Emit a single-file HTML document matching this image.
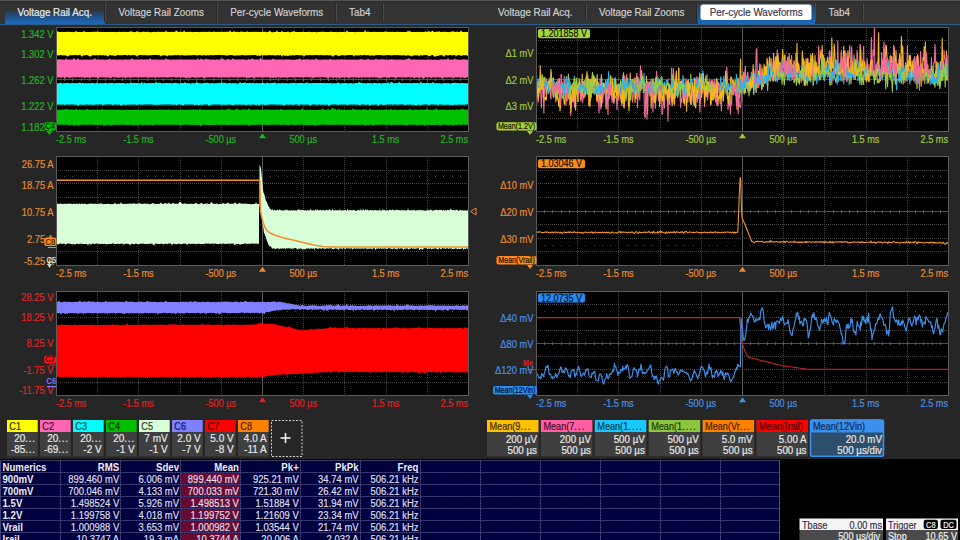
<!DOCTYPE html><html><head><meta charset="utf-8"><style>html,body{margin:0;padding:0;background:#262626;width:960px;height:540px;overflow:hidden} svg{display:block} text{font-family:'Liberation Sans',sans-serif}</style></head><body>
<svg width="960" height="540" viewBox="0 0 960 540">
<rect x="0" y="0" width="960" height="540" fill="#262626"/>
<defs><linearGradient id="tabg" x1="0" y1="0" x2="0" y2="1"><stop offset="0" stop-color="#2a3c50"/><stop offset="1" stop-color="#176ac4"/></linearGradient></defs>
<rect x="0" y="0" width="960" height="24" fill="#333333"/>
<rect x="0" y="0" width="960" height="1" fill="#555555"/>
<rect x="0" y="1" width="960" height="1" fill="#2c2c2c"/>
<path d="M5,24 V11.5 Q5,11 5.5,11 H104.5 Q105,11 105,11.5 V24 Z" fill="url(#tabg)"/>
<rect x="104" y="3" width="1" height="19" fill="#292929"/><rect x="105" y="3" width="1" height="19" fill="#4a4a4a"/>
<rect x="216" y="3" width="1" height="19" fill="#292929"/><rect x="217" y="3" width="1" height="19" fill="#4a4a4a"/>
<rect x="335" y="3" width="1" height="19" fill="#292929"/><rect x="336" y="3" width="1" height="19" fill="#4a4a4a"/>
<rect x="382" y="3" width="1" height="19" fill="#292929"/><rect x="383" y="3" width="1" height="19" fill="#4a4a4a"/>
<rect x="585" y="3" width="1" height="19" fill="#292929"/><rect x="586" y="3" width="1" height="19" fill="#4a4a4a"/>
<rect x="696" y="3" width="1" height="19" fill="#292929"/><rect x="697" y="3" width="1" height="19" fill="#4a4a4a"/>
<rect x="814" y="3" width="1" height="19" fill="#292929"/><rect x="815" y="3" width="1" height="19" fill="#4a4a4a"/>
<rect x="862" y="3" width="1" height="19" fill="#292929"/><rect x="863" y="3" width="1" height="19" fill="#4a4a4a"/>
<path d="M698,24 V7 Q698,3 702,3 H811 Q815,3 815,7 V24 Z" fill="url(#tabg)"/>
<rect x="700.5" y="4.5" width="111" height="15.5" rx="2.5" fill="#ffffff"/>
<rect x="0" y="24" width="960" height="1" fill="#2a5a88"/><rect x="0" y="25" width="960" height="1" fill="#17324c"/>
<text transform="translate(54.70,16.30) scale(0.895,1)" fill="#ececec" stroke="#ececec" stroke-width="0.2" font-size="11" text-anchor="middle" font-weight="normal" >Voltage Rail Acq.</text>
<text transform="translate(161.20,16.30) scale(0.895,1)" fill="#d0d0d0" stroke="#d0d0d0" stroke-width="0.2" font-size="11" text-anchor="middle" font-weight="normal" >Voltage Rail Zooms</text>
<text transform="translate(276.70,16.30) scale(0.895,1)" fill="#d0d0d0" stroke="#d0d0d0" stroke-width="0.2" font-size="11" text-anchor="middle" font-weight="normal" >Per-cycle Waveforms</text>
<text transform="translate(359.70,16.30) scale(0.895,1)" fill="#d0d0d0" stroke="#d0d0d0" stroke-width="0.2" font-size="11" text-anchor="middle" font-weight="normal" >Tab4</text>
<text transform="translate(535.20,16.30) scale(0.895,1)" fill="#d0d0d0" stroke="#d0d0d0" stroke-width="0.2" font-size="11" text-anchor="middle" font-weight="normal" >Voltage Rail Acq.</text>
<text transform="translate(641.70,16.30) scale(0.895,1)" fill="#d0d0d0" stroke="#d0d0d0" stroke-width="0.2" font-size="11" text-anchor="middle" font-weight="normal" >Voltage Rail Zooms</text>
<text transform="translate(756.20,16.30) scale(0.895,1)" fill="#3a3550" stroke="#3a3550" stroke-width="0.2" font-size="11" text-anchor="middle" font-weight="normal" >Per-cycle Waveforms</text>
<text transform="translate(839.20,16.30) scale(0.895,1)" fill="#d0d0d0" stroke="#d0d0d0" stroke-width="0.2" font-size="11" text-anchor="middle" font-weight="normal" >Tab4</text>
<rect x="56" y="27" width="412" height="104" fill="#000"/>
<line x1="97.5" y1="27" x2="97.5" y2="131" stroke="#464646" stroke-width="1" stroke-dasharray="1 1"/><line x1="138.5" y1="27" x2="138.5" y2="131" stroke="#464646" stroke-width="1" stroke-dasharray="1 1"/><line x1="180.5" y1="27" x2="180.5" y2="131" stroke="#464646" stroke-width="1" stroke-dasharray="1 1"/><line x1="221.5" y1="27" x2="221.5" y2="131" stroke="#464646" stroke-width="1" stroke-dasharray="1 1"/><line x1="262.5" y1="27" x2="262.5" y2="131" stroke="#5a5a5a" stroke-width="1"/><line x1="303.5" y1="27" x2="303.5" y2="131" stroke="#464646" stroke-width="1" stroke-dasharray="1 1"/><line x1="344.5" y1="27" x2="344.5" y2="131" stroke="#464646" stroke-width="1" stroke-dasharray="1 1"/><line x1="386.5" y1="27" x2="386.5" y2="131" stroke="#464646" stroke-width="1" stroke-dasharray="1 1"/><line x1="427.5" y1="27" x2="427.5" y2="131" stroke="#464646" stroke-width="1" stroke-dasharray="1 1"/><line x1="56" y1="40.5" x2="468" y2="40.5" stroke="#464646" stroke-width="1" stroke-dasharray="1 1"/><line x1="56" y1="53.5" x2="468" y2="53.5" stroke="#464646" stroke-width="1" stroke-dasharray="1 1"/><line x1="56" y1="66.5" x2="468" y2="66.5" stroke="#464646" stroke-width="1" stroke-dasharray="1 1"/><line x1="56" y1="79.5" x2="468" y2="79.5" stroke="#4e4e4e" stroke-width="1"/><line x1="64.5" y1="78.0" x2="64.5" y2="81.0" stroke="#5a5a5a" stroke-width="1"/><line x1="72.5" y1="78.0" x2="72.5" y2="81.0" stroke="#5a5a5a" stroke-width="1"/><line x1="81.5" y1="78.0" x2="81.5" y2="81.0" stroke="#5a5a5a" stroke-width="1"/><line x1="89.5" y1="78.0" x2="89.5" y2="81.0" stroke="#5a5a5a" stroke-width="1"/><line x1="97.5" y1="78.0" x2="97.5" y2="81.0" stroke="#5a5a5a" stroke-width="1"/><line x1="105.5" y1="78.0" x2="105.5" y2="81.0" stroke="#5a5a5a" stroke-width="1"/><line x1="114.5" y1="78.0" x2="114.5" y2="81.0" stroke="#5a5a5a" stroke-width="1"/><line x1="122.5" y1="78.0" x2="122.5" y2="81.0" stroke="#5a5a5a" stroke-width="1"/><line x1="130.5" y1="78.0" x2="130.5" y2="81.0" stroke="#5a5a5a" stroke-width="1"/><line x1="138.5" y1="78.0" x2="138.5" y2="81.0" stroke="#5a5a5a" stroke-width="1"/><line x1="147.5" y1="78.0" x2="147.5" y2="81.0" stroke="#5a5a5a" stroke-width="1"/><line x1="155.5" y1="78.0" x2="155.5" y2="81.0" stroke="#5a5a5a" stroke-width="1"/><line x1="163.5" y1="78.0" x2="163.5" y2="81.0" stroke="#5a5a5a" stroke-width="1"/><line x1="171.5" y1="78.0" x2="171.5" y2="81.0" stroke="#5a5a5a" stroke-width="1"/><line x1="180.5" y1="78.0" x2="180.5" y2="81.0" stroke="#5a5a5a" stroke-width="1"/><line x1="188.5" y1="78.0" x2="188.5" y2="81.0" stroke="#5a5a5a" stroke-width="1"/><line x1="196.5" y1="78.0" x2="196.5" y2="81.0" stroke="#5a5a5a" stroke-width="1"/><line x1="204.5" y1="78.0" x2="204.5" y2="81.0" stroke="#5a5a5a" stroke-width="1"/><line x1="213.5" y1="78.0" x2="213.5" y2="81.0" stroke="#5a5a5a" stroke-width="1"/><line x1="221.5" y1="78.0" x2="221.5" y2="81.0" stroke="#5a5a5a" stroke-width="1"/><line x1="229.5" y1="78.0" x2="229.5" y2="81.0" stroke="#5a5a5a" stroke-width="1"/><line x1="237.5" y1="78.0" x2="237.5" y2="81.0" stroke="#5a5a5a" stroke-width="1"/><line x1="246.5" y1="78.0" x2="246.5" y2="81.0" stroke="#5a5a5a" stroke-width="1"/><line x1="254.5" y1="78.0" x2="254.5" y2="81.0" stroke="#5a5a5a" stroke-width="1"/><line x1="262.5" y1="78.0" x2="262.5" y2="81.0" stroke="#5a5a5a" stroke-width="1"/><line x1="270.5" y1="78.0" x2="270.5" y2="81.0" stroke="#5a5a5a" stroke-width="1"/><line x1="278.5" y1="78.0" x2="278.5" y2="81.0" stroke="#5a5a5a" stroke-width="1"/><line x1="287.5" y1="78.0" x2="287.5" y2="81.0" stroke="#5a5a5a" stroke-width="1"/><line x1="295.5" y1="78.0" x2="295.5" y2="81.0" stroke="#5a5a5a" stroke-width="1"/><line x1="303.5" y1="78.0" x2="303.5" y2="81.0" stroke="#5a5a5a" stroke-width="1"/><line x1="311.5" y1="78.0" x2="311.5" y2="81.0" stroke="#5a5a5a" stroke-width="1"/><line x1="320.5" y1="78.0" x2="320.5" y2="81.0" stroke="#5a5a5a" stroke-width="1"/><line x1="328.5" y1="78.0" x2="328.5" y2="81.0" stroke="#5a5a5a" stroke-width="1"/><line x1="336.5" y1="78.0" x2="336.5" y2="81.0" stroke="#5a5a5a" stroke-width="1"/><line x1="344.5" y1="78.0" x2="344.5" y2="81.0" stroke="#5a5a5a" stroke-width="1"/><line x1="353.5" y1="78.0" x2="353.5" y2="81.0" stroke="#5a5a5a" stroke-width="1"/><line x1="361.5" y1="78.0" x2="361.5" y2="81.0" stroke="#5a5a5a" stroke-width="1"/><line x1="369.5" y1="78.0" x2="369.5" y2="81.0" stroke="#5a5a5a" stroke-width="1"/><line x1="377.5" y1="78.0" x2="377.5" y2="81.0" stroke="#5a5a5a" stroke-width="1"/><line x1="386.5" y1="78.0" x2="386.5" y2="81.0" stroke="#5a5a5a" stroke-width="1"/><line x1="394.5" y1="78.0" x2="394.5" y2="81.0" stroke="#5a5a5a" stroke-width="1"/><line x1="402.5" y1="78.0" x2="402.5" y2="81.0" stroke="#5a5a5a" stroke-width="1"/><line x1="410.5" y1="78.0" x2="410.5" y2="81.0" stroke="#5a5a5a" stroke-width="1"/><line x1="419.5" y1="78.0" x2="419.5" y2="81.0" stroke="#5a5a5a" stroke-width="1"/><line x1="427.5" y1="78.0" x2="427.5" y2="81.0" stroke="#5a5a5a" stroke-width="1"/><line x1="435.5" y1="78.0" x2="435.5" y2="81.0" stroke="#5a5a5a" stroke-width="1"/><line x1="443.5" y1="78.0" x2="443.5" y2="81.0" stroke="#5a5a5a" stroke-width="1"/><line x1="452.5" y1="78.0" x2="452.5" y2="81.0" stroke="#5a5a5a" stroke-width="1"/><line x1="460.5" y1="78.0" x2="460.5" y2="81.0" stroke="#5a5a5a" stroke-width="1"/><line x1="56" y1="92.5" x2="468" y2="92.5" stroke="#464646" stroke-width="1" stroke-dasharray="1 1"/><line x1="56" y1="105.5" x2="468" y2="105.5" stroke="#464646" stroke-width="1" stroke-dasharray="1 1"/><line x1="56" y1="118.5" x2="468" y2="118.5" stroke="#464646" stroke-width="1" stroke-dasharray="1 1"/><rect x="64" y="47.0" width="1" height="1" fill="#4a4a4a"/><rect x="72" y="47.0" width="1" height="1" fill="#4a4a4a"/><rect x="81" y="47.0" width="1" height="1" fill="#4a4a4a"/><rect x="89" y="47.0" width="1" height="1" fill="#4a4a4a"/><rect x="105" y="47.0" width="1" height="1" fill="#4a4a4a"/><rect x="114" y="47.0" width="1" height="1" fill="#4a4a4a"/><rect x="122" y="47.0" width="1" height="1" fill="#4a4a4a"/><rect x="130" y="47.0" width="1" height="1" fill="#4a4a4a"/><rect x="147" y="47.0" width="1" height="1" fill="#4a4a4a"/><rect x="155" y="47.0" width="1" height="1" fill="#4a4a4a"/><rect x="163" y="47.0" width="1" height="1" fill="#4a4a4a"/><rect x="171" y="47.0" width="1" height="1" fill="#4a4a4a"/><rect x="188" y="47.0" width="1" height="1" fill="#4a4a4a"/><rect x="196" y="47.0" width="1" height="1" fill="#4a4a4a"/><rect x="204" y="47.0" width="1" height="1" fill="#4a4a4a"/><rect x="213" y="47.0" width="1" height="1" fill="#4a4a4a"/><rect x="229" y="47.0" width="1" height="1" fill="#4a4a4a"/><rect x="237" y="47.0" width="1" height="1" fill="#4a4a4a"/><rect x="246" y="47.0" width="1" height="1" fill="#4a4a4a"/><rect x="254" y="47.0" width="1" height="1" fill="#4a4a4a"/><rect x="270" y="47.0" width="1" height="1" fill="#4a4a4a"/><rect x="278" y="47.0" width="1" height="1" fill="#4a4a4a"/><rect x="287" y="47.0" width="1" height="1" fill="#4a4a4a"/><rect x="295" y="47.0" width="1" height="1" fill="#4a4a4a"/><rect x="311" y="47.0" width="1" height="1" fill="#4a4a4a"/><rect x="320" y="47.0" width="1" height="1" fill="#4a4a4a"/><rect x="328" y="47.0" width="1" height="1" fill="#4a4a4a"/><rect x="336" y="47.0" width="1" height="1" fill="#4a4a4a"/><rect x="353" y="47.0" width="1" height="1" fill="#4a4a4a"/><rect x="361" y="47.0" width="1" height="1" fill="#4a4a4a"/><rect x="369" y="47.0" width="1" height="1" fill="#4a4a4a"/><rect x="377" y="47.0" width="1" height="1" fill="#4a4a4a"/><rect x="394" y="47.0" width="1" height="1" fill="#4a4a4a"/><rect x="402" y="47.0" width="1" height="1" fill="#4a4a4a"/><rect x="410" y="47.0" width="1" height="1" fill="#4a4a4a"/><rect x="419" y="47.0" width="1" height="1" fill="#4a4a4a"/><rect x="435" y="47.0" width="1" height="1" fill="#4a4a4a"/><rect x="443" y="47.0" width="1" height="1" fill="#4a4a4a"/><rect x="452" y="47.0" width="1" height="1" fill="#4a4a4a"/><rect x="460" y="47.0" width="1" height="1" fill="#4a4a4a"/><rect x="64" y="112.0" width="1" height="1" fill="#4a4a4a"/><rect x="72" y="112.0" width="1" height="1" fill="#4a4a4a"/><rect x="81" y="112.0" width="1" height="1" fill="#4a4a4a"/><rect x="89" y="112.0" width="1" height="1" fill="#4a4a4a"/><rect x="105" y="112.0" width="1" height="1" fill="#4a4a4a"/><rect x="114" y="112.0" width="1" height="1" fill="#4a4a4a"/><rect x="122" y="112.0" width="1" height="1" fill="#4a4a4a"/><rect x="130" y="112.0" width="1" height="1" fill="#4a4a4a"/><rect x="147" y="112.0" width="1" height="1" fill="#4a4a4a"/><rect x="155" y="112.0" width="1" height="1" fill="#4a4a4a"/><rect x="163" y="112.0" width="1" height="1" fill="#4a4a4a"/><rect x="171" y="112.0" width="1" height="1" fill="#4a4a4a"/><rect x="188" y="112.0" width="1" height="1" fill="#4a4a4a"/><rect x="196" y="112.0" width="1" height="1" fill="#4a4a4a"/><rect x="204" y="112.0" width="1" height="1" fill="#4a4a4a"/><rect x="213" y="112.0" width="1" height="1" fill="#4a4a4a"/><rect x="229" y="112.0" width="1" height="1" fill="#4a4a4a"/><rect x="237" y="112.0" width="1" height="1" fill="#4a4a4a"/><rect x="246" y="112.0" width="1" height="1" fill="#4a4a4a"/><rect x="254" y="112.0" width="1" height="1" fill="#4a4a4a"/><rect x="270" y="112.0" width="1" height="1" fill="#4a4a4a"/><rect x="278" y="112.0" width="1" height="1" fill="#4a4a4a"/><rect x="287" y="112.0" width="1" height="1" fill="#4a4a4a"/><rect x="295" y="112.0" width="1" height="1" fill="#4a4a4a"/><rect x="311" y="112.0" width="1" height="1" fill="#4a4a4a"/><rect x="320" y="112.0" width="1" height="1" fill="#4a4a4a"/><rect x="328" y="112.0" width="1" height="1" fill="#4a4a4a"/><rect x="336" y="112.0" width="1" height="1" fill="#4a4a4a"/><rect x="353" y="112.0" width="1" height="1" fill="#4a4a4a"/><rect x="361" y="112.0" width="1" height="1" fill="#4a4a4a"/><rect x="369" y="112.0" width="1" height="1" fill="#4a4a4a"/><rect x="377" y="112.0" width="1" height="1" fill="#4a4a4a"/><rect x="394" y="112.0" width="1" height="1" fill="#4a4a4a"/><rect x="402" y="112.0" width="1" height="1" fill="#4a4a4a"/><rect x="410" y="112.0" width="1" height="1" fill="#4a4a4a"/><rect x="419" y="112.0" width="1" height="1" fill="#4a4a4a"/><rect x="435" y="112.0" width="1" height="1" fill="#4a4a4a"/><rect x="443" y="112.0" width="1" height="1" fill="#4a4a4a"/><rect x="452" y="112.0" width="1" height="1" fill="#4a4a4a"/><rect x="460" y="112.0" width="1" height="1" fill="#4a4a4a"/>
<svg x="56" y="27" width="412" height="104" viewBox="56 27 412 104" overflow="hidden">
<path d="M56.0,32.0 L57.0,31.1 L58.0,31.4 L59.0,32.1 L60.0,32.0 L61.0,32.1 L62.0,31.8 L63.0,32.0 L64.0,31.9 L65.0,32.0 L66.0,32.1 L67.0,31.8 L68.0,31.8 L69.0,31.8 L70.0,31.9 L71.0,31.8 L72.0,32.2 L73.0,31.8 L74.0,32.2 L75.0,31.8 L76.0,31.0 L77.0,31.8 L78.0,32.0 L79.0,32.1 L80.0,31.9 L81.0,32.0 L82.0,31.9 L83.0,31.8 L84.0,30.9 L85.0,32.1 L86.0,32.1 L87.0,31.9 L88.0,32.0 L89.0,32.0 L90.0,32.1 L91.0,31.9 L92.0,31.7 L93.0,32.0 L94.0,31.8 L95.0,31.7 L96.0,31.8 L97.0,31.7 L98.0,31.7 L99.0,31.7 L100.0,32.1 L101.0,31.8 L102.0,32.2 L103.0,31.8 L104.0,32.0 L105.0,32.0 L106.0,32.1 L107.0,32.1 L108.0,32.0 L109.0,31.9 L110.0,31.8 L111.0,32.1 L112.0,32.0 L113.0,32.0 L114.0,31.7 L115.0,32.2 L116.0,32.1 L117.0,32.0 L118.0,32.1 L119.0,31.8 L120.0,31.7 L121.0,31.9 L122.0,32.0 L123.0,31.7 L124.0,31.8 L125.0,32.2 L126.0,31.8 L127.0,31.9 L128.0,32.1 L129.0,31.7 L130.0,31.9 L131.0,30.8 L132.0,31.9 L133.0,31.8 L134.0,32.2 L135.0,32.0 L136.0,32.1 L137.0,30.9 L138.0,31.9 L139.0,32.2 L140.0,31.9 L141.0,31.9 L142.0,32.2 L143.0,31.8 L144.0,31.6 L145.0,31.9 L146.0,32.1 L147.0,31.8 L148.0,31.7 L149.0,31.9 L150.0,32.2 L151.0,32.2 L152.0,32.1 L153.0,32.1 L154.0,31.7 L155.0,32.0 L156.0,32.0 L157.0,32.2 L158.0,31.6 L159.0,31.9 L160.0,31.8 L161.0,32.1 L162.0,31.8 L163.0,32.1 L164.0,31.8 L165.0,31.9 L166.0,30.5 L167.0,31.9 L168.0,31.8 L169.0,32.2 L170.0,31.8 L171.0,32.0 L172.0,31.8 L173.0,32.1 L174.0,31.7 L175.0,31.9 L176.0,30.4 L177.0,30.9 L178.0,32.0 L179.0,32.1 L180.0,31.7 L181.0,31.8 L182.0,32.0 L183.0,32.0 L184.0,30.4 L185.0,31.7 L186.0,32.0 L187.0,32.0 L188.0,31.8 L189.0,32.1 L190.0,31.7 L191.0,31.7 L192.0,32.2 L193.0,31.9 L194.0,32.1 L195.0,31.8 L196.0,32.0 L197.0,32.1 L198.0,32.1 L199.0,32.1 L200.0,32.2 L201.0,31.8 L202.0,31.9 L203.0,31.7 L204.0,31.8 L205.0,32.0 L206.0,31.7 L207.0,32.0 L208.0,31.7 L209.0,31.8 L210.0,31.7 L211.0,32.0 L212.0,32.1 L213.0,32.1 L214.0,31.2 L215.0,32.1 L216.0,32.0 L217.0,32.0 L218.0,31.8 L219.0,31.9 L220.0,31.7 L221.0,32.0 L222.0,31.8 L223.0,32.0 L224.0,31.8 L225.0,32.1 L226.0,31.7 L227.0,31.7 L228.0,31.8 L229.0,31.7 L230.0,30.6 L231.0,32.0 L232.0,32.0 L233.0,32.1 L234.0,31.1 L235.0,32.1 L236.0,31.8 L237.0,31.7 L238.0,32.0 L239.0,32.1 L240.0,32.2 L241.0,31.3 L242.0,31.7 L243.0,32.0 L244.0,31.8 L245.0,32.0 L246.0,32.2 L247.0,31.2 L248.0,31.8 L249.0,32.0 L250.0,32.0 L251.0,31.8 L252.0,32.1 L253.0,32.1 L254.0,31.8 L255.0,31.7 L256.0,31.9 L257.0,31.8 L258.0,32.1 L259.0,31.7 L260.0,32.1 L261.0,31.9 L262.0,32.1 L263.0,31.5 L264.0,32.0 L265.0,31.5 L266.0,32.2 L267.0,32.1 L268.0,31.9 L269.0,31.7 L270.0,30.5 L271.0,32.0 L272.0,32.2 L273.0,32.2 L274.0,32.1 L275.0,32.1 L276.0,32.1 L277.0,30.3 L278.0,31.9 L279.0,32.1 L280.0,32.1 L281.0,32.0 L282.0,30.7 L283.0,32.1 L284.0,32.0 L285.0,31.9 L286.0,32.0 L287.0,32.0 L288.0,31.2 L289.0,32.2 L290.0,32.2 L291.0,32.1 L292.0,31.8 L293.0,31.7 L294.0,31.1 L295.0,31.8 L296.0,31.9 L297.0,31.9 L298.0,32.1 L299.0,32.1 L300.0,31.9 L301.0,31.9 L302.0,31.9 L303.0,31.7 L304.0,32.0 L305.0,32.1 L306.0,31.9 L307.0,31.9 L308.0,32.1 L309.0,31.4 L310.0,31.9 L311.0,32.1 L312.0,32.2 L313.0,32.0 L314.0,31.9 L315.0,31.7 L316.0,32.2 L317.0,32.2 L318.0,31.7 L319.0,31.9 L320.0,32.0 L321.0,31.8 L322.0,31.8 L323.0,31.7 L324.0,31.8 L325.0,32.1 L326.0,31.9 L327.0,32.1 L328.0,32.1 L329.0,32.0 L330.0,31.7 L331.0,31.7 L332.0,31.8 L333.0,32.0 L334.0,31.9 L335.0,32.1 L336.0,31.9 L337.0,32.0 L338.0,32.2 L339.0,32.1 L340.0,31.8 L341.0,31.9 L342.0,32.0 L343.0,32.1 L344.0,31.7 L345.0,32.2 L346.0,32.0 L347.0,30.3 L348.0,31.8 L349.0,32.0 L350.0,32.0 L351.0,32.1 L352.0,32.1 L353.0,31.9 L354.0,32.0 L355.0,32.2 L356.0,31.9 L357.0,32.0 L358.0,31.9 L359.0,31.8 L360.0,32.0 L361.0,32.0 L362.0,32.0 L363.0,32.1 L364.0,32.1 L365.0,30.1 L366.0,31.7 L367.0,32.1 L368.0,31.3 L369.0,31.9 L370.0,31.9 L371.0,32.0 L372.0,32.1 L373.0,31.8 L374.0,32.0 L375.0,31.8 L376.0,32.0 L377.0,31.9 L378.0,31.8 L379.0,32.2 L380.0,31.7 L381.0,31.9 L382.0,31.8 L383.0,32.1 L384.0,32.1 L385.0,31.2 L386.0,32.0 L387.0,31.7 L388.0,32.0 L389.0,31.8 L390.0,32.1 L391.0,31.8 L392.0,31.9 L393.0,31.8 L394.0,32.0 L395.0,32.1 L396.0,32.0 L397.0,31.7 L398.0,31.7 L399.0,31.9 L400.0,31.8 L401.0,32.0 L402.0,32.1 L403.0,31.9 L404.0,32.1 L405.0,32.0 L406.0,32.1 L407.0,32.1 L408.0,30.3 L409.0,31.9 L410.0,30.6 L411.0,31.9 L412.0,31.9 L413.0,31.9 L414.0,32.0 L415.0,32.0 L416.0,32.1 L417.0,32.1 L418.0,31.8 L419.0,31.9 L420.0,31.8 L421.0,32.2 L422.0,31.9 L423.0,31.9 L424.0,31.9 L425.0,31.5 L426.0,31.7 L427.0,31.8 L428.0,32.0 L429.0,30.7 L430.0,31.9 L431.0,31.9 L432.0,30.8 L433.0,31.0 L434.0,32.2 L435.0,32.1 L436.0,31.8 L437.0,31.8 L438.0,31.7 L439.0,31.2 L440.0,31.8 L441.0,31.9 L442.0,31.8 L443.0,32.0 L444.0,31.8 L445.0,31.8 L446.0,31.7 L447.0,32.0 L448.0,31.9 L449.0,32.2 L450.0,31.8 L451.0,31.8 L452.0,31.8 L453.0,31.0 L454.0,31.8 L455.0,31.9 L456.0,31.8 L457.0,31.8 L458.0,31.8 L459.0,32.1 L460.0,32.0 L461.0,30.3 L462.0,31.8 L463.0,31.9 L464.0,32.0 L465.0,32.0 L466.0,31.7 L467.0,32.0 L468.0,32.0 L468.0,56.5 L467.0,55.3 L466.0,55.0 L465.0,55.4 L464.0,55.1 L463.0,55.5 L462.0,55.3 L461.0,56.3 L460.0,55.2 L459.0,55.1 L458.0,55.2 L457.0,55.3 L456.0,56.7 L455.0,55.1 L454.0,55.1 L453.0,55.4 L452.0,55.3 L451.0,55.3 L450.0,55.0 L449.0,55.2 L448.0,55.4 L447.0,55.2 L446.0,55.3 L445.0,55.2 L444.0,56.9 L443.0,55.4 L442.0,55.3 L441.0,55.3 L440.0,55.0 L439.0,55.4 L438.0,56.2 L437.0,55.5 L436.0,56.5 L435.0,56.5 L434.0,56.4 L433.0,55.1 L432.0,55.1 L431.0,55.5 L430.0,55.9 L429.0,56.5 L428.0,55.2 L427.0,55.1 L426.0,55.2 L425.0,55.0 L424.0,55.3 L423.0,55.3 L422.0,55.5 L421.0,55.5 L420.0,55.0 L419.0,56.7 L418.0,55.2 L417.0,55.5 L416.0,55.2 L415.0,55.3 L414.0,55.4 L413.0,55.4 L412.0,56.7 L411.0,55.2 L410.0,56.4 L409.0,55.2 L408.0,55.2 L407.0,55.2 L406.0,56.1 L405.0,55.3 L404.0,55.3 L403.0,55.4 L402.0,55.3 L401.0,55.5 L400.0,55.1 L399.0,55.5 L398.0,55.1 L397.0,55.0 L396.0,55.3 L395.0,55.2 L394.0,55.0 L393.0,55.2 L392.0,55.4 L391.0,55.2 L390.0,55.2 L389.0,55.2 L388.0,55.1 L387.0,55.1 L386.0,55.1 L385.0,55.2 L384.0,55.7 L383.0,55.2 L382.0,55.2 L381.0,55.3 L380.0,55.1 L379.0,55.1 L378.0,55.2 L377.0,55.1 L376.0,55.3 L375.0,55.3 L374.0,56.1 L373.0,55.3 L372.0,55.4 L371.0,55.4 L370.0,55.4 L369.0,55.2 L368.0,55.4 L367.0,55.1 L366.0,55.4 L365.0,55.1 L364.0,55.1 L363.0,55.2 L362.0,55.4 L361.0,55.1 L360.0,55.3 L359.0,55.4 L358.0,55.2 L357.0,55.4 L356.0,55.4 L355.0,55.1 L354.0,57.0 L353.0,55.3 L352.0,55.0 L351.0,55.3 L350.0,55.1 L349.0,55.1 L348.0,55.0 L347.0,55.4 L346.0,55.3 L345.0,55.2 L344.0,55.4 L343.0,55.2 L342.0,55.0 L341.0,55.4 L340.0,55.4 L339.0,56.6 L338.0,55.5 L337.0,55.4 L336.0,55.0 L335.0,55.3 L334.0,55.5 L333.0,57.0 L332.0,55.4 L331.0,55.4 L330.0,55.3 L329.0,55.2 L328.0,55.5 L327.0,55.0 L326.0,55.3 L325.0,55.2 L324.0,55.4 L323.0,55.0 L322.0,55.4 L321.0,55.0 L320.0,55.0 L319.0,55.4 L318.0,55.1 L317.0,55.0 L316.0,55.2 L315.0,55.1 L314.0,55.3 L313.0,55.0 L312.0,55.4 L311.0,55.1 L310.0,55.3 L309.0,55.1 L308.0,55.3 L307.0,55.3 L306.0,55.3 L305.0,55.5 L304.0,56.8 L303.0,55.2 L302.0,55.4 L301.0,55.1 L300.0,55.4 L299.0,55.1 L298.0,55.3 L297.0,55.0 L296.0,55.1 L295.0,55.4 L294.0,55.4 L293.0,55.1 L292.0,55.5 L291.0,55.5 L290.0,55.2 L289.0,55.4 L288.0,56.4 L287.0,55.5 L286.0,55.4 L285.0,56.3 L284.0,55.3 L283.0,55.3 L282.0,56.9 L281.0,55.1 L280.0,55.2 L279.0,55.4 L278.0,55.1 L277.0,55.2 L276.0,55.5 L275.0,55.4 L274.0,55.3 L273.0,55.2 L272.0,55.3 L271.0,55.2 L270.0,55.2 L269.0,55.1 L268.0,55.2 L267.0,55.5 L266.0,55.3 L265.0,55.3 L264.0,55.4 L263.0,55.3 L262.0,55.3 L261.0,55.2 L260.0,56.5 L259.0,55.4 L258.0,55.5 L257.0,56.0 L256.0,55.1 L255.0,55.1 L254.0,55.2 L253.0,55.1 L252.0,55.2 L251.0,55.1 L250.0,55.3 L249.0,55.2 L248.0,55.3 L247.0,55.2 L246.0,55.4 L245.0,55.2 L244.0,55.4 L243.0,55.1 L242.0,55.1 L241.0,55.2 L240.0,55.5 L239.0,55.2 L238.0,55.5 L237.0,55.4 L236.0,55.1 L235.0,56.2 L234.0,55.2 L233.0,55.4 L232.0,55.1 L231.0,55.0 L230.0,55.2 L229.0,55.1 L228.0,55.4 L227.0,55.7 L226.0,55.2 L225.0,55.2 L224.0,55.5 L223.0,55.1 L222.0,55.1 L221.0,55.1 L220.0,55.0 L219.0,55.1 L218.0,55.0 L217.0,55.1 L216.0,55.3 L215.0,55.0 L214.0,55.3 L213.0,55.3 L212.0,55.3 L211.0,55.0 L210.0,55.3 L209.0,55.3 L208.0,55.4 L207.0,55.0 L206.0,55.4 L205.0,55.5 L204.0,55.1 L203.0,55.3 L202.0,55.7 L201.0,55.2 L200.0,55.1 L199.0,55.0 L198.0,55.5 L197.0,55.5 L196.0,55.2 L195.0,55.1 L194.0,55.2 L193.0,55.0 L192.0,55.2 L191.0,55.3 L190.0,55.4 L189.0,55.1 L188.0,55.5 L187.0,55.3 L186.0,55.5 L185.0,55.5 L184.0,55.4 L183.0,55.2 L182.0,55.2 L181.0,55.1 L180.0,55.4 L179.0,55.1 L178.0,55.1 L177.0,55.4 L176.0,55.1 L175.0,55.3 L174.0,55.3 L173.0,55.2 L172.0,55.6 L171.0,55.2 L170.0,55.4 L169.0,55.6 L168.0,55.3 L167.0,56.7 L166.0,55.3 L165.0,55.4 L164.0,55.3 L163.0,55.3 L162.0,55.4 L161.0,56.8 L160.0,55.2 L159.0,55.3 L158.0,55.1 L157.0,55.0 L156.0,55.1 L155.0,55.0 L154.0,55.1 L153.0,55.1 L152.0,55.1 L151.0,55.4 L150.0,55.1 L149.0,55.4 L148.0,55.4 L147.0,55.3 L146.0,55.2 L145.0,55.2 L144.0,55.0 L143.0,55.3 L142.0,55.2 L141.0,55.1 L140.0,55.1 L139.0,55.2 L138.0,55.0 L137.0,56.9 L136.0,55.3 L135.0,55.4 L134.0,55.1 L133.0,55.1 L132.0,55.0 L131.0,55.8 L130.0,55.1 L129.0,55.1 L128.0,55.2 L127.0,55.4 L126.0,55.1 L125.0,55.0 L124.0,55.1 L123.0,55.3 L122.0,55.3 L121.0,55.2 L120.0,55.3 L119.0,55.3 L118.0,55.1 L117.0,55.3 L116.0,55.4 L115.0,56.5 L114.0,55.3 L113.0,55.5 L112.0,55.5 L111.0,55.3 L110.0,55.1 L109.0,55.5 L108.0,56.8 L107.0,55.5 L106.0,55.5 L105.0,55.4 L104.0,55.5 L103.0,55.1 L102.0,55.5 L101.0,55.3 L100.0,55.3 L99.0,55.1 L98.0,55.5 L97.0,55.1 L96.0,55.3 L95.0,55.4 L94.0,55.1 L93.0,55.4 L92.0,55.3 L91.0,56.2 L90.0,56.8 L89.0,55.7 L88.0,55.4 L87.0,55.1 L86.0,55.0 L85.0,55.3 L84.0,55.4 L83.0,55.4 L82.0,57.0 L81.0,55.5 L80.0,55.0 L79.0,55.1 L78.0,55.5 L77.0,55.1 L76.0,55.3 L75.0,55.1 L74.0,55.2 L73.0,55.2 L72.0,55.3 L71.0,55.2 L70.0,55.3 L69.0,55.4 L68.0,56.4 L67.0,56.2 L66.0,55.3 L65.0,55.4 L64.0,55.2 L63.0,55.4 L62.0,55.3 L61.0,55.1 L60.0,55.0 L59.0,55.5 L58.0,55.4 L57.0,55.0 L56.0,56.3Z" fill="#ffff00"/>
<path d="M56.0,57.9 L57.0,59.5 L58.0,59.6 L59.0,59.2 L60.0,59.3 L61.0,59.4 L62.0,59.4 L63.0,59.5 L64.0,59.7 L65.0,59.7 L66.0,58.0 L67.0,59.4 L68.0,59.8 L69.0,59.6 L70.0,59.5 L71.0,59.5 L72.0,59.6 L73.0,59.6 L74.0,57.6 L75.0,59.5 L76.0,59.7 L77.0,59.3 L78.0,58.0 L79.0,59.8 L80.0,59.8 L81.0,59.6 L82.0,59.7 L83.0,59.5 L84.0,59.7 L85.0,59.4 L86.0,59.6 L87.0,59.6 L88.0,59.8 L89.0,59.7 L90.0,59.7 L91.0,59.6 L92.0,59.4 L93.0,59.6 L94.0,59.3 L95.0,57.8 L96.0,59.7 L97.0,59.5 L98.0,59.5 L99.0,59.2 L100.0,59.7 L101.0,59.5 L102.0,59.4 L103.0,59.6 L104.0,59.6 L105.0,59.7 L106.0,59.4 L107.0,59.8 L108.0,59.7 L109.0,58.8 L110.0,59.3 L111.0,59.4 L112.0,59.7 L113.0,59.3 L114.0,59.6 L115.0,59.5 L116.0,59.5 L117.0,59.7 L118.0,59.6 L119.0,59.4 L120.0,59.7 L121.0,59.5 L122.0,59.7 L123.0,59.8 L124.0,59.5 L125.0,59.7 L126.0,58.9 L127.0,59.7 L128.0,59.7 L129.0,59.5 L130.0,59.4 L131.0,59.4 L132.0,58.0 L133.0,59.3 L134.0,59.4 L135.0,59.6 L136.0,59.5 L137.0,59.4 L138.0,59.6 L139.0,59.8 L140.0,59.4 L141.0,59.3 L142.0,59.3 L143.0,59.5 L144.0,59.6 L145.0,59.5 L146.0,59.6 L147.0,59.3 L148.0,59.3 L149.0,59.7 L150.0,57.9 L151.0,59.3 L152.0,59.7 L153.0,59.7 L154.0,59.3 L155.0,59.4 L156.0,59.4 L157.0,59.6 L158.0,59.5 L159.0,59.7 L160.0,59.7 L161.0,59.4 L162.0,59.4 L163.0,59.8 L164.0,59.6 L165.0,59.5 L166.0,58.0 L167.0,59.4 L168.0,59.3 L169.0,59.6 L170.0,59.4 L171.0,59.7 L172.0,59.7 L173.0,59.6 L174.0,59.4 L175.0,59.7 L176.0,59.6 L177.0,59.4 L178.0,59.4 L179.0,59.6 L180.0,59.5 L181.0,59.4 L182.0,59.6 L183.0,59.4 L184.0,59.7 L185.0,59.5 L186.0,59.4 L187.0,59.6 L188.0,59.7 L189.0,59.6 L190.0,59.4 L191.0,59.5 L192.0,59.5 L193.0,59.5 L194.0,59.4 L195.0,59.7 L196.0,59.5 L197.0,59.4 L198.0,58.1 L199.0,59.8 L200.0,59.7 L201.0,58.2 L202.0,59.4 L203.0,59.6 L204.0,59.4 L205.0,59.6 L206.0,58.2 L207.0,59.5 L208.0,59.0 L209.0,59.6 L210.0,59.7 L211.0,59.3 L212.0,59.7 L213.0,59.5 L214.0,59.5 L215.0,59.7 L216.0,59.8 L217.0,59.0 L218.0,59.7 L219.0,59.8 L220.0,59.7 L221.0,57.9 L222.0,59.3 L223.0,58.3 L224.0,59.7 L225.0,59.7 L226.0,59.6 L227.0,59.6 L228.0,58.7 L229.0,59.4 L230.0,59.6 L231.0,59.8 L232.0,59.2 L233.0,57.9 L234.0,59.6 L235.0,59.6 L236.0,59.4 L237.0,59.6 L238.0,59.8 L239.0,59.3 L240.0,59.5 L241.0,59.5 L242.0,59.6 L243.0,59.0 L244.0,59.8 L245.0,59.6 L246.0,59.7 L247.0,59.7 L248.0,59.7 L249.0,58.6 L250.0,59.8 L251.0,59.4 L252.0,57.9 L253.0,59.3 L254.0,59.0 L255.0,59.7 L256.0,59.4 L257.0,59.3 L258.0,59.6 L259.0,59.7 L260.0,58.4 L261.0,57.7 L262.0,59.7 L263.0,59.5 L264.0,59.5 L265.0,59.7 L266.0,59.4 L267.0,59.7 L268.0,59.8 L269.0,59.6 L270.0,59.6 L271.0,59.7 L272.0,59.6 L273.0,58.6 L274.0,59.0 L275.0,59.7 L276.0,59.5 L277.0,59.4 L278.0,59.5 L279.0,59.4 L280.0,59.4 L281.0,59.6 L282.0,59.6 L283.0,59.7 L284.0,59.8 L285.0,59.5 L286.0,59.6 L287.0,59.6 L288.0,59.5 L289.0,59.6 L290.0,59.4 L291.0,59.7 L292.0,59.7 L293.0,59.7 L294.0,59.8 L295.0,59.7 L296.0,59.5 L297.0,59.4 L298.0,58.9 L299.0,59.6 L300.0,57.9 L301.0,59.8 L302.0,59.8 L303.0,59.8 L304.0,59.5 L305.0,59.6 L306.0,59.4 L307.0,59.3 L308.0,59.3 L309.0,59.5 L310.0,59.7 L311.0,59.8 L312.0,59.3 L313.0,59.4 L314.0,59.7 L315.0,59.6 L316.0,58.0 L317.0,59.6 L318.0,59.6 L319.0,59.7 L320.0,59.7 L321.0,59.7 L322.0,59.7 L323.0,59.4 L324.0,59.6 L325.0,59.5 L326.0,59.7 L327.0,59.4 L328.0,59.5 L329.0,59.7 L330.0,58.8 L331.0,59.4 L332.0,59.4 L333.0,59.7 L334.0,59.6 L335.0,59.7 L336.0,59.7 L337.0,59.6 L338.0,59.3 L339.0,59.7 L340.0,59.6 L341.0,59.5 L342.0,59.3 L343.0,59.6 L344.0,59.6 L345.0,59.8 L346.0,59.5 L347.0,59.7 L348.0,59.8 L349.0,59.5 L350.0,59.4 L351.0,59.7 L352.0,59.4 L353.0,59.5 L354.0,59.7 L355.0,59.6 L356.0,59.7 L357.0,59.5 L358.0,59.7 L359.0,59.4 L360.0,59.4 L361.0,59.0 L362.0,58.9 L363.0,59.6 L364.0,59.7 L365.0,59.7 L366.0,59.8 L367.0,59.4 L368.0,58.2 L369.0,59.6 L370.0,59.8 L371.0,59.7 L372.0,59.6 L373.0,59.7 L374.0,59.5 L375.0,59.6 L376.0,58.4 L377.0,59.4 L378.0,59.6 L379.0,59.5 L380.0,59.5 L381.0,59.8 L382.0,58.3 L383.0,59.8 L384.0,59.3 L385.0,59.6 L386.0,59.7 L387.0,59.4 L388.0,59.8 L389.0,59.4 L390.0,59.6 L391.0,59.6 L392.0,59.0 L393.0,59.5 L394.0,59.7 L395.0,59.6 L396.0,59.8 L397.0,59.8 L398.0,59.5 L399.0,59.5 L400.0,59.7 L401.0,59.4 L402.0,59.7 L403.0,59.8 L404.0,59.7 L405.0,59.5 L406.0,59.4 L407.0,58.9 L408.0,58.7 L409.0,58.0 L410.0,59.3 L411.0,59.6 L412.0,59.8 L413.0,59.3 L414.0,59.4 L415.0,59.3 L416.0,59.8 L417.0,59.4 L418.0,59.8 L419.0,59.4 L420.0,59.8 L421.0,59.6 L422.0,59.7 L423.0,59.4 L424.0,59.7 L425.0,59.7 L426.0,59.7 L427.0,59.7 L428.0,59.8 L429.0,59.5 L430.0,59.7 L431.0,59.5 L432.0,59.7 L433.0,59.8 L434.0,59.8 L435.0,59.6 L436.0,59.8 L437.0,59.8 L438.0,59.7 L439.0,59.7 L440.0,59.4 L441.0,59.3 L442.0,59.5 L443.0,59.6 L444.0,59.4 L445.0,59.3 L446.0,59.5 L447.0,59.4 L448.0,57.6 L449.0,59.4 L450.0,59.7 L451.0,59.4 L452.0,59.5 L453.0,59.8 L454.0,59.5 L455.0,58.3 L456.0,59.6 L457.0,59.4 L458.0,59.4 L459.0,59.7 L460.0,59.7 L461.0,59.7 L462.0,59.6 L463.0,59.3 L464.0,59.2 L465.0,59.4 L466.0,59.4 L467.0,59.4 L468.0,59.6 L468.0,77.4 L467.0,77.2 L466.0,77.4 L465.0,78.4 L464.0,77.7 L463.0,77.6 L462.0,77.7 L461.0,77.5 L460.0,77.7 L459.0,77.2 L458.0,77.5 L457.0,77.8 L456.0,77.3 L455.0,77.4 L454.0,78.5 L453.0,77.6 L452.0,77.6 L451.0,77.6 L450.0,77.7 L449.0,77.3 L448.0,77.6 L447.0,77.7 L446.0,77.6 L445.0,77.6 L444.0,77.6 L443.0,77.7 L442.0,78.9 L441.0,77.5 L440.0,77.4 L439.0,77.7 L438.0,77.3 L437.0,77.6 L436.0,77.4 L435.0,77.4 L434.0,77.5 L433.0,77.5 L432.0,77.6 L431.0,78.7 L430.0,77.2 L429.0,77.3 L428.0,77.4 L427.0,77.5 L426.0,77.3 L425.0,77.5 L424.0,78.3 L423.0,78.9 L422.0,77.4 L421.0,77.5 L420.0,77.3 L419.0,78.4 L418.0,77.2 L417.0,77.6 L416.0,77.4 L415.0,77.7 L414.0,78.7 L413.0,77.3 L412.0,77.6 L411.0,77.4 L410.0,77.5 L409.0,77.3 L408.0,77.6 L407.0,77.5 L406.0,77.6 L405.0,77.7 L404.0,77.5 L403.0,77.2 L402.0,77.5 L401.0,77.4 L400.0,77.5 L399.0,77.3 L398.0,77.4 L397.0,77.3 L396.0,79.1 L395.0,77.4 L394.0,77.6 L393.0,77.3 L392.0,77.5 L391.0,77.3 L390.0,77.4 L389.0,78.3 L388.0,77.6 L387.0,77.5 L386.0,77.4 L385.0,77.2 L384.0,77.6 L383.0,77.4 L382.0,77.6 L381.0,78.6 L380.0,78.0 L379.0,78.6 L378.0,77.5 L377.0,77.4 L376.0,77.4 L375.0,77.4 L374.0,77.2 L373.0,77.6 L372.0,77.5 L371.0,77.5 L370.0,77.4 L369.0,77.5 L368.0,77.6 L367.0,77.4 L366.0,77.8 L365.0,77.4 L364.0,77.4 L363.0,77.6 L362.0,77.7 L361.0,77.6 L360.0,77.3 L359.0,78.3 L358.0,77.4 L357.0,77.6 L356.0,77.7 L355.0,77.5 L354.0,77.3 L353.0,77.5 L352.0,77.5 L351.0,77.6 L350.0,77.5 L349.0,79.0 L348.0,77.4 L347.0,77.6 L346.0,77.3 L345.0,77.7 L344.0,77.3 L343.0,77.7 L342.0,77.6 L341.0,77.5 L340.0,78.6 L339.0,78.2 L338.0,77.6 L337.0,77.4 L336.0,78.1 L335.0,77.3 L334.0,77.3 L333.0,79.0 L332.0,77.2 L331.0,77.2 L330.0,77.7 L329.0,77.2 L328.0,79.3 L327.0,77.6 L326.0,77.4 L325.0,77.5 L324.0,77.3 L323.0,77.3 L322.0,77.6 L321.0,77.3 L320.0,77.6 L319.0,77.3 L318.0,77.7 L317.0,77.2 L316.0,77.2 L315.0,77.4 L314.0,77.4 L313.0,78.7 L312.0,77.3 L311.0,77.5 L310.0,77.5 L309.0,77.4 L308.0,77.2 L307.0,77.3 L306.0,77.4 L305.0,77.3 L304.0,77.5 L303.0,77.4 L302.0,77.3 L301.0,77.6 L300.0,77.5 L299.0,77.5 L298.0,77.2 L297.0,77.4 L296.0,77.3 L295.0,77.5 L294.0,77.6 L293.0,77.7 L292.0,77.6 L291.0,77.3 L290.0,77.6 L289.0,77.2 L288.0,77.4 L287.0,77.8 L286.0,77.5 L285.0,77.8 L284.0,77.4 L283.0,77.4 L282.0,77.4 L281.0,78.0 L280.0,77.5 L279.0,77.5 L278.0,77.3 L277.0,77.6 L276.0,78.7 L275.0,77.3 L274.0,77.5 L273.0,78.2 L272.0,77.5 L271.0,77.8 L270.0,78.1 L269.0,77.3 L268.0,77.6 L267.0,77.6 L266.0,77.2 L265.0,77.5 L264.0,77.5 L263.0,77.6 L262.0,77.6 L261.0,77.5 L260.0,77.2 L259.0,77.6 L258.0,77.5 L257.0,77.3 L256.0,77.6 L255.0,77.6 L254.0,78.5 L253.0,77.6 L252.0,77.4 L251.0,77.3 L250.0,77.6 L249.0,78.2 L248.0,77.5 L247.0,78.3 L246.0,77.6 L245.0,77.5 L244.0,77.4 L243.0,77.5 L242.0,77.3 L241.0,77.5 L240.0,77.2 L239.0,77.7 L238.0,77.4 L237.0,77.4 L236.0,77.3 L235.0,77.4 L234.0,77.5 L233.0,77.6 L232.0,77.4 L231.0,77.3 L230.0,77.3 L229.0,77.7 L228.0,77.5 L227.0,77.4 L226.0,77.6 L225.0,77.6 L224.0,77.6 L223.0,77.6 L222.0,77.3 L221.0,77.5 L220.0,77.4 L219.0,77.7 L218.0,77.7 L217.0,77.4 L216.0,77.3 L215.0,77.4 L214.0,77.6 L213.0,77.3 L212.0,77.4 L211.0,77.3 L210.0,77.5 L209.0,77.6 L208.0,77.4 L207.0,77.5 L206.0,77.6 L205.0,77.7 L204.0,78.7 L203.0,77.5 L202.0,77.2 L201.0,77.4 L200.0,77.3 L199.0,77.9 L198.0,77.6 L197.0,77.4 L196.0,77.6 L195.0,78.0 L194.0,77.5 L193.0,77.3 L192.0,77.6 L191.0,77.4 L190.0,78.6 L189.0,77.6 L188.0,77.6 L187.0,77.9 L186.0,78.5 L185.0,77.7 L184.0,77.4 L183.0,77.5 L182.0,77.5 L181.0,77.6 L180.0,77.4 L179.0,77.3 L178.0,77.4 L177.0,77.4 L176.0,78.0 L175.0,77.2 L174.0,77.3 L173.0,77.2 L172.0,77.3 L171.0,77.3 L170.0,77.6 L169.0,77.3 L168.0,77.7 L167.0,77.4 L166.0,77.6 L165.0,77.4 L164.0,77.2 L163.0,77.5 L162.0,77.3 L161.0,77.6 L160.0,77.6 L159.0,77.8 L158.0,77.5 L157.0,77.3 L156.0,77.5 L155.0,78.1 L154.0,77.2 L153.0,77.5 L152.0,77.5 L151.0,77.4 L150.0,77.5 L149.0,77.7 L148.0,77.5 L147.0,77.4 L146.0,77.5 L145.0,77.2 L144.0,77.4 L143.0,77.5 L142.0,77.5 L141.0,77.5 L140.0,77.3 L139.0,77.4 L138.0,77.5 L137.0,77.4 L136.0,77.4 L135.0,77.3 L134.0,77.4 L133.0,77.4 L132.0,77.5 L131.0,77.7 L130.0,77.6 L129.0,77.6 L128.0,77.4 L127.0,77.7 L126.0,77.4 L125.0,78.8 L124.0,77.3 L123.0,77.6 L122.0,77.4 L121.0,77.4 L120.0,77.4 L119.0,77.5 L118.0,78.3 L117.0,77.3 L116.0,77.4 L115.0,77.5 L114.0,77.3 L113.0,77.3 L112.0,77.3 L111.0,78.8 L110.0,77.7 L109.0,77.7 L108.0,77.5 L107.0,77.7 L106.0,77.6 L105.0,77.4 L104.0,77.6 L103.0,77.6 L102.0,77.6 L101.0,77.3 L100.0,77.4 L99.0,77.4 L98.0,79.1 L97.0,77.2 L96.0,77.8 L95.0,77.3 L94.0,77.5 L93.0,77.2 L92.0,77.4 L91.0,77.3 L90.0,78.4 L89.0,77.6 L88.0,77.4 L87.0,77.6 L86.0,77.2 L85.0,78.6 L84.0,77.5 L83.0,77.5 L82.0,77.6 L81.0,77.3 L80.0,77.5 L79.0,77.4 L78.0,77.3 L77.0,77.2 L76.0,77.4 L75.0,77.4 L74.0,77.2 L73.0,77.4 L72.0,77.3 L71.0,77.6 L70.0,78.6 L69.0,77.6 L68.0,77.6 L67.0,77.3 L66.0,77.3 L65.0,78.8 L64.0,77.4 L63.0,77.3 L62.0,77.5 L61.0,78.0 L60.0,77.2 L59.0,77.4 L58.0,77.7 L57.0,77.5 L56.0,77.3Z" fill="#ff66b4"/>
<path d="M56.0,83.1 L57.0,82.9 L58.0,83.4 L59.0,83.2 L60.0,82.4 L61.0,83.0 L62.0,83.4 L63.0,83.3 L64.0,83.2 L65.0,83.1 L66.0,83.1 L67.0,83.0 L68.0,83.1 L69.0,83.3 L70.0,83.2 L71.0,83.2 L72.0,82.7 L73.0,82.9 L74.0,83.2 L75.0,83.2 L76.0,83.1 L77.0,83.2 L78.0,83.1 L79.0,83.1 L80.0,82.3 L81.0,83.2 L82.0,83.1 L83.0,83.0 L84.0,83.2 L85.0,83.3 L86.0,83.1 L87.0,83.4 L88.0,83.1 L89.0,83.3 L90.0,83.3 L91.0,83.0 L92.0,83.1 L93.0,83.0 L94.0,83.0 L95.0,83.4 L96.0,83.2 L97.0,82.1 L98.0,83.4 L99.0,83.4 L100.0,83.1 L101.0,83.3 L102.0,83.0 L103.0,83.4 L104.0,83.0 L105.0,83.1 L106.0,83.0 L107.0,83.4 L108.0,83.1 L109.0,83.3 L110.0,83.0 L111.0,83.0 L112.0,83.0 L113.0,82.9 L114.0,83.4 L115.0,83.3 L116.0,82.9 L117.0,83.2 L118.0,83.1 L119.0,82.9 L120.0,83.0 L121.0,83.1 L122.0,83.0 L123.0,83.0 L124.0,82.9 L125.0,83.4 L126.0,83.4 L127.0,83.1 L128.0,83.3 L129.0,83.3 L130.0,83.2 L131.0,81.9 L132.0,83.2 L133.0,83.1 L134.0,82.9 L135.0,82.9 L136.0,83.0 L137.0,82.9 L138.0,82.9 L139.0,83.1 L140.0,83.4 L141.0,83.0 L142.0,81.7 L143.0,83.4 L144.0,83.1 L145.0,82.4 L146.0,83.4 L147.0,83.0 L148.0,83.3 L149.0,83.1 L150.0,83.0 L151.0,83.2 L152.0,82.9 L153.0,83.1 L154.0,83.2 L155.0,83.0 L156.0,81.8 L157.0,83.0 L158.0,83.0 L159.0,82.4 L160.0,82.9 L161.0,83.0 L162.0,83.4 L163.0,83.2 L164.0,83.0 L165.0,83.2 L166.0,82.9 L167.0,83.1 L168.0,83.1 L169.0,83.3 L170.0,83.0 L171.0,83.1 L172.0,83.3 L173.0,83.3 L174.0,83.1 L175.0,83.1 L176.0,82.4 L177.0,83.3 L178.0,83.2 L179.0,83.4 L180.0,83.4 L181.0,83.0 L182.0,82.9 L183.0,83.1 L184.0,83.2 L185.0,81.8 L186.0,83.2 L187.0,83.3 L188.0,83.0 L189.0,83.3 L190.0,83.2 L191.0,83.4 L192.0,83.4 L193.0,82.8 L194.0,83.3 L195.0,83.2 L196.0,83.0 L197.0,81.3 L198.0,83.3 L199.0,82.9 L200.0,83.2 L201.0,83.3 L202.0,83.4 L203.0,83.0 L204.0,83.1 L205.0,82.9 L206.0,82.9 L207.0,82.6 L208.0,83.3 L209.0,82.9 L210.0,83.3 L211.0,83.2 L212.0,83.0 L213.0,83.3 L214.0,83.2 L215.0,83.3 L216.0,83.3 L217.0,83.3 L218.0,83.3 L219.0,82.5 L220.0,83.2 L221.0,83.0 L222.0,81.5 L223.0,83.3 L224.0,83.1 L225.0,82.7 L226.0,83.0 L227.0,83.4 L228.0,83.1 L229.0,83.1 L230.0,83.1 L231.0,83.4 L232.0,83.1 L233.0,83.3 L234.0,83.2 L235.0,83.0 L236.0,83.3 L237.0,83.4 L238.0,83.4 L239.0,83.2 L240.0,81.9 L241.0,82.9 L242.0,83.1 L243.0,83.0 L244.0,83.1 L245.0,82.3 L246.0,83.1 L247.0,83.3 L248.0,82.9 L249.0,83.1 L250.0,83.1 L251.0,83.1 L252.0,83.2 L253.0,82.8 L254.0,83.0 L255.0,83.4 L256.0,83.0 L257.0,83.1 L258.0,83.3 L259.0,83.2 L260.0,83.3 L261.0,83.1 L262.0,83.1 L263.0,83.0 L264.0,83.0 L265.0,83.4 L266.0,83.3 L267.0,82.4 L268.0,83.0 L269.0,83.2 L270.0,83.3 L271.0,83.0 L272.0,82.9 L273.0,83.1 L274.0,82.9 L275.0,81.9 L276.0,83.4 L277.0,83.4 L278.0,83.1 L279.0,83.3 L280.0,83.2 L281.0,83.3 L282.0,82.9 L283.0,83.3 L284.0,83.3 L285.0,83.2 L286.0,82.9 L287.0,83.3 L288.0,83.2 L289.0,83.4 L290.0,82.9 L291.0,83.3 L292.0,82.8 L293.0,83.1 L294.0,82.9 L295.0,83.0 L296.0,83.2 L297.0,83.2 L298.0,83.0 L299.0,83.0 L300.0,83.1 L301.0,83.0 L302.0,82.7 L303.0,83.2 L304.0,83.2 L305.0,83.2 L306.0,83.0 L307.0,82.1 L308.0,83.2 L309.0,83.3 L310.0,83.1 L311.0,83.2 L312.0,83.0 L313.0,83.0 L314.0,82.9 L315.0,82.9 L316.0,83.0 L317.0,83.1 L318.0,83.1 L319.0,83.1 L320.0,82.9 L321.0,83.0 L322.0,82.9 L323.0,83.0 L324.0,83.3 L325.0,82.7 L326.0,83.3 L327.0,83.1 L328.0,83.0 L329.0,83.3 L330.0,83.1 L331.0,83.3 L332.0,83.2 L333.0,83.3 L334.0,83.3 L335.0,83.2 L336.0,83.2 L337.0,83.2 L338.0,82.1 L339.0,83.2 L340.0,83.2 L341.0,83.4 L342.0,83.1 L343.0,83.3 L344.0,82.9 L345.0,83.0 L346.0,82.9 L347.0,83.3 L348.0,83.2 L349.0,83.2 L350.0,83.2 L351.0,83.0 L352.0,83.2 L353.0,83.2 L354.0,83.4 L355.0,83.3 L356.0,83.0 L357.0,83.1 L358.0,83.2 L359.0,81.6 L360.0,82.8 L361.0,82.8 L362.0,83.1 L363.0,83.2 L364.0,82.9 L365.0,83.3 L366.0,83.4 L367.0,83.0 L368.0,83.1 L369.0,83.0 L370.0,83.3 L371.0,83.0 L372.0,83.2 L373.0,83.2 L374.0,83.1 L375.0,82.9 L376.0,82.9 L377.0,83.3 L378.0,83.2 L379.0,83.0 L380.0,82.9 L381.0,83.4 L382.0,83.3 L383.0,83.3 L384.0,83.0 L385.0,83.2 L386.0,83.2 L387.0,83.2 L388.0,81.8 L389.0,83.4 L390.0,83.3 L391.0,82.1 L392.0,82.1 L393.0,83.0 L394.0,83.3 L395.0,83.1 L396.0,83.2 L397.0,83.3 L398.0,83.0 L399.0,81.5 L400.0,83.0 L401.0,82.9 L402.0,83.1 L403.0,83.2 L404.0,83.1 L405.0,83.0 L406.0,83.3 L407.0,83.1 L408.0,83.3 L409.0,82.9 L410.0,83.1 L411.0,83.2 L412.0,83.3 L413.0,83.3 L414.0,83.1 L415.0,83.1 L416.0,82.9 L417.0,82.9 L418.0,83.3 L419.0,83.3 L420.0,82.9 L421.0,81.6 L422.0,83.2 L423.0,82.9 L424.0,83.0 L425.0,83.3 L426.0,83.1 L427.0,83.1 L428.0,82.6 L429.0,83.3 L430.0,83.2 L431.0,83.1 L432.0,82.9 L433.0,82.1 L434.0,83.1 L435.0,83.2 L436.0,83.2 L437.0,83.0 L438.0,83.4 L439.0,83.0 L440.0,83.2 L441.0,83.4 L442.0,83.4 L443.0,83.3 L444.0,83.1 L445.0,82.9 L446.0,83.2 L447.0,83.0 L448.0,83.2 L449.0,83.1 L450.0,83.4 L451.0,83.4 L452.0,83.1 L453.0,82.9 L454.0,83.0 L455.0,82.4 L456.0,83.2 L457.0,82.9 L458.0,82.9 L459.0,83.3 L460.0,83.2 L461.0,83.3 L462.0,83.1 L463.0,83.0 L464.0,83.3 L465.0,83.3 L466.0,83.2 L467.0,83.2 L468.0,83.0 L468.0,104.5 L467.0,104.6 L466.0,104.5 L465.0,104.8 L464.0,104.7 L463.0,104.8 L462.0,104.7 L461.0,104.7 L460.0,104.7 L459.0,104.6 L458.0,104.9 L457.0,104.8 L456.0,104.9 L455.0,104.8 L454.0,104.5 L453.0,105.7 L452.0,104.8 L451.0,104.8 L450.0,105.4 L449.0,104.7 L448.0,104.6 L447.0,104.9 L446.0,104.7 L445.0,104.4 L444.0,105.5 L443.0,104.5 L442.0,104.9 L441.0,104.6 L440.0,104.4 L439.0,104.5 L438.0,105.9 L437.0,104.5 L436.0,104.4 L435.0,104.9 L434.0,104.5 L433.0,104.6 L432.0,104.6 L431.0,104.6 L430.0,104.8 L429.0,105.4 L428.0,104.5 L427.0,104.6 L426.0,104.5 L425.0,104.5 L424.0,104.6 L423.0,104.7 L422.0,104.9 L421.0,104.5 L420.0,106.2 L419.0,104.7 L418.0,104.5 L417.0,105.2 L416.0,105.4 L415.0,105.2 L414.0,104.9 L413.0,104.5 L412.0,105.4 L411.0,104.6 L410.0,104.8 L409.0,104.6 L408.0,104.7 L407.0,104.4 L406.0,104.9 L405.0,104.9 L404.0,104.7 L403.0,104.5 L402.0,104.5 L401.0,104.5 L400.0,104.6 L399.0,104.8 L398.0,104.7 L397.0,104.7 L396.0,104.5 L395.0,104.5 L394.0,104.5 L393.0,104.9 L392.0,104.6 L391.0,104.4 L390.0,104.6 L389.0,104.7 L388.0,104.5 L387.0,104.6 L386.0,104.8 L385.0,104.9 L384.0,104.7 L383.0,105.6 L382.0,104.6 L381.0,104.5 L380.0,104.6 L379.0,104.8 L378.0,106.5 L377.0,104.5 L376.0,104.6 L375.0,104.8 L374.0,104.6 L373.0,104.9 L372.0,104.7 L371.0,104.4 L370.0,106.2 L369.0,104.7 L368.0,104.6 L367.0,104.6 L366.0,105.5 L365.0,104.6 L364.0,104.8 L363.0,104.5 L362.0,104.6 L361.0,104.5 L360.0,105.7 L359.0,104.8 L358.0,104.8 L357.0,104.4 L356.0,104.9 L355.0,104.4 L354.0,104.4 L353.0,104.5 L352.0,104.7 L351.0,104.6 L350.0,104.6 L349.0,104.9 L348.0,104.6 L347.0,105.4 L346.0,104.6 L345.0,104.7 L344.0,104.6 L343.0,104.7 L342.0,104.6 L341.0,104.8 L340.0,104.8 L339.0,104.6 L338.0,104.9 L337.0,104.7 L336.0,104.6 L335.0,104.5 L334.0,104.4 L333.0,104.7 L332.0,104.5 L331.0,104.7 L330.0,104.8 L329.0,106.6 L328.0,104.8 L327.0,104.5 L326.0,104.7 L325.0,104.8 L324.0,104.7 L323.0,104.7 L322.0,104.5 L321.0,104.9 L320.0,104.4 L319.0,104.8 L318.0,104.5 L317.0,104.9 L316.0,104.7 L315.0,104.6 L314.0,104.6 L313.0,104.5 L312.0,104.6 L311.0,105.6 L310.0,105.9 L309.0,104.6 L308.0,104.8 L307.0,104.8 L306.0,104.6 L305.0,104.8 L304.0,104.8 L303.0,104.8 L302.0,104.4 L301.0,104.5 L300.0,104.6 L299.0,106.3 L298.0,104.5 L297.0,104.6 L296.0,104.5 L295.0,104.5 L294.0,104.9 L293.0,104.8 L292.0,104.9 L291.0,104.6 L290.0,104.8 L289.0,104.7 L288.0,104.8 L287.0,104.6 L286.0,104.8 L285.0,104.5 L284.0,106.3 L283.0,104.8 L282.0,104.9 L281.0,104.8 L280.0,104.5 L279.0,104.8 L278.0,104.7 L277.0,104.8 L276.0,104.4 L275.0,104.8 L274.0,104.6 L273.0,104.4 L272.0,104.5 L271.0,104.6 L270.0,104.6 L269.0,104.5 L268.0,104.9 L267.0,104.7 L266.0,104.8 L265.0,105.4 L264.0,104.6 L263.0,104.8 L262.0,104.5 L261.0,104.5 L260.0,104.7 L259.0,106.1 L258.0,104.5 L257.0,104.5 L256.0,105.7 L255.0,104.5 L254.0,104.8 L253.0,104.7 L252.0,104.5 L251.0,104.8 L250.0,105.6 L249.0,104.6 L248.0,104.5 L247.0,105.1 L246.0,105.2 L245.0,104.8 L244.0,104.8 L243.0,104.5 L242.0,104.9 L241.0,104.8 L240.0,104.5 L239.0,104.6 L238.0,104.9 L237.0,104.6 L236.0,104.5 L235.0,104.7 L234.0,104.9 L233.0,104.9 L232.0,104.9 L231.0,104.7 L230.0,104.7 L229.0,104.4 L228.0,104.5 L227.0,104.7 L226.0,104.9 L225.0,104.7 L224.0,104.8 L223.0,104.8 L222.0,105.0 L221.0,104.5 L220.0,104.8 L219.0,104.5 L218.0,104.7 L217.0,104.5 L216.0,104.7 L215.0,104.4 L214.0,104.4 L213.0,104.6 L212.0,104.9 L211.0,104.7 L210.0,104.7 L209.0,106.4 L208.0,104.8 L207.0,104.4 L206.0,104.5 L205.0,104.8 L204.0,104.5 L203.0,104.5 L202.0,105.5 L201.0,104.6 L200.0,104.7 L199.0,105.6 L198.0,105.0 L197.0,104.7 L196.0,104.8 L195.0,105.1 L194.0,105.1 L193.0,104.6 L192.0,104.5 L191.0,104.8 L190.0,104.6 L189.0,104.5 L188.0,104.6 L187.0,105.1 L186.0,104.5 L185.0,104.5 L184.0,104.7 L183.0,106.2 L182.0,104.7 L181.0,104.9 L180.0,104.5 L179.0,104.6 L178.0,104.6 L177.0,105.0 L176.0,104.9 L175.0,104.4 L174.0,104.7 L173.0,104.9 L172.0,104.4 L171.0,104.8 L170.0,104.5 L169.0,104.4 L168.0,104.4 L167.0,104.6 L166.0,104.7 L165.0,104.6 L164.0,104.5 L163.0,104.8 L162.0,104.8 L161.0,104.5 L160.0,104.8 L159.0,104.9 L158.0,104.6 L157.0,104.9 L156.0,104.8 L155.0,104.9 L154.0,104.7 L153.0,104.7 L152.0,104.6 L151.0,104.5 L150.0,104.5 L149.0,104.4 L148.0,104.5 L147.0,104.5 L146.0,104.4 L145.0,104.5 L144.0,104.7 L143.0,104.7 L142.0,104.8 L141.0,104.8 L140.0,104.5 L139.0,104.5 L138.0,104.7 L137.0,104.9 L136.0,104.9 L135.0,104.6 L134.0,104.4 L133.0,104.6 L132.0,104.8 L131.0,104.4 L130.0,104.7 L129.0,104.5 L128.0,104.9 L127.0,104.6 L126.0,105.2 L125.0,104.8 L124.0,104.7 L123.0,104.8 L122.0,104.9 L121.0,106.2 L120.0,104.5 L119.0,104.8 L118.0,104.8 L117.0,104.8 L116.0,104.4 L115.0,104.5 L114.0,104.8 L113.0,105.1 L112.0,104.8 L111.0,104.5 L110.0,104.6 L109.0,104.5 L108.0,104.6 L107.0,104.5 L106.0,104.6 L105.0,104.8 L104.0,104.6 L103.0,105.7 L102.0,104.4 L101.0,104.5 L100.0,104.6 L99.0,104.5 L98.0,104.7 L97.0,104.5 L96.0,104.4 L95.0,104.9 L94.0,104.5 L93.0,105.6 L92.0,104.5 L91.0,104.8 L90.0,104.8 L89.0,104.8 L88.0,104.6 L87.0,104.7 L86.0,104.5 L85.0,104.7 L84.0,104.8 L83.0,104.9 L82.0,104.7 L81.0,104.5 L80.0,104.8 L79.0,104.9 L78.0,106.3 L77.0,104.7 L76.0,104.8 L75.0,104.8 L74.0,104.7 L73.0,104.5 L72.0,104.6 L71.0,104.5 L70.0,104.9 L69.0,104.4 L68.0,104.5 L67.0,104.6 L66.0,104.5 L65.0,104.9 L64.0,104.7 L63.0,104.5 L62.0,104.8 L61.0,104.7 L60.0,104.5 L59.0,104.8 L58.0,104.7 L57.0,104.6 L56.0,104.7Z" fill="#00ffff"/>
<path d="M56.0,109.7 L57.0,109.2 L58.0,109.7 L59.0,109.9 L60.0,109.6 L61.0,109.8 L62.0,109.6 L63.0,109.5 L64.0,109.5 L65.0,109.6 L66.0,108.2 L67.0,109.7 L68.0,109.1 L69.0,109.7 L70.0,109.7 L71.0,109.5 L72.0,109.3 L73.0,109.7 L74.0,109.8 L75.0,109.9 L76.0,108.4 L77.0,109.6 L78.0,109.9 L79.0,109.7 L80.0,109.6 L81.0,109.7 L82.0,109.8 L83.0,109.7 L84.0,109.8 L85.0,109.6 L86.0,109.7 L87.0,108.6 L88.0,109.8 L89.0,109.5 L90.0,109.7 L91.0,109.9 L92.0,109.8 L93.0,109.5 L94.0,109.8 L95.0,109.7 L96.0,109.7 L97.0,109.7 L98.0,109.9 L99.0,109.7 L100.0,109.8 L101.0,109.8 L102.0,108.6 L103.0,109.5 L104.0,109.9 L105.0,109.8 L106.0,109.6 L107.0,110.0 L108.0,109.9 L109.0,109.5 L110.0,109.8 L111.0,109.6 L112.0,109.7 L113.0,109.7 L114.0,109.9 L115.0,109.6 L116.0,109.9 L117.0,109.7 L118.0,109.6 L119.0,109.8 L120.0,109.7 L121.0,109.7 L122.0,109.8 L123.0,109.7 L124.0,109.9 L125.0,109.9 L126.0,109.7 L127.0,109.6 L128.0,109.8 L129.0,109.9 L130.0,109.9 L131.0,109.9 L132.0,109.7 L133.0,110.0 L134.0,109.7 L135.0,109.8 L136.0,109.7 L137.0,109.7 L138.0,109.9 L139.0,110.0 L140.0,109.9 L141.0,109.6 L142.0,110.0 L143.0,109.6 L144.0,109.8 L145.0,110.0 L146.0,109.8 L147.0,109.9 L148.0,109.7 L149.0,109.9 L150.0,109.6 L151.0,109.7 L152.0,109.8 L153.0,109.7 L154.0,109.8 L155.0,109.7 L156.0,109.7 L157.0,110.0 L158.0,109.8 L159.0,109.8 L160.0,109.5 L161.0,109.5 L162.0,109.8 L163.0,109.8 L164.0,109.6 L165.0,109.8 L166.0,109.7 L167.0,109.5 L168.0,110.0 L169.0,109.0 L170.0,110.0 L171.0,109.9 L172.0,109.8 L173.0,110.0 L174.0,109.8 L175.0,109.7 L176.0,109.8 L177.0,109.7 L178.0,110.0 L179.0,109.9 L180.0,109.8 L181.0,109.5 L182.0,109.9 L183.0,109.5 L184.0,110.0 L185.0,109.7 L186.0,110.0 L187.0,109.7 L188.0,109.5 L189.0,109.7 L190.0,109.7 L191.0,109.5 L192.0,109.6 L193.0,109.5 L194.0,109.6 L195.0,109.6 L196.0,109.9 L197.0,109.6 L198.0,109.6 L199.0,109.9 L200.0,108.3 L201.0,109.9 L202.0,109.7 L203.0,109.5 L204.0,109.9 L205.0,109.6 L206.0,109.9 L207.0,109.9 L208.0,109.7 L209.0,109.7 L210.0,109.9 L211.0,109.7 L212.0,109.8 L213.0,109.9 L214.0,109.7 L215.0,109.8 L216.0,109.8 L217.0,109.5 L218.0,110.0 L219.0,109.8 L220.0,109.9 L221.0,109.7 L222.0,109.5 L223.0,110.0 L224.0,109.5 L225.0,110.0 L226.0,110.0 L227.0,108.5 L228.0,109.9 L229.0,108.0 L230.0,109.5 L231.0,109.7 L232.0,109.7 L233.0,109.7 L234.0,110.0 L235.0,109.5 L236.0,109.7 L237.0,108.1 L238.0,109.6 L239.0,109.6 L240.0,109.7 L241.0,109.9 L242.0,109.6 L243.0,109.0 L244.0,109.9 L245.0,108.9 L246.0,109.8 L247.0,109.6 L248.0,109.6 L249.0,108.3 L250.0,109.6 L251.0,109.8 L252.0,109.7 L253.0,109.9 L254.0,109.6 L255.0,109.7 L256.0,109.3 L257.0,109.6 L258.0,109.6 L259.0,110.0 L260.0,109.7 L261.0,110.0 L262.0,109.6 L263.0,109.9 L264.0,109.6 L265.0,109.6 L266.0,109.5 L267.0,109.6 L268.0,109.6 L269.0,109.8 L270.0,109.8 L271.0,109.5 L272.0,109.9 L273.0,109.5 L274.0,109.9 L275.0,109.8 L276.0,109.6 L277.0,109.6 L278.0,109.6 L279.0,109.9 L280.0,109.6 L281.0,109.0 L282.0,109.5 L283.0,109.9 L284.0,109.8 L285.0,109.8 L286.0,110.0 L287.0,109.6 L288.0,109.7 L289.0,109.7 L290.0,108.9 L291.0,110.0 L292.0,109.7 L293.0,109.9 L294.0,109.6 L295.0,109.7 L296.0,109.5 L297.0,109.9 L298.0,110.0 L299.0,109.6 L300.0,109.9 L301.0,109.7 L302.0,107.9 L303.0,109.8 L304.0,109.6 L305.0,110.0 L306.0,110.0 L307.0,109.7 L308.0,109.9 L309.0,109.9 L310.0,109.6 L311.0,109.9 L312.0,109.7 L313.0,109.9 L314.0,109.9 L315.0,109.8 L316.0,110.0 L317.0,109.9 L318.0,109.9 L319.0,109.8 L320.0,109.6 L321.0,109.7 L322.0,109.6 L323.0,108.3 L324.0,109.6 L325.0,109.9 L326.0,109.9 L327.0,109.9 L328.0,108.5 L329.0,109.9 L330.0,109.8 L331.0,109.5 L332.0,108.0 L333.0,108.0 L334.0,109.6 L335.0,107.9 L336.0,109.8 L337.0,110.0 L338.0,109.7 L339.0,108.3 L340.0,110.0 L341.0,109.6 L342.0,109.6 L343.0,109.9 L344.0,109.7 L345.0,110.0 L346.0,109.9 L347.0,110.0 L348.0,109.9 L349.0,109.6 L350.0,109.8 L351.0,109.7 L352.0,110.0 L353.0,108.1 L354.0,109.7 L355.0,109.6 L356.0,109.6 L357.0,109.6 L358.0,109.9 L359.0,109.6 L360.0,109.7 L361.0,109.6 L362.0,109.8 L363.0,109.8 L364.0,108.7 L365.0,109.7 L366.0,109.5 L367.0,110.0 L368.0,109.9 L369.0,109.8 L370.0,108.5 L371.0,109.8 L372.0,110.0 L373.0,109.6 L374.0,109.8 L375.0,109.9 L376.0,109.8 L377.0,109.6 L378.0,109.8 L379.0,109.7 L380.0,109.7 L381.0,109.5 L382.0,109.9 L383.0,109.8 L384.0,109.9 L385.0,109.6 L386.0,109.6 L387.0,109.9 L388.0,109.8 L389.0,109.8 L390.0,109.9 L391.0,108.4 L392.0,109.9 L393.0,109.9 L394.0,109.6 L395.0,109.6 L396.0,109.7 L397.0,109.9 L398.0,110.0 L399.0,109.9 L400.0,109.5 L401.0,109.7 L402.0,110.0 L403.0,109.8 L404.0,109.9 L405.0,109.7 L406.0,109.9 L407.0,109.6 L408.0,110.0 L409.0,109.6 L410.0,108.4 L411.0,109.9 L412.0,109.9 L413.0,109.7 L414.0,110.0 L415.0,109.5 L416.0,109.3 L417.0,109.8 L418.0,109.6 L419.0,109.9 L420.0,109.8 L421.0,109.6 L422.0,109.6 L423.0,109.8 L424.0,109.8 L425.0,109.5 L426.0,109.7 L427.0,108.1 L428.0,109.7 L429.0,109.5 L430.0,109.9 L431.0,109.7 L432.0,109.8 L433.0,109.7 L434.0,109.6 L435.0,109.8 L436.0,107.9 L437.0,109.6 L438.0,109.6 L439.0,110.0 L440.0,109.8 L441.0,109.6 L442.0,109.7 L443.0,109.6 L444.0,109.8 L445.0,109.6 L446.0,110.0 L447.0,109.8 L448.0,109.9 L449.0,109.8 L450.0,109.7 L451.0,109.6 L452.0,109.9 L453.0,109.8 L454.0,109.8 L455.0,109.9 L456.0,110.0 L457.0,108.9 L458.0,109.5 L459.0,109.9 L460.0,109.5 L461.0,108.8 L462.0,109.8 L463.0,108.0 L464.0,109.8 L465.0,109.6 L466.0,109.5 L467.0,109.5 L468.0,109.8 L468.0,125.0 L467.0,124.9 L466.0,124.7 L465.0,125.0 L464.0,124.6 L463.0,124.6 L462.0,124.7 L461.0,125.1 L460.0,125.0 L459.0,124.8 L458.0,124.6 L457.0,125.1 L456.0,125.0 L455.0,124.9 L454.0,124.8 L453.0,126.4 L452.0,125.1 L451.0,124.8 L450.0,125.0 L449.0,125.6 L448.0,124.9 L447.0,124.9 L446.0,124.6 L445.0,124.7 L444.0,124.8 L443.0,124.6 L442.0,125.1 L441.0,124.8 L440.0,126.5 L439.0,124.6 L438.0,125.1 L437.0,124.8 L436.0,125.0 L435.0,125.0 L434.0,125.0 L433.0,125.0 L432.0,125.1 L431.0,125.0 L430.0,125.0 L429.0,124.7 L428.0,125.0 L427.0,124.7 L426.0,124.9 L425.0,126.5 L424.0,125.0 L423.0,125.0 L422.0,124.8 L421.0,124.8 L420.0,125.0 L419.0,124.9 L418.0,125.0 L417.0,126.1 L416.0,124.6 L415.0,124.9 L414.0,125.1 L413.0,124.8 L412.0,124.7 L411.0,124.8 L410.0,125.0 L409.0,124.7 L408.0,124.7 L407.0,126.3 L406.0,124.8 L405.0,125.4 L404.0,124.9 L403.0,124.8 L402.0,124.6 L401.0,124.7 L400.0,125.0 L399.0,124.8 L398.0,124.7 L397.0,125.0 L396.0,124.9 L395.0,124.7 L394.0,124.9 L393.0,124.7 L392.0,124.9 L391.0,125.3 L390.0,124.8 L389.0,124.8 L388.0,124.7 L387.0,124.9 L386.0,124.8 L385.0,124.8 L384.0,124.8 L383.0,124.7 L382.0,124.7 L381.0,124.7 L380.0,124.8 L379.0,125.0 L378.0,124.7 L377.0,125.1 L376.0,125.0 L375.0,124.8 L374.0,125.1 L373.0,126.0 L372.0,124.9 L371.0,124.6 L370.0,125.1 L369.0,125.0 L368.0,125.0 L367.0,125.0 L366.0,124.8 L365.0,126.3 L364.0,124.8 L363.0,124.8 L362.0,124.9 L361.0,124.7 L360.0,124.9 L359.0,124.9 L358.0,125.0 L357.0,124.7 L356.0,124.8 L355.0,124.9 L354.0,125.0 L353.0,124.8 L352.0,124.8 L351.0,125.1 L350.0,124.9 L349.0,124.7 L348.0,125.0 L347.0,124.8 L346.0,125.0 L345.0,124.6 L344.0,124.8 L343.0,125.0 L342.0,125.1 L341.0,124.6 L340.0,124.8 L339.0,125.0 L338.0,125.1 L337.0,124.6 L336.0,124.8 L335.0,124.8 L334.0,124.9 L333.0,124.7 L332.0,125.0 L331.0,124.7 L330.0,125.1 L329.0,124.8 L328.0,125.0 L327.0,124.9 L326.0,124.6 L325.0,124.8 L324.0,124.8 L323.0,124.7 L322.0,124.6 L321.0,124.8 L320.0,125.1 L319.0,124.9 L318.0,124.7 L317.0,124.7 L316.0,126.4 L315.0,124.8 L314.0,125.7 L313.0,124.9 L312.0,125.0 L311.0,125.1 L310.0,124.7 L309.0,125.4 L308.0,124.9 L307.0,125.0 L306.0,124.9 L305.0,124.7 L304.0,125.0 L303.0,124.8 L302.0,124.6 L301.0,125.1 L300.0,124.8 L299.0,124.7 L298.0,125.0 L297.0,124.7 L296.0,124.9 L295.0,124.9 L294.0,125.0 L293.0,125.0 L292.0,124.8 L291.0,124.6 L290.0,124.9 L289.0,125.1 L288.0,125.8 L287.0,125.0 L286.0,124.8 L285.0,124.9 L284.0,124.8 L283.0,124.9 L282.0,124.8 L281.0,124.9 L280.0,124.9 L279.0,124.8 L278.0,124.6 L277.0,124.8 L276.0,125.0 L275.0,124.6 L274.0,124.9 L273.0,124.8 L272.0,124.8 L271.0,124.8 L270.0,124.9 L269.0,125.0 L268.0,124.8 L267.0,125.6 L266.0,124.8 L265.0,124.8 L264.0,124.8 L263.0,124.7 L262.0,124.9 L261.0,124.7 L260.0,124.8 L259.0,124.6 L258.0,124.6 L257.0,124.7 L256.0,125.0 L255.0,125.0 L254.0,124.7 L253.0,124.9 L252.0,125.0 L251.0,125.1 L250.0,125.0 L249.0,126.4 L248.0,125.1 L247.0,124.7 L246.0,124.9 L245.0,124.7 L244.0,124.8 L243.0,124.8 L242.0,124.9 L241.0,124.8 L240.0,125.0 L239.0,124.9 L238.0,124.8 L237.0,124.6 L236.0,125.7 L235.0,124.8 L234.0,124.9 L233.0,124.9 L232.0,124.9 L231.0,124.7 L230.0,125.0 L229.0,124.9 L228.0,125.0 L227.0,125.0 L226.0,124.8 L225.0,124.7 L224.0,124.9 L223.0,125.0 L222.0,124.9 L221.0,124.8 L220.0,124.8 L219.0,125.0 L218.0,124.8 L217.0,124.6 L216.0,124.9 L215.0,125.1 L214.0,124.7 L213.0,125.0 L212.0,125.0 L211.0,125.1 L210.0,125.0 L209.0,125.1 L208.0,125.1 L207.0,124.9 L206.0,124.7 L205.0,124.9 L204.0,124.6 L203.0,125.1 L202.0,124.7 L201.0,125.9 L200.0,126.5 L199.0,124.6 L198.0,125.0 L197.0,125.0 L196.0,124.9 L195.0,125.0 L194.0,124.8 L193.0,125.0 L192.0,125.0 L191.0,125.1 L190.0,124.7 L189.0,124.9 L188.0,124.8 L187.0,124.6 L186.0,124.7 L185.0,124.8 L184.0,124.7 L183.0,125.0 L182.0,124.9 L181.0,125.1 L180.0,125.0 L179.0,124.9 L178.0,124.8 L177.0,124.7 L176.0,124.8 L175.0,125.0 L174.0,125.1 L173.0,124.6 L172.0,124.7 L171.0,124.7 L170.0,124.9 L169.0,124.7 L168.0,124.7 L167.0,124.9 L166.0,124.6 L165.0,125.0 L164.0,124.7 L163.0,124.7 L162.0,124.8 L161.0,124.9 L160.0,124.8 L159.0,124.9 L158.0,124.8 L157.0,124.6 L156.0,124.7 L155.0,125.0 L154.0,124.8 L153.0,125.7 L152.0,125.0 L151.0,124.8 L150.0,124.6 L149.0,125.7 L148.0,124.8 L147.0,125.0 L146.0,125.0 L145.0,124.9 L144.0,124.8 L143.0,126.1 L142.0,124.7 L141.0,124.7 L140.0,124.8 L139.0,124.6 L138.0,125.5 L137.0,124.9 L136.0,126.0 L135.0,124.7 L134.0,124.7 L133.0,126.1 L132.0,124.9 L131.0,124.7 L130.0,124.8 L129.0,124.9 L128.0,125.1 L127.0,124.9 L126.0,125.0 L125.0,124.9 L124.0,124.6 L123.0,124.8 L122.0,124.6 L121.0,124.7 L120.0,125.1 L119.0,124.9 L118.0,124.8 L117.0,124.6 L116.0,125.1 L115.0,124.9 L114.0,124.7 L113.0,125.0 L112.0,125.0 L111.0,126.4 L110.0,124.7 L109.0,125.0 L108.0,124.7 L107.0,125.8 L106.0,125.0 L105.0,124.9 L104.0,126.5 L103.0,124.7 L102.0,124.6 L101.0,125.1 L100.0,124.9 L99.0,124.9 L98.0,124.9 L97.0,124.8 L96.0,124.9 L95.0,124.9 L94.0,124.7 L93.0,124.9 L92.0,124.6 L91.0,124.8 L90.0,124.8 L89.0,124.8 L88.0,124.8 L87.0,124.9 L86.0,124.6 L85.0,124.8 L84.0,125.0 L83.0,124.7 L82.0,124.7 L81.0,124.6 L80.0,125.9 L79.0,125.5 L78.0,125.0 L77.0,125.8 L76.0,125.0 L75.0,124.7 L74.0,126.8 L73.0,124.7 L72.0,124.9 L71.0,124.9 L70.0,124.7 L69.0,125.9 L68.0,125.0 L67.0,124.6 L66.0,124.8 L65.0,124.7 L64.0,124.8 L63.0,124.7 L62.0,124.8 L61.0,125.0 L60.0,124.8 L59.0,124.7 L58.0,125.1 L57.0,124.6 L56.0,124.9Z" fill="#00c000"/>
</svg>
<rect x="56.5" y="27.5" width="412" height="104" fill="none" stroke="#5a5a5a" stroke-width="1"/>
<rect x="56" y="156" width="412" height="109" fill="#000"/>
<line x1="97.5" y1="156" x2="97.5" y2="265" stroke="#464646" stroke-width="1" stroke-dasharray="1 1"/><line x1="138.5" y1="156" x2="138.5" y2="265" stroke="#464646" stroke-width="1" stroke-dasharray="1 1"/><line x1="180.5" y1="156" x2="180.5" y2="265" stroke="#464646" stroke-width="1" stroke-dasharray="1 1"/><line x1="221.5" y1="156" x2="221.5" y2="265" stroke="#464646" stroke-width="1" stroke-dasharray="1 1"/><line x1="262.5" y1="156" x2="262.5" y2="265" stroke="#5a5a5a" stroke-width="1"/><line x1="303.5" y1="156" x2="303.5" y2="265" stroke="#464646" stroke-width="1" stroke-dasharray="1 1"/><line x1="344.5" y1="156" x2="344.5" y2="265" stroke="#464646" stroke-width="1" stroke-dasharray="1 1"/><line x1="386.5" y1="156" x2="386.5" y2="265" stroke="#464646" stroke-width="1" stroke-dasharray="1 1"/><line x1="427.5" y1="156" x2="427.5" y2="265" stroke="#464646" stroke-width="1" stroke-dasharray="1 1"/><line x1="56" y1="170.5" x2="468" y2="170.5" stroke="#464646" stroke-width="1" stroke-dasharray="1 1"/><line x1="56" y1="183.5" x2="468" y2="183.5" stroke="#464646" stroke-width="1" stroke-dasharray="1 1"/><line x1="56" y1="197.5" x2="468" y2="197.5" stroke="#464646" stroke-width="1" stroke-dasharray="1 1"/><line x1="56" y1="211.5" x2="468" y2="211.5" stroke="#4e4e4e" stroke-width="1"/><line x1="64.5" y1="210.0" x2="64.5" y2="213.0" stroke="#5a5a5a" stroke-width="1"/><line x1="72.5" y1="210.0" x2="72.5" y2="213.0" stroke="#5a5a5a" stroke-width="1"/><line x1="81.5" y1="210.0" x2="81.5" y2="213.0" stroke="#5a5a5a" stroke-width="1"/><line x1="89.5" y1="210.0" x2="89.5" y2="213.0" stroke="#5a5a5a" stroke-width="1"/><line x1="97.5" y1="210.0" x2="97.5" y2="213.0" stroke="#5a5a5a" stroke-width="1"/><line x1="105.5" y1="210.0" x2="105.5" y2="213.0" stroke="#5a5a5a" stroke-width="1"/><line x1="114.5" y1="210.0" x2="114.5" y2="213.0" stroke="#5a5a5a" stroke-width="1"/><line x1="122.5" y1="210.0" x2="122.5" y2="213.0" stroke="#5a5a5a" stroke-width="1"/><line x1="130.5" y1="210.0" x2="130.5" y2="213.0" stroke="#5a5a5a" stroke-width="1"/><line x1="138.5" y1="210.0" x2="138.5" y2="213.0" stroke="#5a5a5a" stroke-width="1"/><line x1="147.5" y1="210.0" x2="147.5" y2="213.0" stroke="#5a5a5a" stroke-width="1"/><line x1="155.5" y1="210.0" x2="155.5" y2="213.0" stroke="#5a5a5a" stroke-width="1"/><line x1="163.5" y1="210.0" x2="163.5" y2="213.0" stroke="#5a5a5a" stroke-width="1"/><line x1="171.5" y1="210.0" x2="171.5" y2="213.0" stroke="#5a5a5a" stroke-width="1"/><line x1="180.5" y1="210.0" x2="180.5" y2="213.0" stroke="#5a5a5a" stroke-width="1"/><line x1="188.5" y1="210.0" x2="188.5" y2="213.0" stroke="#5a5a5a" stroke-width="1"/><line x1="196.5" y1="210.0" x2="196.5" y2="213.0" stroke="#5a5a5a" stroke-width="1"/><line x1="204.5" y1="210.0" x2="204.5" y2="213.0" stroke="#5a5a5a" stroke-width="1"/><line x1="213.5" y1="210.0" x2="213.5" y2="213.0" stroke="#5a5a5a" stroke-width="1"/><line x1="221.5" y1="210.0" x2="221.5" y2="213.0" stroke="#5a5a5a" stroke-width="1"/><line x1="229.5" y1="210.0" x2="229.5" y2="213.0" stroke="#5a5a5a" stroke-width="1"/><line x1="237.5" y1="210.0" x2="237.5" y2="213.0" stroke="#5a5a5a" stroke-width="1"/><line x1="246.5" y1="210.0" x2="246.5" y2="213.0" stroke="#5a5a5a" stroke-width="1"/><line x1="254.5" y1="210.0" x2="254.5" y2="213.0" stroke="#5a5a5a" stroke-width="1"/><line x1="262.5" y1="210.0" x2="262.5" y2="213.0" stroke="#5a5a5a" stroke-width="1"/><line x1="270.5" y1="210.0" x2="270.5" y2="213.0" stroke="#5a5a5a" stroke-width="1"/><line x1="278.5" y1="210.0" x2="278.5" y2="213.0" stroke="#5a5a5a" stroke-width="1"/><line x1="287.5" y1="210.0" x2="287.5" y2="213.0" stroke="#5a5a5a" stroke-width="1"/><line x1="295.5" y1="210.0" x2="295.5" y2="213.0" stroke="#5a5a5a" stroke-width="1"/><line x1="303.5" y1="210.0" x2="303.5" y2="213.0" stroke="#5a5a5a" stroke-width="1"/><line x1="311.5" y1="210.0" x2="311.5" y2="213.0" stroke="#5a5a5a" stroke-width="1"/><line x1="320.5" y1="210.0" x2="320.5" y2="213.0" stroke="#5a5a5a" stroke-width="1"/><line x1="328.5" y1="210.0" x2="328.5" y2="213.0" stroke="#5a5a5a" stroke-width="1"/><line x1="336.5" y1="210.0" x2="336.5" y2="213.0" stroke="#5a5a5a" stroke-width="1"/><line x1="344.5" y1="210.0" x2="344.5" y2="213.0" stroke="#5a5a5a" stroke-width="1"/><line x1="353.5" y1="210.0" x2="353.5" y2="213.0" stroke="#5a5a5a" stroke-width="1"/><line x1="361.5" y1="210.0" x2="361.5" y2="213.0" stroke="#5a5a5a" stroke-width="1"/><line x1="369.5" y1="210.0" x2="369.5" y2="213.0" stroke="#5a5a5a" stroke-width="1"/><line x1="377.5" y1="210.0" x2="377.5" y2="213.0" stroke="#5a5a5a" stroke-width="1"/><line x1="386.5" y1="210.0" x2="386.5" y2="213.0" stroke="#5a5a5a" stroke-width="1"/><line x1="394.5" y1="210.0" x2="394.5" y2="213.0" stroke="#5a5a5a" stroke-width="1"/><line x1="402.5" y1="210.0" x2="402.5" y2="213.0" stroke="#5a5a5a" stroke-width="1"/><line x1="410.5" y1="210.0" x2="410.5" y2="213.0" stroke="#5a5a5a" stroke-width="1"/><line x1="419.5" y1="210.0" x2="419.5" y2="213.0" stroke="#5a5a5a" stroke-width="1"/><line x1="427.5" y1="210.0" x2="427.5" y2="213.0" stroke="#5a5a5a" stroke-width="1"/><line x1="435.5" y1="210.0" x2="435.5" y2="213.0" stroke="#5a5a5a" stroke-width="1"/><line x1="443.5" y1="210.0" x2="443.5" y2="213.0" stroke="#5a5a5a" stroke-width="1"/><line x1="452.5" y1="210.0" x2="452.5" y2="213.0" stroke="#5a5a5a" stroke-width="1"/><line x1="460.5" y1="210.0" x2="460.5" y2="213.0" stroke="#5a5a5a" stroke-width="1"/><line x1="56" y1="224.5" x2="468" y2="224.5" stroke="#464646" stroke-width="1" stroke-dasharray="1 1"/><line x1="56" y1="238.5" x2="468" y2="238.5" stroke="#464646" stroke-width="1" stroke-dasharray="1 1"/><line x1="56" y1="251.5" x2="468" y2="251.5" stroke="#464646" stroke-width="1" stroke-dasharray="1 1"/><rect x="64" y="176.0" width="1" height="1" fill="#4a4a4a"/><rect x="72" y="176.0" width="1" height="1" fill="#4a4a4a"/><rect x="81" y="176.0" width="1" height="1" fill="#4a4a4a"/><rect x="89" y="176.0" width="1" height="1" fill="#4a4a4a"/><rect x="105" y="176.0" width="1" height="1" fill="#4a4a4a"/><rect x="114" y="176.0" width="1" height="1" fill="#4a4a4a"/><rect x="122" y="176.0" width="1" height="1" fill="#4a4a4a"/><rect x="130" y="176.0" width="1" height="1" fill="#4a4a4a"/><rect x="147" y="176.0" width="1" height="1" fill="#4a4a4a"/><rect x="155" y="176.0" width="1" height="1" fill="#4a4a4a"/><rect x="163" y="176.0" width="1" height="1" fill="#4a4a4a"/><rect x="171" y="176.0" width="1" height="1" fill="#4a4a4a"/><rect x="188" y="176.0" width="1" height="1" fill="#4a4a4a"/><rect x="196" y="176.0" width="1" height="1" fill="#4a4a4a"/><rect x="204" y="176.0" width="1" height="1" fill="#4a4a4a"/><rect x="213" y="176.0" width="1" height="1" fill="#4a4a4a"/><rect x="229" y="176.0" width="1" height="1" fill="#4a4a4a"/><rect x="237" y="176.0" width="1" height="1" fill="#4a4a4a"/><rect x="246" y="176.0" width="1" height="1" fill="#4a4a4a"/><rect x="254" y="176.0" width="1" height="1" fill="#4a4a4a"/><rect x="270" y="176.0" width="1" height="1" fill="#4a4a4a"/><rect x="278" y="176.0" width="1" height="1" fill="#4a4a4a"/><rect x="287" y="176.0" width="1" height="1" fill="#4a4a4a"/><rect x="295" y="176.0" width="1" height="1" fill="#4a4a4a"/><rect x="311" y="176.0" width="1" height="1" fill="#4a4a4a"/><rect x="320" y="176.0" width="1" height="1" fill="#4a4a4a"/><rect x="328" y="176.0" width="1" height="1" fill="#4a4a4a"/><rect x="336" y="176.0" width="1" height="1" fill="#4a4a4a"/><rect x="353" y="176.0" width="1" height="1" fill="#4a4a4a"/><rect x="361" y="176.0" width="1" height="1" fill="#4a4a4a"/><rect x="369" y="176.0" width="1" height="1" fill="#4a4a4a"/><rect x="377" y="176.0" width="1" height="1" fill="#4a4a4a"/><rect x="394" y="176.0" width="1" height="1" fill="#4a4a4a"/><rect x="402" y="176.0" width="1" height="1" fill="#4a4a4a"/><rect x="410" y="176.0" width="1" height="1" fill="#4a4a4a"/><rect x="419" y="176.0" width="1" height="1" fill="#4a4a4a"/><rect x="435" y="176.0" width="1" height="1" fill="#4a4a4a"/><rect x="443" y="176.0" width="1" height="1" fill="#4a4a4a"/><rect x="452" y="176.0" width="1" height="1" fill="#4a4a4a"/><rect x="460" y="176.0" width="1" height="1" fill="#4a4a4a"/><rect x="64" y="245.0" width="1" height="1" fill="#4a4a4a"/><rect x="72" y="245.0" width="1" height="1" fill="#4a4a4a"/><rect x="81" y="245.0" width="1" height="1" fill="#4a4a4a"/><rect x="89" y="245.0" width="1" height="1" fill="#4a4a4a"/><rect x="105" y="245.0" width="1" height="1" fill="#4a4a4a"/><rect x="114" y="245.0" width="1" height="1" fill="#4a4a4a"/><rect x="122" y="245.0" width="1" height="1" fill="#4a4a4a"/><rect x="130" y="245.0" width="1" height="1" fill="#4a4a4a"/><rect x="147" y="245.0" width="1" height="1" fill="#4a4a4a"/><rect x="155" y="245.0" width="1" height="1" fill="#4a4a4a"/><rect x="163" y="245.0" width="1" height="1" fill="#4a4a4a"/><rect x="171" y="245.0" width="1" height="1" fill="#4a4a4a"/><rect x="188" y="245.0" width="1" height="1" fill="#4a4a4a"/><rect x="196" y="245.0" width="1" height="1" fill="#4a4a4a"/><rect x="204" y="245.0" width="1" height="1" fill="#4a4a4a"/><rect x="213" y="245.0" width="1" height="1" fill="#4a4a4a"/><rect x="229" y="245.0" width="1" height="1" fill="#4a4a4a"/><rect x="237" y="245.0" width="1" height="1" fill="#4a4a4a"/><rect x="246" y="245.0" width="1" height="1" fill="#4a4a4a"/><rect x="254" y="245.0" width="1" height="1" fill="#4a4a4a"/><rect x="270" y="245.0" width="1" height="1" fill="#4a4a4a"/><rect x="278" y="245.0" width="1" height="1" fill="#4a4a4a"/><rect x="287" y="245.0" width="1" height="1" fill="#4a4a4a"/><rect x="295" y="245.0" width="1" height="1" fill="#4a4a4a"/><rect x="311" y="245.0" width="1" height="1" fill="#4a4a4a"/><rect x="320" y="245.0" width="1" height="1" fill="#4a4a4a"/><rect x="328" y="245.0" width="1" height="1" fill="#4a4a4a"/><rect x="336" y="245.0" width="1" height="1" fill="#4a4a4a"/><rect x="353" y="245.0" width="1" height="1" fill="#4a4a4a"/><rect x="361" y="245.0" width="1" height="1" fill="#4a4a4a"/><rect x="369" y="245.0" width="1" height="1" fill="#4a4a4a"/><rect x="377" y="245.0" width="1" height="1" fill="#4a4a4a"/><rect x="394" y="245.0" width="1" height="1" fill="#4a4a4a"/><rect x="402" y="245.0" width="1" height="1" fill="#4a4a4a"/><rect x="410" y="245.0" width="1" height="1" fill="#4a4a4a"/><rect x="419" y="245.0" width="1" height="1" fill="#4a4a4a"/><rect x="435" y="245.0" width="1" height="1" fill="#4a4a4a"/><rect x="443" y="245.0" width="1" height="1" fill="#4a4a4a"/><rect x="452" y="245.0" width="1" height="1" fill="#4a4a4a"/><rect x="460" y="245.0" width="1" height="1" fill="#4a4a4a"/>
<svg x="56" y="156" width="412" height="109" viewBox="56 156 412 109" overflow="hidden">
<path d="M56.0,202.5 L57.0,203.5 L58.0,203.7 L59.0,204.1 L60.0,203.5 L61.0,203.7 L62.0,204.0 L63.0,204.1 L64.0,203.8 L65.0,203.8 L66.0,203.9 L67.0,203.8 L68.0,203.7 L69.0,203.6 L70.0,203.7 L71.0,203.8 L72.0,203.9 L73.0,204.0 L74.0,203.4 L75.0,204.0 L76.0,203.8 L77.0,203.5 L78.0,204.2 L79.0,203.5 L80.0,203.7 L81.0,204.2 L82.0,203.3 L83.0,204.1 L84.0,203.9 L85.0,203.5 L86.0,204.2 L87.0,203.9 L88.0,204.2 L89.0,203.5 L90.0,204.1 L91.0,203.6 L92.0,203.5 L93.0,204.1 L94.0,203.9 L95.0,203.4 L96.0,204.1 L97.0,203.9 L98.0,204.1 L99.0,203.8 L100.0,203.6 L101.0,203.5 L102.0,203.6 L103.0,204.2 L104.0,204.0 L105.0,204.0 L106.0,204.1 L107.0,204.1 L108.0,203.8 L109.0,203.7 L110.0,204.2 L111.0,204.1 L112.0,204.2 L113.0,203.9 L114.0,204.0 L115.0,202.4 L116.0,204.2 L117.0,204.0 L118.0,203.8 L119.0,203.7 L120.0,203.9 L121.0,202.1 L122.0,204.0 L123.0,203.9 L124.0,203.7 L125.0,204.1 L126.0,203.7 L127.0,204.0 L128.0,203.5 L129.0,204.1 L130.0,203.2 L131.0,204.0 L132.0,203.4 L133.0,203.5 L134.0,203.6 L135.0,203.6 L136.0,204.0 L137.0,203.8 L138.0,203.4 L139.0,203.7 L140.0,203.1 L141.0,204.1 L142.0,203.8 L143.0,203.9 L144.0,203.4 L145.0,203.6 L146.0,204.0 L147.0,203.4 L148.0,203.7 L149.0,204.2 L150.0,204.1 L151.0,204.0 L152.0,203.5 L153.0,203.0 L154.0,203.6 L155.0,203.9 L156.0,203.8 L157.0,204.2 L158.0,203.5 L159.0,204.1 L160.0,203.8 L161.0,202.2 L162.0,204.1 L163.0,203.8 L164.0,204.0 L165.0,202.7 L166.0,203.6 L167.0,203.4 L168.0,203.8 L169.0,202.3 L170.0,203.9 L171.0,203.9 L172.0,203.4 L173.0,202.7 L174.0,203.5 L175.0,204.0 L176.0,203.5 L177.0,203.8 L178.0,204.1 L179.0,202.4 L180.0,202.1 L181.0,202.6 L182.0,203.4 L183.0,204.0 L184.0,203.4 L185.0,203.5 L186.0,203.4 L187.0,203.9 L188.0,203.9 L189.0,203.7 L190.0,203.8 L191.0,203.9 L192.0,203.4 L193.0,204.2 L194.0,203.8 L195.0,203.6 L196.0,202.8 L197.0,203.8 L198.0,204.0 L199.0,204.2 L200.0,203.8 L201.0,202.9 L202.0,203.0 L203.0,204.2 L204.0,204.1 L205.0,203.7 L206.0,203.6 L207.0,203.5 L208.0,203.7 L209.0,204.1 L210.0,204.2 L211.0,202.0 L212.0,202.5 L213.0,203.8 L214.0,203.7 L215.0,203.9 L216.0,203.8 L217.0,203.4 L218.0,204.1 L219.0,204.2 L220.0,203.7 L221.0,204.1 L222.0,203.8 L223.0,203.1 L224.0,203.5 L225.0,204.0 L226.0,203.6 L227.0,203.6 L228.0,202.3 L229.0,203.8 L230.0,203.7 L231.0,204.0 L232.0,203.5 L233.0,204.1 L234.0,203.4 L235.0,201.9 L236.0,203.7 L237.0,203.8 L238.0,204.2 L239.0,202.5 L240.0,203.4 L241.0,203.6 L242.0,203.5 L243.0,203.8 L244.0,203.7 L245.0,203.5 L246.0,203.6 L247.0,203.9 L248.0,203.7 L249.0,204.0 L250.0,204.1 L251.0,204.2 L252.0,204.2 L253.0,203.9 L254.0,203.9 L255.0,204.0 L256.0,202.4 L257.0,204.0 L258.0,204.0 L259.0,204.0 L259.0,243.8 L258.0,243.7 L257.0,243.7 L256.0,243.7 L255.0,243.8 L254.0,243.6 L253.0,243.7 L252.0,243.5 L251.0,243.5 L250.0,244.0 L249.0,243.8 L248.0,243.8 L247.0,244.1 L246.0,243.5 L245.0,243.6 L244.0,243.7 L243.0,244.0 L242.0,244.2 L241.0,244.0 L240.0,244.9 L239.0,243.7 L238.0,243.9 L237.0,244.1 L236.0,243.7 L235.0,245.8 L234.0,243.7 L233.0,243.5 L232.0,243.6 L231.0,243.7 L230.0,243.8 L229.0,243.5 L228.0,243.9 L227.0,243.6 L226.0,244.1 L225.0,243.9 L224.0,243.5 L223.0,243.4 L222.0,243.8 L221.0,244.1 L220.0,243.5 L219.0,243.9 L218.0,244.1 L217.0,244.0 L216.0,243.5 L215.0,243.6 L214.0,243.8 L213.0,243.8 L212.0,243.5 L211.0,243.8 L210.0,243.9 L209.0,243.5 L208.0,243.5 L207.0,243.8 L206.0,243.5 L205.0,243.5 L204.0,244.1 L203.0,244.1 L202.0,244.1 L201.0,243.9 L200.0,244.1 L199.0,243.6 L198.0,244.1 L197.0,243.8 L196.0,243.9 L195.0,244.3 L194.0,243.5 L193.0,243.9 L192.0,243.5 L191.0,244.1 L190.0,244.0 L189.0,243.6 L188.0,244.1 L187.0,244.9 L186.0,243.5 L185.0,243.7 L184.0,243.6 L183.0,243.8 L182.0,244.1 L181.0,243.9 L180.0,244.1 L179.0,243.6 L178.0,243.9 L177.0,244.3 L176.0,244.0 L175.0,244.2 L174.0,243.6 L173.0,243.8 L172.0,244.9 L171.0,243.5 L170.0,243.6 L169.0,243.5 L168.0,243.5 L167.0,244.6 L166.0,243.5 L165.0,243.8 L164.0,244.2 L163.0,244.0 L162.0,243.9 L161.0,243.5 L160.0,244.1 L159.0,244.1 L158.0,243.8 L157.0,244.1 L156.0,243.5 L155.0,243.8 L154.0,245.6 L153.0,244.8 L152.0,243.6 L151.0,243.7 L150.0,243.7 L149.0,243.8 L148.0,244.1 L147.0,243.9 L146.0,243.7 L145.0,244.3 L144.0,243.7 L143.0,243.4 L142.0,243.8 L141.0,243.5 L140.0,243.8 L139.0,244.2 L138.0,244.0 L137.0,244.0 L136.0,243.6 L135.0,243.9 L134.0,244.2 L133.0,244.0 L132.0,243.7 L131.0,243.8 L130.0,245.3 L129.0,243.9 L128.0,244.1 L127.0,243.5 L126.0,244.1 L125.0,243.6 L124.0,245.1 L123.0,243.6 L122.0,244.1 L121.0,243.5 L120.0,244.1 L119.0,243.9 L118.0,243.5 L117.0,244.1 L116.0,244.1 L115.0,244.0 L114.0,243.7 L113.0,243.4 L112.0,243.4 L111.0,243.9 L110.0,244.0 L109.0,244.0 L108.0,244.1 L107.0,244.4 L106.0,243.9 L105.0,243.7 L104.0,244.1 L103.0,244.0 L102.0,243.6 L101.0,243.9 L100.0,244.1 L99.0,243.7 L98.0,243.8 L97.0,243.4 L96.0,243.6 L95.0,244.1 L94.0,244.0 L93.0,243.4 L92.0,243.6 L91.0,244.9 L90.0,244.0 L89.0,243.4 L88.0,245.4 L87.0,244.1 L86.0,243.9 L85.0,244.0 L84.0,244.2 L83.0,243.7 L82.0,243.9 L81.0,243.7 L80.0,243.6 L79.0,244.2 L78.0,243.9 L77.0,243.4 L76.0,243.9 L75.0,244.7 L74.0,243.9 L73.0,244.2 L72.0,243.9 L71.0,244.2 L70.0,243.5 L69.0,243.8 L68.0,243.5 L67.0,243.5 L66.0,244.7 L65.0,243.7 L64.0,243.7 L63.0,243.5 L62.0,244.2 L61.0,243.4 L60.0,243.4 L59.0,244.0 L58.0,244.7 L57.0,243.5 L56.0,243.9Z" fill="#d8ffd8"/>
<path d="M259.5,164.2 L260.0,166.1 L260.5,166.5 L261.0,168.8 L261.5,173.4 L262.0,179.1 L262.5,184.3 L263.0,189.9 L263.5,192.4 L264.0,193.8 L264.5,195.0 L265.0,196.7 L265.5,199.2 L266.0,201.1 L266.5,201.4 L267.0,202.5 L267.5,203.3 L268.0,205.4 L268.5,206.4 L269.0,206.2 L269.5,208.0 L270.0,209.0 L270.5,208.8 L271.0,209.5 L271.5,210.2 L272.0,209.8 L272.5,208.4 L273.0,210.9 L273.5,209.4 L274.0,210.8 L274.5,209.8 L275.0,209.8 L275.5,210.7 L276.0,210.6 L276.5,210.0 L277.0,210.1 L277.5,208.9 L278.0,210.7 L278.5,210.5 L279.0,210.3 L279.5,208.9 L280.0,210.3 L280.5,209.9 L281.0,210.0 L281.5,210.6 L282.0,210.6 L282.5,210.7 L283.0,210.1 L283.5,210.6 L284.0,210.9 L284.5,209.8 L285.0,210.6 L285.5,209.3 L286.0,210.6 L286.5,210.2 L287.0,209.2 L287.5,209.9 L288.0,210.6 L288.5,210.3 L289.0,210.8 L289.5,210.5 L290.0,209.4 L290.5,211.0 L291.0,210.6 L291.5,209.9 L292.0,210.3 L292.5,210.7 L293.0,210.0 L293.5,210.3 L294.0,210.5 L294.5,210.6 L295.0,210.3 L295.5,210.4 L296.0,210.7 L296.5,210.7 L297.0,210.0 L297.5,209.2 L298.0,210.6 L298.5,209.9 L299.0,208.3 L299.5,210.1 L300.0,209.7 L300.5,210.1 L301.0,210.7 L301.5,210.1 L302.0,209.3 L302.5,209.9 L303.0,210.0 L303.5,210.5 L304.0,210.1 L304.5,210.7 L305.0,210.1 L305.5,210.0 L306.0,210.8 L306.5,210.8 L307.0,210.4 L307.5,210.0 L308.0,209.7 L308.5,210.7 L309.0,210.6 L309.5,210.8 L310.0,208.8 L310.5,209.3 L311.0,210.5 L311.5,209.8 L312.0,210.9 L312.5,210.5 L313.0,209.7 L313.5,209.9 L314.0,210.8 L314.5,210.9 L315.0,209.9 L315.5,209.2 L316.0,209.8 L316.5,210.1 L317.0,210.7 L317.5,208.6 L318.0,210.2 L318.5,210.6 L319.0,209.9 L319.5,210.2 L320.0,210.1 L320.5,209.6 L321.0,210.4 L321.5,210.5 L322.0,210.2 L322.5,210.0 L323.0,210.5 L323.5,209.8 L324.0,210.2 L324.5,210.4 L325.0,210.7 L325.5,210.0 L326.0,210.1 L326.5,209.8 L327.0,210.8 L327.5,210.0 L328.0,209.7 L328.5,210.8 L329.0,209.7 L329.5,208.5 L330.0,210.4 L330.5,210.0 L331.0,209.9 L331.5,210.9 L332.0,210.1 L332.5,208.6 L333.0,210.3 L333.5,210.3 L334.0,210.5 L334.5,210.6 L335.0,209.9 L335.5,210.0 L336.0,210.2 L336.5,210.5 L337.0,210.3 L337.5,210.2 L338.0,210.1 L338.5,210.0 L339.0,211.0 L339.5,210.1 L340.0,208.4 L340.5,210.7 L341.0,210.1 L341.5,210.4 L342.0,211.0 L342.5,210.3 L343.0,209.6 L343.5,210.9 L344.0,209.8 L344.5,210.5 L345.0,210.7 L345.5,209.5 L346.0,210.3 L346.5,210.5 L347.0,211.0 L347.5,208.5 L348.0,209.8 L348.5,210.4 L349.0,210.2 L349.5,210.2 L350.0,209.7 L350.5,210.1 L351.0,210.3 L351.5,210.5 L352.0,209.8 L352.5,210.3 L353.0,210.6 L353.5,209.7 L354.0,210.3 L354.5,210.4 L355.0,210.1 L355.5,210.9 L356.0,210.8 L356.5,210.7 L357.0,211.0 L357.5,209.8 L358.0,209.7 L358.5,210.0 L359.0,210.8 L359.5,210.4 L360.0,209.0 L360.5,209.5 L361.0,210.8 L361.5,209.4 L362.0,210.9 L362.5,209.1 L363.0,210.7 L363.5,209.0 L364.0,209.8 L364.5,210.8 L365.0,210.0 L365.5,208.9 L366.0,210.4 L366.5,210.2 L367.0,208.9 L367.5,209.8 L368.0,210.0 L368.5,210.4 L369.0,210.7 L369.5,209.9 L370.0,210.5 L370.5,210.1 L371.0,210.0 L371.5,210.6 L372.0,209.8 L372.5,210.3 L373.0,210.1 L373.5,211.0 L374.0,210.3 L374.5,209.7 L375.0,210.3 L375.5,209.8 L376.0,210.6 L376.5,210.0 L377.0,210.9 L377.5,210.6 L378.0,210.1 L378.5,210.4 L379.0,210.5 L379.5,210.3 L380.0,208.5 L380.5,211.0 L381.0,210.8 L381.5,210.1 L382.0,210.9 L382.5,209.8 L383.0,208.7 L383.5,210.4 L384.0,209.7 L384.5,210.6 L385.0,209.7 L385.5,210.4 L386.0,210.7 L386.5,210.4 L387.0,209.7 L387.5,210.2 L388.0,210.8 L388.5,210.9 L389.0,210.0 L389.5,209.7 L390.0,209.9 L390.5,209.7 L391.0,210.1 L391.5,210.5 L392.0,210.0 L392.5,209.8 L393.0,208.8 L393.5,211.0 L394.0,210.1 L394.5,210.0 L395.0,210.4 L395.5,210.0 L396.0,210.1 L396.5,210.0 L397.0,209.2 L397.5,210.3 L398.0,210.0 L398.5,209.9 L399.0,210.3 L399.5,209.7 L400.0,210.8 L400.5,210.3 L401.0,210.5 L401.5,209.7 L402.0,210.3 L402.5,210.5 L403.0,209.9 L403.5,210.6 L404.0,210.0 L404.5,210.0 L405.0,210.7 L405.5,210.4 L406.0,210.3 L406.5,210.7 L407.0,210.0 L407.5,210.3 L408.0,208.1 L408.5,209.8 L409.0,210.5 L409.5,209.9 L410.0,210.7 L410.5,210.6 L411.0,210.1 L411.5,210.1 L412.0,210.9 L412.5,210.3 L413.0,209.8 L413.5,210.3 L414.0,209.9 L414.5,209.7 L415.0,210.7 L415.5,210.4 L416.0,210.8 L416.5,210.1 L417.0,210.6 L417.5,210.5 L418.0,209.1 L418.5,210.6 L419.0,210.3 L419.5,210.7 L420.0,210.1 L420.5,209.8 L421.0,210.0 L421.5,210.6 L422.0,209.9 L422.5,210.3 L423.0,210.4 L423.5,210.0 L424.0,210.9 L424.5,210.5 L425.0,210.4 L425.5,210.6 L426.0,210.8 L426.5,209.9 L427.0,210.9 L427.5,209.8 L428.0,209.8 L428.5,209.9 L429.0,210.8 L429.5,209.7 L430.0,210.6 L430.5,209.0 L431.0,210.2 L431.5,209.7 L432.0,210.5 L432.5,211.0 L433.0,209.9 L433.5,210.5 L434.0,210.8 L434.5,209.8 L435.0,210.1 L435.5,210.2 L436.0,209.8 L436.5,209.8 L437.0,209.8 L437.5,210.3 L438.0,209.9 L438.5,210.5 L439.0,210.0 L439.5,209.8 L440.0,209.8 L440.5,210.1 L441.0,210.1 L441.5,209.9 L442.0,210.1 L442.5,210.8 L443.0,210.7 L443.5,210.2 L444.0,210.2 L444.5,210.2 L445.0,210.9 L445.5,209.5 L446.0,210.3 L446.5,210.7 L447.0,210.3 L447.5,209.7 L448.0,210.1 L448.5,209.7 L449.0,210.8 L449.5,210.0 L450.0,209.8 L450.5,208.5 L451.0,208.8 L451.5,210.1 L452.0,210.1 L452.5,210.7 L453.0,209.8 L453.5,209.7 L454.0,210.4 L454.5,209.8 L455.0,210.8 L455.5,210.2 L456.0,209.5 L456.5,209.9 L457.0,210.1 L457.5,209.7 L458.0,210.6 L458.5,210.9 L459.0,210.5 L459.5,210.4 L460.0,209.8 L460.5,209.9 L461.0,210.6 L461.5,210.5 L462.0,210.5 L462.5,210.0 L463.0,210.3 L463.5,210.5 L464.0,210.9 L464.5,210.2 L465.0,209.9 L465.5,210.6 L466.0,210.8 L466.5,210.4 L467.0,210.6 L467.5,210.7 L468.0,209.0 L468.0,248.3 L467.5,248.9 L467.0,248.4 L466.5,248.1 L466.0,248.9 L465.5,248.7 L465.0,249.0 L464.5,248.8 L464.0,248.7 L463.5,250.8 L463.0,248.5 L462.5,248.1 L462.0,248.3 L461.5,248.9 L461.0,249.0 L460.5,248.8 L460.0,249.0 L459.5,249.2 L459.0,248.5 L458.5,248.9 L458.0,248.7 L457.5,249.3 L457.0,249.1 L456.5,248.8 L456.0,248.0 L455.5,249.0 L455.0,248.0 L454.5,248.7 L454.0,249.0 L453.5,249.0 L453.0,249.2 L452.5,249.0 L452.0,249.0 L451.5,248.2 L451.0,248.4 L450.5,248.6 L450.0,248.4 L449.5,248.2 L449.0,248.5 L448.5,248.7 L448.0,249.2 L447.5,248.0 L447.0,248.6 L446.5,248.1 L446.0,249.1 L445.5,248.6 L445.0,248.6 L444.5,248.4 L444.0,248.6 L443.5,248.8 L443.0,248.1 L442.5,248.1 L442.0,248.2 L441.5,249.5 L441.0,249.0 L440.5,249.2 L440.0,248.2 L439.5,248.1 L439.0,248.7 L438.5,249.0 L438.0,250.0 L437.5,249.1 L437.0,249.1 L436.5,248.6 L436.0,248.8 L435.5,248.1 L435.0,249.0 L434.5,248.0 L434.0,248.8 L433.5,248.9 L433.0,248.1 L432.5,249.0 L432.0,248.9 L431.5,249.2 L431.0,249.0 L430.5,248.1 L430.0,248.5 L429.5,249.2 L429.0,248.4 L428.5,248.7 L428.0,248.5 L427.5,248.9 L427.0,248.9 L426.5,248.0 L426.0,248.2 L425.5,248.2 L425.0,248.0 L424.5,248.2 L424.0,248.2 L423.5,248.8 L423.0,249.1 L422.5,250.2 L422.0,249.0 L421.5,248.7 L421.0,249.2 L420.5,248.8 L420.0,249.4 L419.5,250.4 L419.0,248.9 L418.5,248.0 L418.0,248.2 L417.5,248.2 L417.0,249.1 L416.5,248.2 L416.0,248.2 L415.5,248.7 L415.0,249.0 L414.5,248.5 L414.0,248.5 L413.5,248.6 L413.0,248.8 L412.5,248.4 L412.0,248.8 L411.5,248.0 L411.0,248.0 L410.5,248.8 L410.0,249.2 L409.5,248.5 L409.0,249.0 L408.5,249.8 L408.0,248.7 L407.5,248.8 L407.0,248.0 L406.5,248.4 L406.0,248.6 L405.5,248.8 L405.0,249.0 L404.5,248.4 L404.0,248.8 L403.5,250.8 L403.0,248.5 L402.5,248.4 L402.0,249.0 L401.5,247.9 L401.0,248.6 L400.5,248.3 L400.0,248.4 L399.5,249.2 L399.0,248.6 L398.5,248.2 L398.0,248.1 L397.5,248.9 L397.0,250.7 L396.5,248.4 L396.0,249.1 L395.5,248.9 L395.0,248.6 L394.5,248.7 L394.0,248.0 L393.5,248.9 L393.0,248.3 L392.5,249.4 L392.0,249.0 L391.5,249.0 L391.0,248.5 L390.5,248.5 L390.0,248.4 L389.5,248.4 L389.0,247.9 L388.5,247.9 L388.0,248.8 L387.5,249.1 L387.0,248.8 L386.5,248.9 L386.0,248.3 L385.5,248.8 L385.0,248.2 L384.5,248.4 L384.0,249.1 L383.5,248.2 L383.0,248.5 L382.5,249.0 L382.0,248.5 L381.5,248.9 L381.0,248.3 L380.5,248.3 L380.0,248.7 L379.5,249.1 L379.0,248.1 L378.5,248.3 L378.0,248.4 L377.5,248.9 L377.0,248.6 L376.5,248.6 L376.0,248.9 L375.5,250.6 L375.0,249.0 L374.5,248.0 L374.0,248.7 L373.5,247.9 L373.0,248.4 L372.5,249.4 L372.0,248.3 L371.5,249.0 L371.0,249.2 L370.5,247.9 L370.0,249.0 L369.5,248.5 L369.0,248.7 L368.5,248.6 L368.0,249.5 L367.5,249.1 L367.0,248.0 L366.5,249.2 L366.0,248.8 L365.5,248.1 L365.0,248.3 L364.5,248.7 L364.0,248.2 L363.5,248.9 L363.0,248.6 L362.5,248.2 L362.0,249.0 L361.5,248.3 L361.0,248.9 L360.5,248.5 L360.0,248.6 L359.5,249.1 L359.0,247.9 L358.5,248.5 L358.0,249.0 L357.5,248.6 L357.0,248.6 L356.5,248.7 L356.0,248.0 L355.5,249.2 L355.0,248.1 L354.5,249.1 L354.0,248.1 L353.5,249.1 L353.0,248.6 L352.5,250.1 L352.0,248.5 L351.5,248.6 L351.0,248.1 L350.5,248.4 L350.0,248.9 L349.5,248.1 L349.0,249.0 L348.5,247.9 L348.0,249.0 L347.5,248.0 L347.0,248.1 L346.5,248.1 L346.0,248.9 L345.5,249.2 L345.0,248.6 L344.5,248.8 L344.0,248.0 L343.5,248.0 L343.0,248.4 L342.5,249.1 L342.0,249.5 L341.5,247.9 L341.0,248.6 L340.5,248.2 L340.0,249.1 L339.5,248.0 L339.0,249.3 L338.5,250.4 L338.0,248.2 L337.5,249.4 L337.0,248.0 L336.5,248.7 L336.0,249.3 L335.5,248.1 L335.0,248.5 L334.5,249.0 L334.0,248.4 L333.5,249.5 L333.0,249.1 L332.5,249.0 L332.0,249.3 L331.5,248.2 L331.0,248.1 L330.5,248.2 L330.0,248.8 L329.5,248.6 L329.0,248.0 L328.5,248.9 L328.0,248.0 L327.5,248.8 L327.0,248.0 L326.5,248.4 L326.0,249.1 L325.5,248.2 L325.0,249.8 L324.5,248.7 L324.0,248.3 L323.5,248.8 L323.0,248.5 L322.5,248.0 L322.0,248.3 L321.5,249.1 L321.0,249.1 L320.5,248.3 L320.0,248.5 L319.5,248.4 L319.0,248.1 L318.5,249.1 L318.0,248.8 L317.5,248.9 L317.0,248.7 L316.5,248.1 L316.0,248.7 L315.5,248.1 L315.0,248.2 L314.5,250.4 L314.0,248.5 L313.5,248.5 L313.0,247.9 L312.5,249.0 L312.0,249.0 L311.5,248.2 L311.0,248.5 L310.5,248.2 L310.0,248.9 L309.5,248.8 L309.0,249.0 L308.5,248.2 L308.0,248.3 L307.5,248.2 L307.0,249.0 L306.5,248.5 L306.0,248.8 L305.5,248.7 L305.0,250.0 L304.5,248.7 L304.0,249.7 L303.5,249.1 L303.0,248.2 L302.5,250.3 L302.0,249.1 L301.5,248.5 L301.0,248.9 L300.5,248.5 L300.0,248.6 L299.5,249.0 L299.0,248.2 L298.5,248.8 L298.0,250.1 L297.5,248.5 L297.0,250.2 L296.5,248.3 L296.0,248.2 L295.5,247.9 L295.0,248.3 L294.5,247.8 L294.0,248.6 L293.5,248.1 L293.0,250.4 L292.5,248.6 L292.0,248.0 L291.5,249.0 L291.0,248.5 L290.5,249.1 L290.0,248.0 L289.5,247.9 L289.0,248.9 L288.5,248.0 L288.0,248.3 L287.5,248.8 L287.0,248.2 L286.5,248.1 L286.0,248.6 L285.5,249.6 L285.0,248.4 L284.5,248.5 L284.0,248.0 L283.5,249.1 L283.0,247.8 L282.5,248.7 L282.0,248.3 L281.5,248.8 L281.0,248.9 L280.5,248.0 L280.0,248.9 L279.5,249.0 L279.0,248.4 L278.5,248.5 L278.0,248.8 L277.5,247.9 L277.0,249.0 L276.5,248.3 L276.0,248.7 L275.5,249.1 L275.0,248.8 L274.5,248.7 L274.0,248.6 L273.5,248.1 L273.0,248.4 L272.5,248.4 L272.0,249.1 L271.5,247.5 L271.0,246.6 L270.5,246.5 L270.0,245.8 L269.5,247.0 L269.0,245.4 L268.5,244.9 L268.0,243.4 L267.5,242.3 L267.0,241.1 L266.5,239.6 L266.0,238.6 L265.5,236.3 L265.0,235.6 L264.5,233.4 L264.0,233.3 L263.5,228.9 L263.0,226.0 L262.5,224.5 L262.0,219.1 L261.5,216.6 L261.0,213.8 L260.5,210.7 L260.0,208.5 L259.5,205.4Z" fill="#d8ffd8"/>
<path d="M56,180.3 H259.8 L260.6,211.7 L261.5,216 L263,222 L265,227.5 L267,230.5 L270,233 L275,235.2 L285,238.3 L295,240.6 L305,243 L315,245.2 L323,246.6 L330,247 H469" fill="none" stroke="#f0902a" stroke-width="1.5" stroke-linejoin="round"/>
</svg>
<rect x="56.5" y="156.5" width="412" height="109" fill="none" stroke="#5a5a5a" stroke-width="1"/>
<rect x="56" y="291" width="412" height="104" fill="#000"/>
<line x1="97.5" y1="291" x2="97.5" y2="395" stroke="#464646" stroke-width="1" stroke-dasharray="1 1"/><line x1="138.5" y1="291" x2="138.5" y2="395" stroke="#464646" stroke-width="1" stroke-dasharray="1 1"/><line x1="180.5" y1="291" x2="180.5" y2="395" stroke="#464646" stroke-width="1" stroke-dasharray="1 1"/><line x1="221.5" y1="291" x2="221.5" y2="395" stroke="#464646" stroke-width="1" stroke-dasharray="1 1"/><line x1="262.5" y1="291" x2="262.5" y2="395" stroke="#5a5a5a" stroke-width="1"/><line x1="303.5" y1="291" x2="303.5" y2="395" stroke="#464646" stroke-width="1" stroke-dasharray="1 1"/><line x1="344.5" y1="291" x2="344.5" y2="395" stroke="#464646" stroke-width="1" stroke-dasharray="1 1"/><line x1="386.5" y1="291" x2="386.5" y2="395" stroke="#464646" stroke-width="1" stroke-dasharray="1 1"/><line x1="427.5" y1="291" x2="427.5" y2="395" stroke="#464646" stroke-width="1" stroke-dasharray="1 1"/><line x1="56" y1="304.5" x2="468" y2="304.5" stroke="#464646" stroke-width="1" stroke-dasharray="1 1"/><line x1="56" y1="317.5" x2="468" y2="317.5" stroke="#464646" stroke-width="1" stroke-dasharray="1 1"/><line x1="56" y1="330.5" x2="468" y2="330.5" stroke="#464646" stroke-width="1" stroke-dasharray="1 1"/><line x1="56" y1="343.5" x2="468" y2="343.5" stroke="#4e4e4e" stroke-width="1"/><line x1="64.5" y1="342.0" x2="64.5" y2="345.0" stroke="#5a5a5a" stroke-width="1"/><line x1="72.5" y1="342.0" x2="72.5" y2="345.0" stroke="#5a5a5a" stroke-width="1"/><line x1="81.5" y1="342.0" x2="81.5" y2="345.0" stroke="#5a5a5a" stroke-width="1"/><line x1="89.5" y1="342.0" x2="89.5" y2="345.0" stroke="#5a5a5a" stroke-width="1"/><line x1="97.5" y1="342.0" x2="97.5" y2="345.0" stroke="#5a5a5a" stroke-width="1"/><line x1="105.5" y1="342.0" x2="105.5" y2="345.0" stroke="#5a5a5a" stroke-width="1"/><line x1="114.5" y1="342.0" x2="114.5" y2="345.0" stroke="#5a5a5a" stroke-width="1"/><line x1="122.5" y1="342.0" x2="122.5" y2="345.0" stroke="#5a5a5a" stroke-width="1"/><line x1="130.5" y1="342.0" x2="130.5" y2="345.0" stroke="#5a5a5a" stroke-width="1"/><line x1="138.5" y1="342.0" x2="138.5" y2="345.0" stroke="#5a5a5a" stroke-width="1"/><line x1="147.5" y1="342.0" x2="147.5" y2="345.0" stroke="#5a5a5a" stroke-width="1"/><line x1="155.5" y1="342.0" x2="155.5" y2="345.0" stroke="#5a5a5a" stroke-width="1"/><line x1="163.5" y1="342.0" x2="163.5" y2="345.0" stroke="#5a5a5a" stroke-width="1"/><line x1="171.5" y1="342.0" x2="171.5" y2="345.0" stroke="#5a5a5a" stroke-width="1"/><line x1="180.5" y1="342.0" x2="180.5" y2="345.0" stroke="#5a5a5a" stroke-width="1"/><line x1="188.5" y1="342.0" x2="188.5" y2="345.0" stroke="#5a5a5a" stroke-width="1"/><line x1="196.5" y1="342.0" x2="196.5" y2="345.0" stroke="#5a5a5a" stroke-width="1"/><line x1="204.5" y1="342.0" x2="204.5" y2="345.0" stroke="#5a5a5a" stroke-width="1"/><line x1="213.5" y1="342.0" x2="213.5" y2="345.0" stroke="#5a5a5a" stroke-width="1"/><line x1="221.5" y1="342.0" x2="221.5" y2="345.0" stroke="#5a5a5a" stroke-width="1"/><line x1="229.5" y1="342.0" x2="229.5" y2="345.0" stroke="#5a5a5a" stroke-width="1"/><line x1="237.5" y1="342.0" x2="237.5" y2="345.0" stroke="#5a5a5a" stroke-width="1"/><line x1="246.5" y1="342.0" x2="246.5" y2="345.0" stroke="#5a5a5a" stroke-width="1"/><line x1="254.5" y1="342.0" x2="254.5" y2="345.0" stroke="#5a5a5a" stroke-width="1"/><line x1="262.5" y1="342.0" x2="262.5" y2="345.0" stroke="#5a5a5a" stroke-width="1"/><line x1="270.5" y1="342.0" x2="270.5" y2="345.0" stroke="#5a5a5a" stroke-width="1"/><line x1="278.5" y1="342.0" x2="278.5" y2="345.0" stroke="#5a5a5a" stroke-width="1"/><line x1="287.5" y1="342.0" x2="287.5" y2="345.0" stroke="#5a5a5a" stroke-width="1"/><line x1="295.5" y1="342.0" x2="295.5" y2="345.0" stroke="#5a5a5a" stroke-width="1"/><line x1="303.5" y1="342.0" x2="303.5" y2="345.0" stroke="#5a5a5a" stroke-width="1"/><line x1="311.5" y1="342.0" x2="311.5" y2="345.0" stroke="#5a5a5a" stroke-width="1"/><line x1="320.5" y1="342.0" x2="320.5" y2="345.0" stroke="#5a5a5a" stroke-width="1"/><line x1="328.5" y1="342.0" x2="328.5" y2="345.0" stroke="#5a5a5a" stroke-width="1"/><line x1="336.5" y1="342.0" x2="336.5" y2="345.0" stroke="#5a5a5a" stroke-width="1"/><line x1="344.5" y1="342.0" x2="344.5" y2="345.0" stroke="#5a5a5a" stroke-width="1"/><line x1="353.5" y1="342.0" x2="353.5" y2="345.0" stroke="#5a5a5a" stroke-width="1"/><line x1="361.5" y1="342.0" x2="361.5" y2="345.0" stroke="#5a5a5a" stroke-width="1"/><line x1="369.5" y1="342.0" x2="369.5" y2="345.0" stroke="#5a5a5a" stroke-width="1"/><line x1="377.5" y1="342.0" x2="377.5" y2="345.0" stroke="#5a5a5a" stroke-width="1"/><line x1="386.5" y1="342.0" x2="386.5" y2="345.0" stroke="#5a5a5a" stroke-width="1"/><line x1="394.5" y1="342.0" x2="394.5" y2="345.0" stroke="#5a5a5a" stroke-width="1"/><line x1="402.5" y1="342.0" x2="402.5" y2="345.0" stroke="#5a5a5a" stroke-width="1"/><line x1="410.5" y1="342.0" x2="410.5" y2="345.0" stroke="#5a5a5a" stroke-width="1"/><line x1="419.5" y1="342.0" x2="419.5" y2="345.0" stroke="#5a5a5a" stroke-width="1"/><line x1="427.5" y1="342.0" x2="427.5" y2="345.0" stroke="#5a5a5a" stroke-width="1"/><line x1="435.5" y1="342.0" x2="435.5" y2="345.0" stroke="#5a5a5a" stroke-width="1"/><line x1="443.5" y1="342.0" x2="443.5" y2="345.0" stroke="#5a5a5a" stroke-width="1"/><line x1="452.5" y1="342.0" x2="452.5" y2="345.0" stroke="#5a5a5a" stroke-width="1"/><line x1="460.5" y1="342.0" x2="460.5" y2="345.0" stroke="#5a5a5a" stroke-width="1"/><line x1="56" y1="356.5" x2="468" y2="356.5" stroke="#464646" stroke-width="1" stroke-dasharray="1 1"/><line x1="56" y1="369.5" x2="468" y2="369.5" stroke="#464646" stroke-width="1" stroke-dasharray="1 1"/><line x1="56" y1="382.5" x2="468" y2="382.5" stroke="#464646" stroke-width="1" stroke-dasharray="1 1"/><rect x="64" y="311.0" width="1" height="1" fill="#4a4a4a"/><rect x="72" y="311.0" width="1" height="1" fill="#4a4a4a"/><rect x="81" y="311.0" width="1" height="1" fill="#4a4a4a"/><rect x="89" y="311.0" width="1" height="1" fill="#4a4a4a"/><rect x="105" y="311.0" width="1" height="1" fill="#4a4a4a"/><rect x="114" y="311.0" width="1" height="1" fill="#4a4a4a"/><rect x="122" y="311.0" width="1" height="1" fill="#4a4a4a"/><rect x="130" y="311.0" width="1" height="1" fill="#4a4a4a"/><rect x="147" y="311.0" width="1" height="1" fill="#4a4a4a"/><rect x="155" y="311.0" width="1" height="1" fill="#4a4a4a"/><rect x="163" y="311.0" width="1" height="1" fill="#4a4a4a"/><rect x="171" y="311.0" width="1" height="1" fill="#4a4a4a"/><rect x="188" y="311.0" width="1" height="1" fill="#4a4a4a"/><rect x="196" y="311.0" width="1" height="1" fill="#4a4a4a"/><rect x="204" y="311.0" width="1" height="1" fill="#4a4a4a"/><rect x="213" y="311.0" width="1" height="1" fill="#4a4a4a"/><rect x="229" y="311.0" width="1" height="1" fill="#4a4a4a"/><rect x="237" y="311.0" width="1" height="1" fill="#4a4a4a"/><rect x="246" y="311.0" width="1" height="1" fill="#4a4a4a"/><rect x="254" y="311.0" width="1" height="1" fill="#4a4a4a"/><rect x="270" y="311.0" width="1" height="1" fill="#4a4a4a"/><rect x="278" y="311.0" width="1" height="1" fill="#4a4a4a"/><rect x="287" y="311.0" width="1" height="1" fill="#4a4a4a"/><rect x="295" y="311.0" width="1" height="1" fill="#4a4a4a"/><rect x="311" y="311.0" width="1" height="1" fill="#4a4a4a"/><rect x="320" y="311.0" width="1" height="1" fill="#4a4a4a"/><rect x="328" y="311.0" width="1" height="1" fill="#4a4a4a"/><rect x="336" y="311.0" width="1" height="1" fill="#4a4a4a"/><rect x="353" y="311.0" width="1" height="1" fill="#4a4a4a"/><rect x="361" y="311.0" width="1" height="1" fill="#4a4a4a"/><rect x="369" y="311.0" width="1" height="1" fill="#4a4a4a"/><rect x="377" y="311.0" width="1" height="1" fill="#4a4a4a"/><rect x="394" y="311.0" width="1" height="1" fill="#4a4a4a"/><rect x="402" y="311.0" width="1" height="1" fill="#4a4a4a"/><rect x="410" y="311.0" width="1" height="1" fill="#4a4a4a"/><rect x="419" y="311.0" width="1" height="1" fill="#4a4a4a"/><rect x="435" y="311.0" width="1" height="1" fill="#4a4a4a"/><rect x="443" y="311.0" width="1" height="1" fill="#4a4a4a"/><rect x="452" y="311.0" width="1" height="1" fill="#4a4a4a"/><rect x="460" y="311.0" width="1" height="1" fill="#4a4a4a"/><rect x="64" y="376.0" width="1" height="1" fill="#4a4a4a"/><rect x="72" y="376.0" width="1" height="1" fill="#4a4a4a"/><rect x="81" y="376.0" width="1" height="1" fill="#4a4a4a"/><rect x="89" y="376.0" width="1" height="1" fill="#4a4a4a"/><rect x="105" y="376.0" width="1" height="1" fill="#4a4a4a"/><rect x="114" y="376.0" width="1" height="1" fill="#4a4a4a"/><rect x="122" y="376.0" width="1" height="1" fill="#4a4a4a"/><rect x="130" y="376.0" width="1" height="1" fill="#4a4a4a"/><rect x="147" y="376.0" width="1" height="1" fill="#4a4a4a"/><rect x="155" y="376.0" width="1" height="1" fill="#4a4a4a"/><rect x="163" y="376.0" width="1" height="1" fill="#4a4a4a"/><rect x="171" y="376.0" width="1" height="1" fill="#4a4a4a"/><rect x="188" y="376.0" width="1" height="1" fill="#4a4a4a"/><rect x="196" y="376.0" width="1" height="1" fill="#4a4a4a"/><rect x="204" y="376.0" width="1" height="1" fill="#4a4a4a"/><rect x="213" y="376.0" width="1" height="1" fill="#4a4a4a"/><rect x="229" y="376.0" width="1" height="1" fill="#4a4a4a"/><rect x="237" y="376.0" width="1" height="1" fill="#4a4a4a"/><rect x="246" y="376.0" width="1" height="1" fill="#4a4a4a"/><rect x="254" y="376.0" width="1" height="1" fill="#4a4a4a"/><rect x="270" y="376.0" width="1" height="1" fill="#4a4a4a"/><rect x="278" y="376.0" width="1" height="1" fill="#4a4a4a"/><rect x="287" y="376.0" width="1" height="1" fill="#4a4a4a"/><rect x="295" y="376.0" width="1" height="1" fill="#4a4a4a"/><rect x="311" y="376.0" width="1" height="1" fill="#4a4a4a"/><rect x="320" y="376.0" width="1" height="1" fill="#4a4a4a"/><rect x="328" y="376.0" width="1" height="1" fill="#4a4a4a"/><rect x="336" y="376.0" width="1" height="1" fill="#4a4a4a"/><rect x="353" y="376.0" width="1" height="1" fill="#4a4a4a"/><rect x="361" y="376.0" width="1" height="1" fill="#4a4a4a"/><rect x="369" y="376.0" width="1" height="1" fill="#4a4a4a"/><rect x="377" y="376.0" width="1" height="1" fill="#4a4a4a"/><rect x="394" y="376.0" width="1" height="1" fill="#4a4a4a"/><rect x="402" y="376.0" width="1" height="1" fill="#4a4a4a"/><rect x="410" y="376.0" width="1" height="1" fill="#4a4a4a"/><rect x="419" y="376.0" width="1" height="1" fill="#4a4a4a"/><rect x="435" y="376.0" width="1" height="1" fill="#4a4a4a"/><rect x="443" y="376.0" width="1" height="1" fill="#4a4a4a"/><rect x="452" y="376.0" width="1" height="1" fill="#4a4a4a"/><rect x="460" y="376.0" width="1" height="1" fill="#4a4a4a"/>
<svg x="56" y="291" width="412" height="104" viewBox="56 291 412 104" overflow="hidden">
<path d="M56.0,301.9 L57.0,301.7 L58.0,301.9 L59.0,300.3 L60.0,302.1 L61.0,302.2 L62.0,302.2 L63.0,301.9 L64.0,301.8 L65.0,301.6 L66.0,301.6 L67.0,302.3 L68.0,301.6 L69.0,301.9 L70.0,301.7 L71.0,302.0 L72.0,302.2 L73.0,302.0 L74.0,301.9 L75.0,301.8 L76.0,301.8 L77.0,301.9 L78.0,301.8 L79.0,301.5 L80.0,300.3 L81.0,301.9 L82.0,302.1 L83.0,301.6 L84.0,301.9 L85.0,301.0 L86.0,302.1 L87.0,302.2 L88.0,300.7 L89.0,301.6 L90.0,301.6 L91.0,301.6 L92.0,301.9 L93.0,301.0 L94.0,301.9 L95.0,302.3 L96.0,301.9 L97.0,301.7 L98.0,302.0 L99.0,301.5 L100.0,302.2 L101.0,302.2 L102.0,301.9 L103.0,301.8 L104.0,302.2 L105.0,301.6 L106.0,300.8 L107.0,301.9 L108.0,302.2 L109.0,301.5 L110.0,301.9 L111.0,301.5 L112.0,302.1 L113.0,301.9 L114.0,301.6 L115.0,301.7 L116.0,301.8 L117.0,301.7 L118.0,301.6 L119.0,302.1 L120.0,301.6 L121.0,302.1 L122.0,301.8 L123.0,301.7 L124.0,302.2 L125.0,301.9 L126.0,300.2 L127.0,301.6 L128.0,301.7 L129.0,301.7 L130.0,301.8 L131.0,301.8 L132.0,301.6 L133.0,301.7 L134.0,302.3 L135.0,302.1 L136.0,302.2 L137.0,301.7 L138.0,302.2 L139.0,301.8 L140.0,301.6 L141.0,301.8 L142.0,301.8 L143.0,302.0 L144.0,302.1 L145.0,302.1 L146.0,302.0 L147.0,300.6 L148.0,301.6 L149.0,302.0 L150.0,301.6 L151.0,301.8 L152.0,302.1 L153.0,301.7 L154.0,302.0 L155.0,301.7 L156.0,302.1 L157.0,302.2 L158.0,302.2 L159.0,301.7 L160.0,302.2 L161.0,301.6 L162.0,302.0 L163.0,302.3 L164.0,302.1 L165.0,301.6 L166.0,300.8 L167.0,302.1 L168.0,301.8 L169.0,302.1 L170.0,302.0 L171.0,301.8 L172.0,302.2 L173.0,301.6 L174.0,301.9 L175.0,301.9 L176.0,301.9 L177.0,302.1 L178.0,301.9 L179.0,302.3 L180.0,301.8 L181.0,302.0 L182.0,302.1 L183.0,301.6 L184.0,301.7 L185.0,302.0 L186.0,301.6 L187.0,302.0 L188.0,302.2 L189.0,301.5 L190.0,301.5 L191.0,301.6 L192.0,301.8 L193.0,302.2 L194.0,301.6 L195.0,300.8 L196.0,302.1 L197.0,301.6 L198.0,302.2 L199.0,301.8 L200.0,302.0 L201.0,302.3 L202.0,302.1 L203.0,301.6 L204.0,302.0 L205.0,301.9 L206.0,302.3 L207.0,301.8 L208.0,301.5 L209.0,301.8 L210.0,302.0 L211.0,302.2 L212.0,302.1 L213.0,301.9 L214.0,301.6 L215.0,302.2 L216.0,302.3 L217.0,301.9 L218.0,301.8 L219.0,301.7 L220.0,302.2 L221.0,302.0 L222.0,301.7 L223.0,301.8 L224.0,301.6 L225.0,302.1 L226.0,301.1 L227.0,301.7 L228.0,301.8 L229.0,301.8 L230.0,301.8 L231.0,301.9 L232.0,302.1 L233.0,302.0 L234.0,302.2 L235.0,301.3 L236.0,301.8 L237.0,301.6 L238.0,302.2 L239.0,302.2 L240.0,302.0 L241.0,301.6 L242.0,302.0 L243.0,301.9 L244.0,301.6 L245.0,301.2 L246.0,300.6 L247.0,301.9 L248.0,302.1 L249.0,302.0 L250.0,301.5 L251.0,301.9 L252.0,301.6 L253.0,301.7 L254.0,302.2 L255.0,301.9 L256.0,301.9 L257.0,302.0 L258.0,301.6 L259.0,302.1 L260.0,302.1 L261.0,301.7 L262.0,301.9 L263.0,301.7 L264.0,301.7 L265.0,301.9 L266.0,302.2 L267.0,302.1 L268.0,301.7 L269.0,301.7 L270.0,301.9 L271.0,302.1 L272.0,301.8 L273.0,301.8 L274.0,300.7 L275.0,302.3 L276.0,301.7 L277.0,302.1 L278.0,301.9 L279.0,302.0 L280.0,301.6 L281.0,302.1 L282.0,302.3 L283.0,302.3 L284.0,302.6 L285.0,302.4 L286.0,303.1 L287.0,303.4 L288.0,303.4 L289.0,303.1 L290.0,303.9 L291.0,303.8 L292.0,303.8 L293.0,304.5 L294.0,304.4 L295.0,304.5 L296.0,305.2 L297.0,305.1 L298.0,304.9 L299.0,305.7 L300.0,305.3 L301.0,305.9 L302.0,304.4 L303.0,305.2 L304.0,305.7 L305.0,305.8 L306.0,305.7 L307.0,305.9 L308.0,305.7 L309.0,305.4 L310.0,305.3 L311.0,306.0 L312.0,304.5 L313.0,305.8 L314.0,305.2 L315.0,305.3 L316.0,305.3 L317.0,306.0 L318.0,305.9 L319.0,305.8 L320.0,305.9 L321.0,305.8 L322.0,305.8 L323.0,305.2 L324.0,305.8 L325.0,305.7 L326.0,305.6 L327.0,304.6 L328.0,305.8 L329.0,304.6 L330.0,305.4 L331.0,304.2 L332.0,305.8 L333.0,305.4 L334.0,305.9 L335.0,305.7 L336.0,305.3 L337.0,305.4 L338.0,303.7 L339.0,305.3 L340.0,305.5 L341.0,305.9 L342.0,305.7 L343.0,305.6 L344.0,305.6 L345.0,305.9 L346.0,305.2 L347.0,303.8 L348.0,305.9 L349.0,305.9 L350.0,305.2 L351.0,305.4 L352.0,305.6 L353.0,305.3 L354.0,305.7 L355.0,305.3 L356.0,305.9 L357.0,305.9 L358.0,305.9 L359.0,305.9 L360.0,305.9 L361.0,305.3 L362.0,305.9 L363.0,305.9 L364.0,305.9 L365.0,305.5 L366.0,305.9 L367.0,305.9 L368.0,304.9 L369.0,305.5 L370.0,305.2 L371.0,305.8 L372.0,305.4 L373.0,305.9 L374.0,305.5 L375.0,305.4 L376.0,305.3 L377.0,305.4 L378.0,305.6 L379.0,305.8 L380.0,305.3 L381.0,305.9 L382.0,305.3 L383.0,305.7 L384.0,305.4 L385.0,305.5 L386.0,305.4 L387.0,305.7 L388.0,305.3 L389.0,305.5 L390.0,305.3 L391.0,305.6 L392.0,305.8 L393.0,305.8 L394.0,305.5 L395.0,305.8 L396.0,306.0 L397.0,304.1 L398.0,305.3 L399.0,306.0 L400.0,305.4 L401.0,305.4 L402.0,305.9 L403.0,305.4 L404.0,305.8 L405.0,305.4 L406.0,305.4 L407.0,303.7 L408.0,305.3 L409.0,305.0 L410.0,305.9 L411.0,305.3 L412.0,305.4 L413.0,305.5 L414.0,305.7 L415.0,305.9 L416.0,305.4 L417.0,306.0 L418.0,305.4 L419.0,305.8 L420.0,305.5 L421.0,305.5 L422.0,305.6 L423.0,305.7 L424.0,305.8 L425.0,305.5 L426.0,305.8 L427.0,305.3 L428.0,305.7 L429.0,304.6 L430.0,305.6 L431.0,305.0 L432.0,305.6 L433.0,305.3 L434.0,305.6 L435.0,305.6 L436.0,305.9 L437.0,305.6 L438.0,305.8 L439.0,305.4 L440.0,305.7 L441.0,305.6 L442.0,305.7 L443.0,305.4 L444.0,305.6 L445.0,305.5 L446.0,306.0 L447.0,305.4 L448.0,305.8 L449.0,305.5 L450.0,305.8 L451.0,305.9 L452.0,305.4 L453.0,305.7 L454.0,305.9 L455.0,305.5 L456.0,305.6 L457.0,305.2 L458.0,305.5 L459.0,305.7 L460.0,305.9 L461.0,305.7 L462.0,305.4 L463.0,305.4 L464.0,305.3 L465.0,305.7 L466.0,305.9 L467.0,305.0 L468.0,305.3 L468.0,310.2 L467.0,310.7 L466.0,309.7 L465.0,309.6 L464.0,310.1 L463.0,309.7 L462.0,310.0 L461.0,310.1 L460.0,309.7 L459.0,309.7 L458.0,309.6 L457.0,310.0 L456.0,309.6 L455.0,309.5 L454.0,309.9 L453.0,309.7 L452.0,309.5 L451.0,309.6 L450.0,309.6 L449.0,309.4 L448.0,311.4 L447.0,310.1 L446.0,309.7 L445.0,309.4 L444.0,310.0 L443.0,309.9 L442.0,311.0 L441.0,309.6 L440.0,309.7 L439.0,310.2 L438.0,309.7 L437.0,309.7 L436.0,311.3 L435.0,310.1 L434.0,310.0 L433.0,310.2 L432.0,309.8 L431.0,310.0 L430.0,309.8 L429.0,310.5 L428.0,309.8 L427.0,310.1 L426.0,310.0 L425.0,309.4 L424.0,310.0 L423.0,309.8 L422.0,309.8 L421.0,310.0 L420.0,309.9 L419.0,309.9 L418.0,309.7 L417.0,309.8 L416.0,309.6 L415.0,310.0 L414.0,310.0 L413.0,309.9 L412.0,310.1 L411.0,309.5 L410.0,309.7 L409.0,309.4 L408.0,310.3 L407.0,309.9 L406.0,309.5 L405.0,309.4 L404.0,309.4 L403.0,310.1 L402.0,310.1 L401.0,309.9 L400.0,310.1 L399.0,309.4 L398.0,310.8 L397.0,309.7 L396.0,309.9 L395.0,309.6 L394.0,311.2 L393.0,310.1 L392.0,309.5 L391.0,310.7 L390.0,309.8 L389.0,310.1 L388.0,310.1 L387.0,310.1 L386.0,310.0 L385.0,309.5 L384.0,309.8 L383.0,310.1 L382.0,310.1 L381.0,309.4 L380.0,309.5 L379.0,309.9 L378.0,309.9 L377.0,309.6 L376.0,309.9 L375.0,309.8 L374.0,311.4 L373.0,309.6 L372.0,309.5 L371.0,309.8 L370.0,310.0 L369.0,309.8 L368.0,310.1 L367.0,309.9 L366.0,309.4 L365.0,310.0 L364.0,310.0 L363.0,309.4 L362.0,309.3 L361.0,309.4 L360.0,310.6 L359.0,309.6 L358.0,309.7 L357.0,309.5 L356.0,310.7 L355.0,310.1 L354.0,309.6 L353.0,311.1 L352.0,309.5 L351.0,310.0 L350.0,310.0 L349.0,309.9 L348.0,309.7 L347.0,309.5 L346.0,309.6 L345.0,309.4 L344.0,311.3 L343.0,309.4 L342.0,309.6 L341.0,309.9 L340.0,309.9 L339.0,309.5 L338.0,310.3 L337.0,309.9 L336.0,309.7 L335.0,309.5 L334.0,309.5 L333.0,309.8 L332.0,310.1 L331.0,309.4 L330.0,309.4 L329.0,309.9 L328.0,309.7 L327.0,311.5 L326.0,309.8 L325.0,309.5 L324.0,311.4 L323.0,309.7 L322.0,309.9 L321.0,309.5 L320.0,309.3 L319.0,309.5 L318.0,309.7 L317.0,309.5 L316.0,309.7 L315.0,309.5 L314.0,309.4 L313.0,310.1 L312.0,309.8 L311.0,309.2 L310.0,309.4 L309.0,309.8 L308.0,310.3 L307.0,309.8 L306.0,309.7 L305.0,309.2 L304.0,309.2 L303.0,309.1 L302.0,309.4 L301.0,309.1 L300.0,310.6 L299.0,309.3 L298.0,309.3 L297.0,309.0 L296.0,309.4 L295.0,309.6 L294.0,309.3 L293.0,309.2 L292.0,309.3 L291.0,309.3 L290.0,309.8 L289.0,309.7 L288.0,309.8 L287.0,309.4 L286.0,309.7 L285.0,309.8 L284.0,309.8 L283.0,309.6 L282.0,309.7 L281.0,310.3 L280.0,310.3 L279.0,309.9 L278.0,310.5 L277.0,310.3 L276.0,310.5 L275.0,310.7 L274.0,310.5 L273.0,311.0 L272.0,310.9 L271.0,311.4 L270.0,311.4 L269.0,311.9 L268.0,312.0 L267.0,312.1 L266.0,312.0 L265.0,313.6 L264.0,314.6 L263.0,312.9 L262.0,312.6 L261.0,312.9 L260.0,313.4 L259.0,313.2 L258.0,313.3 L257.0,312.7 L256.0,312.7 L255.0,313.1 L254.0,313.3 L253.0,312.7 L252.0,312.7 L251.0,313.2 L250.0,313.3 L249.0,312.8 L248.0,313.2 L247.0,312.6 L246.0,313.1 L245.0,313.0 L244.0,313.2 L243.0,312.6 L242.0,312.6 L241.0,312.6 L240.0,313.2 L239.0,313.1 L238.0,313.2 L237.0,312.9 L236.0,313.5 L235.0,313.1 L234.0,313.1 L233.0,312.9 L232.0,312.9 L231.0,313.2 L230.0,313.4 L229.0,312.9 L228.0,313.3 L227.0,312.9 L226.0,312.9 L225.0,312.6 L224.0,313.0 L223.0,312.7 L222.0,312.6 L221.0,313.2 L220.0,314.1 L219.0,314.5 L218.0,313.0 L217.0,312.9 L216.0,314.4 L215.0,312.7 L214.0,313.0 L213.0,312.9 L212.0,312.9 L211.0,312.7 L210.0,312.9 L209.0,313.1 L208.0,313.1 L207.0,312.9 L206.0,314.2 L205.0,313.4 L204.0,312.7 L203.0,312.9 L202.0,313.4 L201.0,313.1 L200.0,314.1 L199.0,312.8 L198.0,312.8 L197.0,313.2 L196.0,313.0 L195.0,313.4 L194.0,313.1 L193.0,313.3 L192.0,313.0 L191.0,313.0 L190.0,312.9 L189.0,313.4 L188.0,312.7 L187.0,312.9 L186.0,312.7 L185.0,313.3 L184.0,314.0 L183.0,312.9 L182.0,313.1 L181.0,313.0 L180.0,313.8 L179.0,313.1 L178.0,312.8 L177.0,313.1 L176.0,314.2 L175.0,313.7 L174.0,313.3 L173.0,313.0 L172.0,313.4 L171.0,313.2 L170.0,313.1 L169.0,313.3 L168.0,313.1 L167.0,313.4 L166.0,313.1 L165.0,312.8 L164.0,312.8 L163.0,313.1 L162.0,312.9 L161.0,313.4 L160.0,313.4 L159.0,313.0 L158.0,315.0 L157.0,312.8 L156.0,313.3 L155.0,313.2 L154.0,312.9 L153.0,313.4 L152.0,313.0 L151.0,313.0 L150.0,312.8 L149.0,313.4 L148.0,313.2 L147.0,313.0 L146.0,312.9 L145.0,312.7 L144.0,313.1 L143.0,313.5 L142.0,313.5 L141.0,313.3 L140.0,312.9 L139.0,313.5 L138.0,313.3 L137.0,313.0 L136.0,313.3 L135.0,313.3 L134.0,313.2 L133.0,313.2 L132.0,313.4 L131.0,312.8 L130.0,313.5 L129.0,313.4 L128.0,313.3 L127.0,313.0 L126.0,313.2 L125.0,313.6 L124.0,314.4 L123.0,313.3 L122.0,313.4 L121.0,313.3 L120.0,313.1 L119.0,313.1 L118.0,312.9 L117.0,312.9 L116.0,313.8 L115.0,313.6 L114.0,312.8 L113.0,313.4 L112.0,313.0 L111.0,313.0 L110.0,313.4 L109.0,312.9 L108.0,313.4 L107.0,313.5 L106.0,313.3 L105.0,313.5 L104.0,313.2 L103.0,312.8 L102.0,313.4 L101.0,313.3 L100.0,313.1 L99.0,313.2 L98.0,313.4 L97.0,313.0 L96.0,312.9 L95.0,313.0 L94.0,313.3 L93.0,313.4 L92.0,313.4 L91.0,313.1 L90.0,313.3 L89.0,312.9 L88.0,313.1 L87.0,312.9 L86.0,313.4 L85.0,313.2 L84.0,312.9 L83.0,314.4 L82.0,313.1 L81.0,312.9 L80.0,313.5 L79.0,313.4 L78.0,313.4 L77.0,313.7 L76.0,313.1 L75.0,313.0 L74.0,313.4 L73.0,313.3 L72.0,313.1 L71.0,313.2 L70.0,313.1 L69.0,313.2 L68.0,313.3 L67.0,314.2 L66.0,313.2 L65.0,313.9 L64.0,313.2 L63.0,313.0 L62.0,313.1 L61.0,315.1 L60.0,313.3 L59.0,313.0 L58.0,312.9 L57.0,313.6 L56.0,312.9Z" fill="#8080ff"/>
<path d="M56.0,324.9 L57.0,325.1 L58.0,325.0 L59.0,324.9 L60.0,325.1 L61.0,324.2 L62.0,325.1 L63.0,324.7 L64.0,324.7 L65.0,324.8 L66.0,324.9 L67.0,325.0 L68.0,324.7 L69.0,325.2 L70.0,324.9 L71.0,325.0 L72.0,325.2 L73.0,325.1 L74.0,325.2 L75.0,324.0 L76.0,324.9 L77.0,325.0 L78.0,325.0 L79.0,324.7 L80.0,325.1 L81.0,324.9 L82.0,324.7 L83.0,325.1 L84.0,324.7 L85.0,325.1 L86.0,324.7 L87.0,324.8 L88.0,324.9 L89.0,325.1 L90.0,324.8 L91.0,324.8 L92.0,324.7 L93.0,324.9 L94.0,325.1 L95.0,325.2 L96.0,325.2 L97.0,325.1 L98.0,325.0 L99.0,325.1 L100.0,325.1 L101.0,325.0 L102.0,325.1 L103.0,324.9 L104.0,324.7 L105.0,325.0 L106.0,324.6 L107.0,325.1 L108.0,325.0 L109.0,325.0 L110.0,324.7 L111.0,324.8 L112.0,324.6 L113.0,324.6 L114.0,325.1 L115.0,324.7 L116.0,325.0 L117.0,324.6 L118.0,324.7 L119.0,325.2 L120.0,325.2 L121.0,325.2 L122.0,324.8 L123.0,325.1 L124.0,325.2 L125.0,325.1 L126.0,324.8 L127.0,323.1 L128.0,324.8 L129.0,324.9 L130.0,325.2 L131.0,324.8 L132.0,324.8 L133.0,325.1 L134.0,325.1 L135.0,325.1 L136.0,324.6 L137.0,324.9 L138.0,324.7 L139.0,324.9 L140.0,324.8 L141.0,325.0 L142.0,324.6 L143.0,324.6 L144.0,324.6 L145.0,324.4 L146.0,325.0 L147.0,324.8 L148.0,324.8 L149.0,324.9 L150.0,324.9 L151.0,324.8 L152.0,324.9 L153.0,324.6 L154.0,324.8 L155.0,325.0 L156.0,324.7 L157.0,324.6 L158.0,324.8 L159.0,324.6 L160.0,324.8 L161.0,324.9 L162.0,323.9 L163.0,325.1 L164.0,324.6 L165.0,325.0 L166.0,324.8 L167.0,325.0 L168.0,325.0 L169.0,324.6 L170.0,323.2 L171.0,325.0 L172.0,324.6 L173.0,324.6 L174.0,324.5 L175.0,324.0 L176.0,324.6 L177.0,324.8 L178.0,324.8 L179.0,324.9 L180.0,324.8 L181.0,325.1 L182.0,324.7 L183.0,324.1 L184.0,325.0 L185.0,324.8 L186.0,325.1 L187.0,324.5 L188.0,324.7 L189.0,324.7 L190.0,324.7 L191.0,324.7 L192.0,324.9 L193.0,324.6 L194.0,324.7 L195.0,325.0 L196.0,324.9 L197.0,324.5 L198.0,325.0 L199.0,324.7 L200.0,324.9 L201.0,325.1 L202.0,322.9 L203.0,324.6 L204.0,324.8 L205.0,324.8 L206.0,324.7 L207.0,324.5 L208.0,324.5 L209.0,324.4 L210.0,324.5 L211.0,325.1 L212.0,324.7 L213.0,325.0 L214.0,324.7 L215.0,324.8 L216.0,324.6 L217.0,324.8 L218.0,324.7 L219.0,324.6 L220.0,324.8 L221.0,324.7 L222.0,325.0 L223.0,325.0 L224.0,325.0 L225.0,324.7 L226.0,324.7 L227.0,324.5 L228.0,324.8 L229.0,324.6 L230.0,324.8 L231.0,324.8 L232.0,324.9 L233.0,324.6 L234.0,324.7 L235.0,324.6 L236.0,324.5 L237.0,324.7 L238.0,324.9 L239.0,324.8 L240.0,324.9 L241.0,324.9 L242.0,324.7 L243.0,325.0 L244.0,324.9 L245.0,324.6 L246.0,324.8 L247.0,324.8 L248.0,324.7 L249.0,324.6 L250.0,324.9 L251.0,324.7 L252.0,324.2 L253.0,324.6 L254.0,324.4 L255.0,324.4 L256.0,324.4 L257.0,324.0 L258.0,323.8 L259.0,323.1 L260.0,323.7 L261.0,322.4 L262.0,322.9 L263.0,323.5 L264.0,323.8 L265.0,323.8 L266.0,323.6 L267.0,323.8 L268.0,323.7 L269.0,323.9 L270.0,323.7 L271.0,323.6 L272.0,324.1 L273.0,324.3 L274.0,324.1 L275.0,324.6 L276.0,324.5 L277.0,324.2 L278.0,325.5 L279.0,325.6 L280.0,325.6 L281.0,326.1 L282.0,326.1 L283.0,325.5 L284.0,326.8 L285.0,326.9 L286.0,326.7 L287.0,327.3 L288.0,327.3 L289.0,326.1 L290.0,327.6 L291.0,326.6 L292.0,328.0 L293.0,328.3 L294.0,328.7 L295.0,328.6 L296.0,329.4 L297.0,329.6 L298.0,329.5 L299.0,330.0 L300.0,329.9 L301.0,330.4 L302.0,330.3 L303.0,330.3 L304.0,330.4 L305.0,330.3 L306.0,329.2 L307.0,329.9 L308.0,330.2 L309.0,328.7 L310.0,329.7 L311.0,328.4 L312.0,329.3 L313.0,329.5 L314.0,329.7 L315.0,329.1 L316.0,329.5 L317.0,329.2 L318.0,327.9 L319.0,329.1 L320.0,328.9 L321.0,329.1 L322.0,328.7 L323.0,328.7 L324.0,328.4 L325.0,328.5 L326.0,328.6 L327.0,328.5 L328.0,328.0 L329.0,328.0 L330.0,326.3 L331.0,328.1 L332.0,327.2 L333.0,328.0 L334.0,327.8 L335.0,327.1 L336.0,328.0 L337.0,328.3 L338.0,327.6 L339.0,328.2 L340.0,328.3 L341.0,327.8 L342.0,327.8 L343.0,328.0 L344.0,328.4 L345.0,327.9 L346.0,326.4 L347.0,326.7 L348.0,327.8 L349.0,328.0 L350.0,328.2 L351.0,328.2 L352.0,328.1 L353.0,328.3 L354.0,328.1 L355.0,328.4 L356.0,328.3 L357.0,328.2 L358.0,327.9 L359.0,328.0 L360.0,328.3 L361.0,328.0 L362.0,328.1 L363.0,327.8 L364.0,327.8 L365.0,327.9 L366.0,328.2 L367.0,328.1 L368.0,328.4 L369.0,328.1 L370.0,328.3 L371.0,328.0 L372.0,327.9 L373.0,328.3 L374.0,328.3 L375.0,328.2 L376.0,328.0 L377.0,328.3 L378.0,328.0 L379.0,327.9 L380.0,328.2 L381.0,328.4 L382.0,328.2 L383.0,328.0 L384.0,328.0 L385.0,328.4 L386.0,327.9 L387.0,328.2 L388.0,328.3 L389.0,328.3 L390.0,328.4 L391.0,327.9 L392.0,328.0 L393.0,327.9 L394.0,328.3 L395.0,327.9 L396.0,326.7 L397.0,327.9 L398.0,327.6 L399.0,327.9 L400.0,328.3 L401.0,328.1 L402.0,328.3 L403.0,328.4 L404.0,327.0 L405.0,328.0 L406.0,328.2 L407.0,328.4 L408.0,328.2 L409.0,328.4 L410.0,327.8 L411.0,328.3 L412.0,327.9 L413.0,328.0 L414.0,328.3 L415.0,327.8 L416.0,327.7 L417.0,327.7 L418.0,328.1 L419.0,326.5 L420.0,328.1 L421.0,328.0 L422.0,328.2 L423.0,328.3 L424.0,327.8 L425.0,328.2 L426.0,328.4 L427.0,327.9 L428.0,327.9 L429.0,328.1 L430.0,328.0 L431.0,328.0 L432.0,327.9 L433.0,328.1 L434.0,328.2 L435.0,328.2 L436.0,328.2 L437.0,328.0 L438.0,327.9 L439.0,328.0 L440.0,328.3 L441.0,328.0 L442.0,328.2 L443.0,328.3 L444.0,328.1 L445.0,328.4 L446.0,328.1 L447.0,327.9 L448.0,327.9 L449.0,328.2 L450.0,328.3 L451.0,328.2 L452.0,328.3 L453.0,327.9 L454.0,328.1 L455.0,328.3 L456.0,328.1 L457.0,328.4 L458.0,327.8 L459.0,327.9 L460.0,327.9 L461.0,328.0 L462.0,328.3 L463.0,328.4 L464.0,328.2 L465.0,326.7 L466.0,328.0 L467.0,328.1 L468.0,328.3 L468.0,372.6 L467.0,372.5 L466.0,372.2 L465.0,372.3 L464.0,372.4 L463.0,372.1 L462.0,372.2 L461.0,372.4 L460.0,372.5 L459.0,372.5 L458.0,372.3 L457.0,372.6 L456.0,372.6 L455.0,372.6 L454.0,372.1 L453.0,372.2 L452.0,372.3 L451.0,372.1 L450.0,372.4 L449.0,372.0 L448.0,372.1 L447.0,372.2 L446.0,372.1 L445.0,372.6 L444.0,372.0 L443.0,372.0 L442.0,372.0 L441.0,373.6 L440.0,372.2 L439.0,372.0 L438.0,372.1 L437.0,373.2 L436.0,372.0 L435.0,372.0 L434.0,372.2 L433.0,372.3 L432.0,372.1 L431.0,372.1 L430.0,372.5 L429.0,372.0 L428.0,371.9 L427.0,372.1 L426.0,372.8 L425.0,373.4 L424.0,372.8 L423.0,372.3 L422.0,372.4 L421.0,371.9 L420.0,373.3 L419.0,374.1 L418.0,371.9 L417.0,372.4 L416.0,372.2 L415.0,372.4 L414.0,372.0 L413.0,371.8 L412.0,371.9 L411.0,372.0 L410.0,372.0 L409.0,372.4 L408.0,372.3 L407.0,373.0 L406.0,372.2 L405.0,372.2 L404.0,372.0 L403.0,372.0 L402.0,373.8 L401.0,372.0 L400.0,372.1 L399.0,372.3 L398.0,371.9 L397.0,372.2 L396.0,372.1 L395.0,372.3 L394.0,372.3 L393.0,371.8 L392.0,371.9 L391.0,372.1 L390.0,372.2 L389.0,372.6 L388.0,371.9 L387.0,371.8 L386.0,371.9 L385.0,371.8 L384.0,372.1 L383.0,372.0 L382.0,372.0 L381.0,372.2 L380.0,372.2 L379.0,372.1 L378.0,371.9 L377.0,372.1 L376.0,372.3 L375.0,371.8 L374.0,372.3 L373.0,372.1 L372.0,372.0 L371.0,373.3 L370.0,372.2 L369.0,371.9 L368.0,372.2 L367.0,371.8 L366.0,371.9 L365.0,372.1 L364.0,371.9 L363.0,371.9 L362.0,371.7 L361.0,372.0 L360.0,372.5 L359.0,372.2 L358.0,372.2 L357.0,371.7 L356.0,371.8 L355.0,371.7 L354.0,371.9 L353.0,372.0 L352.0,371.9 L351.0,371.8 L350.0,372.2 L349.0,371.8 L348.0,372.0 L347.0,371.7 L346.0,371.9 L345.0,371.9 L344.0,372.0 L343.0,371.9 L342.0,371.7 L341.0,371.9 L340.0,371.7 L339.0,373.3 L338.0,371.7 L337.0,371.6 L336.0,371.7 L335.0,371.7 L334.0,371.7 L333.0,371.7 L332.0,371.7 L331.0,373.5 L330.0,371.8 L329.0,371.7 L328.0,372.2 L327.0,372.5 L326.0,372.3 L325.0,372.1 L324.0,372.4 L323.0,372.1 L322.0,372.3 L321.0,372.4 L320.0,372.6 L319.0,372.3 L318.0,372.5 L317.0,372.9 L316.0,372.9 L315.0,372.5 L314.0,372.7 L313.0,373.1 L312.0,372.9 L311.0,373.2 L310.0,372.8 L309.0,372.9 L308.0,373.0 L307.0,374.2 L306.0,373.4 L305.0,373.2 L304.0,373.3 L303.0,373.4 L302.0,374.0 L301.0,373.5 L300.0,373.4 L299.0,373.4 L298.0,373.9 L297.0,373.9 L296.0,374.0 L295.0,374.0 L294.0,374.1 L293.0,374.2 L292.0,374.3 L291.0,374.0 L290.0,374.3 L289.0,374.3 L288.0,374.2 L287.0,375.8 L286.0,374.4 L285.0,374.5 L284.0,374.1 L283.0,374.2 L282.0,374.3 L281.0,374.9 L280.0,374.4 L279.0,374.8 L278.0,374.5 L277.0,374.8 L276.0,375.1 L275.0,374.7 L274.0,374.9 L273.0,375.4 L272.0,375.4 L271.0,375.6 L270.0,375.7 L269.0,376.1 L268.0,375.8 L267.0,376.3 L266.0,376.1 L265.0,376.8 L264.0,376.7 L263.0,376.8 L262.0,376.9 L261.0,376.8 L260.0,376.8 L259.0,376.8 L258.0,376.7 L257.0,376.8 L256.0,378.9 L255.0,376.9 L254.0,377.0 L253.0,377.1 L252.0,377.2 L251.0,376.9 L250.0,376.8 L249.0,377.2 L248.0,377.1 L247.0,376.7 L246.0,376.8 L245.0,377.0 L244.0,376.9 L243.0,376.8 L242.0,377.0 L241.0,378.8 L240.0,377.1 L239.0,376.8 L238.0,377.3 L237.0,377.8 L236.0,377.0 L235.0,377.2 L234.0,377.3 L233.0,376.7 L232.0,377.0 L231.0,377.1 L230.0,377.0 L229.0,377.1 L228.0,376.9 L227.0,377.0 L226.0,377.0 L225.0,378.1 L224.0,377.5 L223.0,377.2 L222.0,377.8 L221.0,377.0 L220.0,377.1 L219.0,377.1 L218.0,376.9 L217.0,376.8 L216.0,376.8 L215.0,377.2 L214.0,377.3 L213.0,377.2 L212.0,377.1 L211.0,378.6 L210.0,376.9 L209.0,376.8 L208.0,378.9 L207.0,377.3 L206.0,377.0 L205.0,377.6 L204.0,377.8 L203.0,377.2 L202.0,376.7 L201.0,377.0 L200.0,376.7 L199.0,377.2 L198.0,377.0 L197.0,376.8 L196.0,377.0 L195.0,376.8 L194.0,377.9 L193.0,377.0 L192.0,377.1 L191.0,377.0 L190.0,377.2 L189.0,376.8 L188.0,378.0 L187.0,377.0 L186.0,377.2 L185.0,377.1 L184.0,377.1 L183.0,377.1 L182.0,377.1 L181.0,377.8 L180.0,377.0 L179.0,376.8 L178.0,376.9 L177.0,377.2 L176.0,376.9 L175.0,376.7 L174.0,376.9 L173.0,377.1 L172.0,376.9 L171.0,376.8 L170.0,377.2 L169.0,376.9 L168.0,376.9 L167.0,377.1 L166.0,377.2 L165.0,376.7 L164.0,377.1 L163.0,377.0 L162.0,376.8 L161.0,376.8 L160.0,377.3 L159.0,377.1 L158.0,377.2 L157.0,377.0 L156.0,377.2 L155.0,376.7 L154.0,377.0 L153.0,377.0 L152.0,377.3 L151.0,377.3 L150.0,377.2 L149.0,376.7 L148.0,377.2 L147.0,377.1 L146.0,378.0 L145.0,378.0 L144.0,377.0 L143.0,377.8 L142.0,377.0 L141.0,377.0 L140.0,377.0 L139.0,376.8 L138.0,377.1 L137.0,376.7 L136.0,377.0 L135.0,376.9 L134.0,376.8 L133.0,377.1 L132.0,377.3 L131.0,377.0 L130.0,376.8 L129.0,377.0 L128.0,376.8 L127.0,376.9 L126.0,376.8 L125.0,377.3 L124.0,376.7 L123.0,377.0 L122.0,377.0 L121.0,377.5 L120.0,377.2 L119.0,377.1 L118.0,376.7 L117.0,378.1 L116.0,376.7 L115.0,377.2 L114.0,376.9 L113.0,376.9 L112.0,376.9 L111.0,376.8 L110.0,377.3 L109.0,377.2 L108.0,377.2 L107.0,377.1 L106.0,378.1 L105.0,376.7 L104.0,377.1 L103.0,376.8 L102.0,376.8 L101.0,377.2 L100.0,376.8 L99.0,377.2 L98.0,377.0 L97.0,376.8 L96.0,377.1 L95.0,377.2 L94.0,377.3 L93.0,376.8 L92.0,376.9 L91.0,377.0 L90.0,377.0 L89.0,377.3 L88.0,377.1 L87.0,376.9 L86.0,377.0 L85.0,376.9 L84.0,376.8 L83.0,377.3 L82.0,377.3 L81.0,377.0 L80.0,377.2 L79.0,377.2 L78.0,376.8 L77.0,376.7 L76.0,377.1 L75.0,376.8 L74.0,376.8 L73.0,377.0 L72.0,377.2 L71.0,376.7 L70.0,376.9 L69.0,377.0 L68.0,376.8 L67.0,376.8 L66.0,376.8 L65.0,376.9 L64.0,377.2 L63.0,377.3 L62.0,376.7 L61.0,376.9 L60.0,376.9 L59.0,376.7 L58.0,377.0 L57.0,377.2 L56.0,377.0Z" fill="#ff0000"/>
</svg>
<rect x="56.5" y="291.5" width="412" height="104" fill="none" stroke="#5a5a5a" stroke-width="1"/>
<rect x="536" y="27" width="412" height="104" fill="#000"/>
<line x1="577.5" y1="27" x2="577.5" y2="131" stroke="#464646" stroke-width="1" stroke-dasharray="1 1"/><line x1="618.5" y1="27" x2="618.5" y2="131" stroke="#464646" stroke-width="1" stroke-dasharray="1 1"/><line x1="660.5" y1="27" x2="660.5" y2="131" stroke="#464646" stroke-width="1" stroke-dasharray="1 1"/><line x1="701.5" y1="27" x2="701.5" y2="131" stroke="#464646" stroke-width="1" stroke-dasharray="1 1"/><line x1="742.5" y1="27" x2="742.5" y2="131" stroke="#5a5a5a" stroke-width="1"/><line x1="783.5" y1="27" x2="783.5" y2="131" stroke="#464646" stroke-width="1" stroke-dasharray="1 1"/><line x1="824.5" y1="27" x2="824.5" y2="131" stroke="#464646" stroke-width="1" stroke-dasharray="1 1"/><line x1="866.5" y1="27" x2="866.5" y2="131" stroke="#464646" stroke-width="1" stroke-dasharray="1 1"/><line x1="907.5" y1="27" x2="907.5" y2="131" stroke="#464646" stroke-width="1" stroke-dasharray="1 1"/><line x1="536" y1="40.5" x2="948" y2="40.5" stroke="#464646" stroke-width="1" stroke-dasharray="1 1"/><line x1="536" y1="53.5" x2="948" y2="53.5" stroke="#464646" stroke-width="1" stroke-dasharray="1 1"/><line x1="536" y1="66.5" x2="948" y2="66.5" stroke="#464646" stroke-width="1" stroke-dasharray="1 1"/><line x1="536" y1="79.5" x2="948" y2="79.5" stroke="#4e4e4e" stroke-width="1"/><line x1="544.5" y1="78.0" x2="544.5" y2="81.0" stroke="#5a5a5a" stroke-width="1"/><line x1="552.5" y1="78.0" x2="552.5" y2="81.0" stroke="#5a5a5a" stroke-width="1"/><line x1="561.5" y1="78.0" x2="561.5" y2="81.0" stroke="#5a5a5a" stroke-width="1"/><line x1="569.5" y1="78.0" x2="569.5" y2="81.0" stroke="#5a5a5a" stroke-width="1"/><line x1="577.5" y1="78.0" x2="577.5" y2="81.0" stroke="#5a5a5a" stroke-width="1"/><line x1="585.5" y1="78.0" x2="585.5" y2="81.0" stroke="#5a5a5a" stroke-width="1"/><line x1="594.5" y1="78.0" x2="594.5" y2="81.0" stroke="#5a5a5a" stroke-width="1"/><line x1="602.5" y1="78.0" x2="602.5" y2="81.0" stroke="#5a5a5a" stroke-width="1"/><line x1="610.5" y1="78.0" x2="610.5" y2="81.0" stroke="#5a5a5a" stroke-width="1"/><line x1="618.5" y1="78.0" x2="618.5" y2="81.0" stroke="#5a5a5a" stroke-width="1"/><line x1="627.5" y1="78.0" x2="627.5" y2="81.0" stroke="#5a5a5a" stroke-width="1"/><line x1="635.5" y1="78.0" x2="635.5" y2="81.0" stroke="#5a5a5a" stroke-width="1"/><line x1="643.5" y1="78.0" x2="643.5" y2="81.0" stroke="#5a5a5a" stroke-width="1"/><line x1="651.5" y1="78.0" x2="651.5" y2="81.0" stroke="#5a5a5a" stroke-width="1"/><line x1="660.5" y1="78.0" x2="660.5" y2="81.0" stroke="#5a5a5a" stroke-width="1"/><line x1="668.5" y1="78.0" x2="668.5" y2="81.0" stroke="#5a5a5a" stroke-width="1"/><line x1="676.5" y1="78.0" x2="676.5" y2="81.0" stroke="#5a5a5a" stroke-width="1"/><line x1="684.5" y1="78.0" x2="684.5" y2="81.0" stroke="#5a5a5a" stroke-width="1"/><line x1="693.5" y1="78.0" x2="693.5" y2="81.0" stroke="#5a5a5a" stroke-width="1"/><line x1="701.5" y1="78.0" x2="701.5" y2="81.0" stroke="#5a5a5a" stroke-width="1"/><line x1="709.5" y1="78.0" x2="709.5" y2="81.0" stroke="#5a5a5a" stroke-width="1"/><line x1="717.5" y1="78.0" x2="717.5" y2="81.0" stroke="#5a5a5a" stroke-width="1"/><line x1="726.5" y1="78.0" x2="726.5" y2="81.0" stroke="#5a5a5a" stroke-width="1"/><line x1="734.5" y1="78.0" x2="734.5" y2="81.0" stroke="#5a5a5a" stroke-width="1"/><line x1="742.5" y1="78.0" x2="742.5" y2="81.0" stroke="#5a5a5a" stroke-width="1"/><line x1="750.5" y1="78.0" x2="750.5" y2="81.0" stroke="#5a5a5a" stroke-width="1"/><line x1="758.5" y1="78.0" x2="758.5" y2="81.0" stroke="#5a5a5a" stroke-width="1"/><line x1="767.5" y1="78.0" x2="767.5" y2="81.0" stroke="#5a5a5a" stroke-width="1"/><line x1="775.5" y1="78.0" x2="775.5" y2="81.0" stroke="#5a5a5a" stroke-width="1"/><line x1="783.5" y1="78.0" x2="783.5" y2="81.0" stroke="#5a5a5a" stroke-width="1"/><line x1="791.5" y1="78.0" x2="791.5" y2="81.0" stroke="#5a5a5a" stroke-width="1"/><line x1="800.5" y1="78.0" x2="800.5" y2="81.0" stroke="#5a5a5a" stroke-width="1"/><line x1="808.5" y1="78.0" x2="808.5" y2="81.0" stroke="#5a5a5a" stroke-width="1"/><line x1="816.5" y1="78.0" x2="816.5" y2="81.0" stroke="#5a5a5a" stroke-width="1"/><line x1="824.5" y1="78.0" x2="824.5" y2="81.0" stroke="#5a5a5a" stroke-width="1"/><line x1="833.5" y1="78.0" x2="833.5" y2="81.0" stroke="#5a5a5a" stroke-width="1"/><line x1="841.5" y1="78.0" x2="841.5" y2="81.0" stroke="#5a5a5a" stroke-width="1"/><line x1="849.5" y1="78.0" x2="849.5" y2="81.0" stroke="#5a5a5a" stroke-width="1"/><line x1="857.5" y1="78.0" x2="857.5" y2="81.0" stroke="#5a5a5a" stroke-width="1"/><line x1="866.5" y1="78.0" x2="866.5" y2="81.0" stroke="#5a5a5a" stroke-width="1"/><line x1="874.5" y1="78.0" x2="874.5" y2="81.0" stroke="#5a5a5a" stroke-width="1"/><line x1="882.5" y1="78.0" x2="882.5" y2="81.0" stroke="#5a5a5a" stroke-width="1"/><line x1="890.5" y1="78.0" x2="890.5" y2="81.0" stroke="#5a5a5a" stroke-width="1"/><line x1="899.5" y1="78.0" x2="899.5" y2="81.0" stroke="#5a5a5a" stroke-width="1"/><line x1="907.5" y1="78.0" x2="907.5" y2="81.0" stroke="#5a5a5a" stroke-width="1"/><line x1="915.5" y1="78.0" x2="915.5" y2="81.0" stroke="#5a5a5a" stroke-width="1"/><line x1="923.5" y1="78.0" x2="923.5" y2="81.0" stroke="#5a5a5a" stroke-width="1"/><line x1="932.5" y1="78.0" x2="932.5" y2="81.0" stroke="#5a5a5a" stroke-width="1"/><line x1="940.5" y1="78.0" x2="940.5" y2="81.0" stroke="#5a5a5a" stroke-width="1"/><line x1="536" y1="92.5" x2="948" y2="92.5" stroke="#464646" stroke-width="1" stroke-dasharray="1 1"/><line x1="536" y1="105.5" x2="948" y2="105.5" stroke="#464646" stroke-width="1" stroke-dasharray="1 1"/><line x1="536" y1="118.5" x2="948" y2="118.5" stroke="#464646" stroke-width="1" stroke-dasharray="1 1"/><rect x="544" y="47.0" width="1" height="1" fill="#4a4a4a"/><rect x="552" y="47.0" width="1" height="1" fill="#4a4a4a"/><rect x="561" y="47.0" width="1" height="1" fill="#4a4a4a"/><rect x="569" y="47.0" width="1" height="1" fill="#4a4a4a"/><rect x="585" y="47.0" width="1" height="1" fill="#4a4a4a"/><rect x="594" y="47.0" width="1" height="1" fill="#4a4a4a"/><rect x="602" y="47.0" width="1" height="1" fill="#4a4a4a"/><rect x="610" y="47.0" width="1" height="1" fill="#4a4a4a"/><rect x="627" y="47.0" width="1" height="1" fill="#4a4a4a"/><rect x="635" y="47.0" width="1" height="1" fill="#4a4a4a"/><rect x="643" y="47.0" width="1" height="1" fill="#4a4a4a"/><rect x="651" y="47.0" width="1" height="1" fill="#4a4a4a"/><rect x="668" y="47.0" width="1" height="1" fill="#4a4a4a"/><rect x="676" y="47.0" width="1" height="1" fill="#4a4a4a"/><rect x="684" y="47.0" width="1" height="1" fill="#4a4a4a"/><rect x="693" y="47.0" width="1" height="1" fill="#4a4a4a"/><rect x="709" y="47.0" width="1" height="1" fill="#4a4a4a"/><rect x="717" y="47.0" width="1" height="1" fill="#4a4a4a"/><rect x="726" y="47.0" width="1" height="1" fill="#4a4a4a"/><rect x="734" y="47.0" width="1" height="1" fill="#4a4a4a"/><rect x="750" y="47.0" width="1" height="1" fill="#4a4a4a"/><rect x="758" y="47.0" width="1" height="1" fill="#4a4a4a"/><rect x="767" y="47.0" width="1" height="1" fill="#4a4a4a"/><rect x="775" y="47.0" width="1" height="1" fill="#4a4a4a"/><rect x="791" y="47.0" width="1" height="1" fill="#4a4a4a"/><rect x="800" y="47.0" width="1" height="1" fill="#4a4a4a"/><rect x="808" y="47.0" width="1" height="1" fill="#4a4a4a"/><rect x="816" y="47.0" width="1" height="1" fill="#4a4a4a"/><rect x="833" y="47.0" width="1" height="1" fill="#4a4a4a"/><rect x="841" y="47.0" width="1" height="1" fill="#4a4a4a"/><rect x="849" y="47.0" width="1" height="1" fill="#4a4a4a"/><rect x="857" y="47.0" width="1" height="1" fill="#4a4a4a"/><rect x="874" y="47.0" width="1" height="1" fill="#4a4a4a"/><rect x="882" y="47.0" width="1" height="1" fill="#4a4a4a"/><rect x="890" y="47.0" width="1" height="1" fill="#4a4a4a"/><rect x="899" y="47.0" width="1" height="1" fill="#4a4a4a"/><rect x="915" y="47.0" width="1" height="1" fill="#4a4a4a"/><rect x="923" y="47.0" width="1" height="1" fill="#4a4a4a"/><rect x="932" y="47.0" width="1" height="1" fill="#4a4a4a"/><rect x="940" y="47.0" width="1" height="1" fill="#4a4a4a"/><rect x="544" y="112.0" width="1" height="1" fill="#4a4a4a"/><rect x="552" y="112.0" width="1" height="1" fill="#4a4a4a"/><rect x="561" y="112.0" width="1" height="1" fill="#4a4a4a"/><rect x="569" y="112.0" width="1" height="1" fill="#4a4a4a"/><rect x="585" y="112.0" width="1" height="1" fill="#4a4a4a"/><rect x="594" y="112.0" width="1" height="1" fill="#4a4a4a"/><rect x="602" y="112.0" width="1" height="1" fill="#4a4a4a"/><rect x="610" y="112.0" width="1" height="1" fill="#4a4a4a"/><rect x="627" y="112.0" width="1" height="1" fill="#4a4a4a"/><rect x="635" y="112.0" width="1" height="1" fill="#4a4a4a"/><rect x="643" y="112.0" width="1" height="1" fill="#4a4a4a"/><rect x="651" y="112.0" width="1" height="1" fill="#4a4a4a"/><rect x="668" y="112.0" width="1" height="1" fill="#4a4a4a"/><rect x="676" y="112.0" width="1" height="1" fill="#4a4a4a"/><rect x="684" y="112.0" width="1" height="1" fill="#4a4a4a"/><rect x="693" y="112.0" width="1" height="1" fill="#4a4a4a"/><rect x="709" y="112.0" width="1" height="1" fill="#4a4a4a"/><rect x="717" y="112.0" width="1" height="1" fill="#4a4a4a"/><rect x="726" y="112.0" width="1" height="1" fill="#4a4a4a"/><rect x="734" y="112.0" width="1" height="1" fill="#4a4a4a"/><rect x="750" y="112.0" width="1" height="1" fill="#4a4a4a"/><rect x="758" y="112.0" width="1" height="1" fill="#4a4a4a"/><rect x="767" y="112.0" width="1" height="1" fill="#4a4a4a"/><rect x="775" y="112.0" width="1" height="1" fill="#4a4a4a"/><rect x="791" y="112.0" width="1" height="1" fill="#4a4a4a"/><rect x="800" y="112.0" width="1" height="1" fill="#4a4a4a"/><rect x="808" y="112.0" width="1" height="1" fill="#4a4a4a"/><rect x="816" y="112.0" width="1" height="1" fill="#4a4a4a"/><rect x="833" y="112.0" width="1" height="1" fill="#4a4a4a"/><rect x="841" y="112.0" width="1" height="1" fill="#4a4a4a"/><rect x="849" y="112.0" width="1" height="1" fill="#4a4a4a"/><rect x="857" y="112.0" width="1" height="1" fill="#4a4a4a"/><rect x="874" y="112.0" width="1" height="1" fill="#4a4a4a"/><rect x="882" y="112.0" width="1" height="1" fill="#4a4a4a"/><rect x="890" y="112.0" width="1" height="1" fill="#4a4a4a"/><rect x="899" y="112.0" width="1" height="1" fill="#4a4a4a"/><rect x="915" y="112.0" width="1" height="1" fill="#4a4a4a"/><rect x="923" y="112.0" width="1" height="1" fill="#4a4a4a"/><rect x="932" y="112.0" width="1" height="1" fill="#4a4a4a"/><rect x="940" y="112.0" width="1" height="1" fill="#4a4a4a"/>
<rect x="536" y="156" width="412" height="109" fill="#000"/>
<line x1="577.5" y1="156" x2="577.5" y2="265" stroke="#464646" stroke-width="1" stroke-dasharray="1 1"/><line x1="618.5" y1="156" x2="618.5" y2="265" stroke="#464646" stroke-width="1" stroke-dasharray="1 1"/><line x1="660.5" y1="156" x2="660.5" y2="265" stroke="#464646" stroke-width="1" stroke-dasharray="1 1"/><line x1="701.5" y1="156" x2="701.5" y2="265" stroke="#464646" stroke-width="1" stroke-dasharray="1 1"/><line x1="742.5" y1="156" x2="742.5" y2="265" stroke="#5a5a5a" stroke-width="1"/><line x1="783.5" y1="156" x2="783.5" y2="265" stroke="#464646" stroke-width="1" stroke-dasharray="1 1"/><line x1="824.5" y1="156" x2="824.5" y2="265" stroke="#464646" stroke-width="1" stroke-dasharray="1 1"/><line x1="866.5" y1="156" x2="866.5" y2="265" stroke="#464646" stroke-width="1" stroke-dasharray="1 1"/><line x1="907.5" y1="156" x2="907.5" y2="265" stroke="#464646" stroke-width="1" stroke-dasharray="1 1"/><line x1="536" y1="170.5" x2="948" y2="170.5" stroke="#464646" stroke-width="1" stroke-dasharray="1 1"/><line x1="536" y1="183.5" x2="948" y2="183.5" stroke="#464646" stroke-width="1" stroke-dasharray="1 1"/><line x1="536" y1="197.5" x2="948" y2="197.5" stroke="#464646" stroke-width="1" stroke-dasharray="1 1"/><line x1="536" y1="211.5" x2="948" y2="211.5" stroke="#4e4e4e" stroke-width="1"/><line x1="544.5" y1="210.0" x2="544.5" y2="213.0" stroke="#5a5a5a" stroke-width="1"/><line x1="552.5" y1="210.0" x2="552.5" y2="213.0" stroke="#5a5a5a" stroke-width="1"/><line x1="561.5" y1="210.0" x2="561.5" y2="213.0" stroke="#5a5a5a" stroke-width="1"/><line x1="569.5" y1="210.0" x2="569.5" y2="213.0" stroke="#5a5a5a" stroke-width="1"/><line x1="577.5" y1="210.0" x2="577.5" y2="213.0" stroke="#5a5a5a" stroke-width="1"/><line x1="585.5" y1="210.0" x2="585.5" y2="213.0" stroke="#5a5a5a" stroke-width="1"/><line x1="594.5" y1="210.0" x2="594.5" y2="213.0" stroke="#5a5a5a" stroke-width="1"/><line x1="602.5" y1="210.0" x2="602.5" y2="213.0" stroke="#5a5a5a" stroke-width="1"/><line x1="610.5" y1="210.0" x2="610.5" y2="213.0" stroke="#5a5a5a" stroke-width="1"/><line x1="618.5" y1="210.0" x2="618.5" y2="213.0" stroke="#5a5a5a" stroke-width="1"/><line x1="627.5" y1="210.0" x2="627.5" y2="213.0" stroke="#5a5a5a" stroke-width="1"/><line x1="635.5" y1="210.0" x2="635.5" y2="213.0" stroke="#5a5a5a" stroke-width="1"/><line x1="643.5" y1="210.0" x2="643.5" y2="213.0" stroke="#5a5a5a" stroke-width="1"/><line x1="651.5" y1="210.0" x2="651.5" y2="213.0" stroke="#5a5a5a" stroke-width="1"/><line x1="660.5" y1="210.0" x2="660.5" y2="213.0" stroke="#5a5a5a" stroke-width="1"/><line x1="668.5" y1="210.0" x2="668.5" y2="213.0" stroke="#5a5a5a" stroke-width="1"/><line x1="676.5" y1="210.0" x2="676.5" y2="213.0" stroke="#5a5a5a" stroke-width="1"/><line x1="684.5" y1="210.0" x2="684.5" y2="213.0" stroke="#5a5a5a" stroke-width="1"/><line x1="693.5" y1="210.0" x2="693.5" y2="213.0" stroke="#5a5a5a" stroke-width="1"/><line x1="701.5" y1="210.0" x2="701.5" y2="213.0" stroke="#5a5a5a" stroke-width="1"/><line x1="709.5" y1="210.0" x2="709.5" y2="213.0" stroke="#5a5a5a" stroke-width="1"/><line x1="717.5" y1="210.0" x2="717.5" y2="213.0" stroke="#5a5a5a" stroke-width="1"/><line x1="726.5" y1="210.0" x2="726.5" y2="213.0" stroke="#5a5a5a" stroke-width="1"/><line x1="734.5" y1="210.0" x2="734.5" y2="213.0" stroke="#5a5a5a" stroke-width="1"/><line x1="742.5" y1="210.0" x2="742.5" y2="213.0" stroke="#5a5a5a" stroke-width="1"/><line x1="750.5" y1="210.0" x2="750.5" y2="213.0" stroke="#5a5a5a" stroke-width="1"/><line x1="758.5" y1="210.0" x2="758.5" y2="213.0" stroke="#5a5a5a" stroke-width="1"/><line x1="767.5" y1="210.0" x2="767.5" y2="213.0" stroke="#5a5a5a" stroke-width="1"/><line x1="775.5" y1="210.0" x2="775.5" y2="213.0" stroke="#5a5a5a" stroke-width="1"/><line x1="783.5" y1="210.0" x2="783.5" y2="213.0" stroke="#5a5a5a" stroke-width="1"/><line x1="791.5" y1="210.0" x2="791.5" y2="213.0" stroke="#5a5a5a" stroke-width="1"/><line x1="800.5" y1="210.0" x2="800.5" y2="213.0" stroke="#5a5a5a" stroke-width="1"/><line x1="808.5" y1="210.0" x2="808.5" y2="213.0" stroke="#5a5a5a" stroke-width="1"/><line x1="816.5" y1="210.0" x2="816.5" y2="213.0" stroke="#5a5a5a" stroke-width="1"/><line x1="824.5" y1="210.0" x2="824.5" y2="213.0" stroke="#5a5a5a" stroke-width="1"/><line x1="833.5" y1="210.0" x2="833.5" y2="213.0" stroke="#5a5a5a" stroke-width="1"/><line x1="841.5" y1="210.0" x2="841.5" y2="213.0" stroke="#5a5a5a" stroke-width="1"/><line x1="849.5" y1="210.0" x2="849.5" y2="213.0" stroke="#5a5a5a" stroke-width="1"/><line x1="857.5" y1="210.0" x2="857.5" y2="213.0" stroke="#5a5a5a" stroke-width="1"/><line x1="866.5" y1="210.0" x2="866.5" y2="213.0" stroke="#5a5a5a" stroke-width="1"/><line x1="874.5" y1="210.0" x2="874.5" y2="213.0" stroke="#5a5a5a" stroke-width="1"/><line x1="882.5" y1="210.0" x2="882.5" y2="213.0" stroke="#5a5a5a" stroke-width="1"/><line x1="890.5" y1="210.0" x2="890.5" y2="213.0" stroke="#5a5a5a" stroke-width="1"/><line x1="899.5" y1="210.0" x2="899.5" y2="213.0" stroke="#5a5a5a" stroke-width="1"/><line x1="907.5" y1="210.0" x2="907.5" y2="213.0" stroke="#5a5a5a" stroke-width="1"/><line x1="915.5" y1="210.0" x2="915.5" y2="213.0" stroke="#5a5a5a" stroke-width="1"/><line x1="923.5" y1="210.0" x2="923.5" y2="213.0" stroke="#5a5a5a" stroke-width="1"/><line x1="932.5" y1="210.0" x2="932.5" y2="213.0" stroke="#5a5a5a" stroke-width="1"/><line x1="940.5" y1="210.0" x2="940.5" y2="213.0" stroke="#5a5a5a" stroke-width="1"/><line x1="536" y1="224.5" x2="948" y2="224.5" stroke="#464646" stroke-width="1" stroke-dasharray="1 1"/><line x1="536" y1="238.5" x2="948" y2="238.5" stroke="#464646" stroke-width="1" stroke-dasharray="1 1"/><line x1="536" y1="251.5" x2="948" y2="251.5" stroke="#464646" stroke-width="1" stroke-dasharray="1 1"/><rect x="544" y="176.0" width="1" height="1" fill="#4a4a4a"/><rect x="552" y="176.0" width="1" height="1" fill="#4a4a4a"/><rect x="561" y="176.0" width="1" height="1" fill="#4a4a4a"/><rect x="569" y="176.0" width="1" height="1" fill="#4a4a4a"/><rect x="585" y="176.0" width="1" height="1" fill="#4a4a4a"/><rect x="594" y="176.0" width="1" height="1" fill="#4a4a4a"/><rect x="602" y="176.0" width="1" height="1" fill="#4a4a4a"/><rect x="610" y="176.0" width="1" height="1" fill="#4a4a4a"/><rect x="627" y="176.0" width="1" height="1" fill="#4a4a4a"/><rect x="635" y="176.0" width="1" height="1" fill="#4a4a4a"/><rect x="643" y="176.0" width="1" height="1" fill="#4a4a4a"/><rect x="651" y="176.0" width="1" height="1" fill="#4a4a4a"/><rect x="668" y="176.0" width="1" height="1" fill="#4a4a4a"/><rect x="676" y="176.0" width="1" height="1" fill="#4a4a4a"/><rect x="684" y="176.0" width="1" height="1" fill="#4a4a4a"/><rect x="693" y="176.0" width="1" height="1" fill="#4a4a4a"/><rect x="709" y="176.0" width="1" height="1" fill="#4a4a4a"/><rect x="717" y="176.0" width="1" height="1" fill="#4a4a4a"/><rect x="726" y="176.0" width="1" height="1" fill="#4a4a4a"/><rect x="734" y="176.0" width="1" height="1" fill="#4a4a4a"/><rect x="750" y="176.0" width="1" height="1" fill="#4a4a4a"/><rect x="758" y="176.0" width="1" height="1" fill="#4a4a4a"/><rect x="767" y="176.0" width="1" height="1" fill="#4a4a4a"/><rect x="775" y="176.0" width="1" height="1" fill="#4a4a4a"/><rect x="791" y="176.0" width="1" height="1" fill="#4a4a4a"/><rect x="800" y="176.0" width="1" height="1" fill="#4a4a4a"/><rect x="808" y="176.0" width="1" height="1" fill="#4a4a4a"/><rect x="816" y="176.0" width="1" height="1" fill="#4a4a4a"/><rect x="833" y="176.0" width="1" height="1" fill="#4a4a4a"/><rect x="841" y="176.0" width="1" height="1" fill="#4a4a4a"/><rect x="849" y="176.0" width="1" height="1" fill="#4a4a4a"/><rect x="857" y="176.0" width="1" height="1" fill="#4a4a4a"/><rect x="874" y="176.0" width="1" height="1" fill="#4a4a4a"/><rect x="882" y="176.0" width="1" height="1" fill="#4a4a4a"/><rect x="890" y="176.0" width="1" height="1" fill="#4a4a4a"/><rect x="899" y="176.0" width="1" height="1" fill="#4a4a4a"/><rect x="915" y="176.0" width="1" height="1" fill="#4a4a4a"/><rect x="923" y="176.0" width="1" height="1" fill="#4a4a4a"/><rect x="932" y="176.0" width="1" height="1" fill="#4a4a4a"/><rect x="940" y="176.0" width="1" height="1" fill="#4a4a4a"/><rect x="544" y="245.0" width="1" height="1" fill="#4a4a4a"/><rect x="552" y="245.0" width="1" height="1" fill="#4a4a4a"/><rect x="561" y="245.0" width="1" height="1" fill="#4a4a4a"/><rect x="569" y="245.0" width="1" height="1" fill="#4a4a4a"/><rect x="585" y="245.0" width="1" height="1" fill="#4a4a4a"/><rect x="594" y="245.0" width="1" height="1" fill="#4a4a4a"/><rect x="602" y="245.0" width="1" height="1" fill="#4a4a4a"/><rect x="610" y="245.0" width="1" height="1" fill="#4a4a4a"/><rect x="627" y="245.0" width="1" height="1" fill="#4a4a4a"/><rect x="635" y="245.0" width="1" height="1" fill="#4a4a4a"/><rect x="643" y="245.0" width="1" height="1" fill="#4a4a4a"/><rect x="651" y="245.0" width="1" height="1" fill="#4a4a4a"/><rect x="668" y="245.0" width="1" height="1" fill="#4a4a4a"/><rect x="676" y="245.0" width="1" height="1" fill="#4a4a4a"/><rect x="684" y="245.0" width="1" height="1" fill="#4a4a4a"/><rect x="693" y="245.0" width="1" height="1" fill="#4a4a4a"/><rect x="709" y="245.0" width="1" height="1" fill="#4a4a4a"/><rect x="717" y="245.0" width="1" height="1" fill="#4a4a4a"/><rect x="726" y="245.0" width="1" height="1" fill="#4a4a4a"/><rect x="734" y="245.0" width="1" height="1" fill="#4a4a4a"/><rect x="750" y="245.0" width="1" height="1" fill="#4a4a4a"/><rect x="758" y="245.0" width="1" height="1" fill="#4a4a4a"/><rect x="767" y="245.0" width="1" height="1" fill="#4a4a4a"/><rect x="775" y="245.0" width="1" height="1" fill="#4a4a4a"/><rect x="791" y="245.0" width="1" height="1" fill="#4a4a4a"/><rect x="800" y="245.0" width="1" height="1" fill="#4a4a4a"/><rect x="808" y="245.0" width="1" height="1" fill="#4a4a4a"/><rect x="816" y="245.0" width="1" height="1" fill="#4a4a4a"/><rect x="833" y="245.0" width="1" height="1" fill="#4a4a4a"/><rect x="841" y="245.0" width="1" height="1" fill="#4a4a4a"/><rect x="849" y="245.0" width="1" height="1" fill="#4a4a4a"/><rect x="857" y="245.0" width="1" height="1" fill="#4a4a4a"/><rect x="874" y="245.0" width="1" height="1" fill="#4a4a4a"/><rect x="882" y="245.0" width="1" height="1" fill="#4a4a4a"/><rect x="890" y="245.0" width="1" height="1" fill="#4a4a4a"/><rect x="899" y="245.0" width="1" height="1" fill="#4a4a4a"/><rect x="915" y="245.0" width="1" height="1" fill="#4a4a4a"/><rect x="923" y="245.0" width="1" height="1" fill="#4a4a4a"/><rect x="932" y="245.0" width="1" height="1" fill="#4a4a4a"/><rect x="940" y="245.0" width="1" height="1" fill="#4a4a4a"/>
<rect x="536" y="291" width="412" height="104" fill="#000"/>
<line x1="577.5" y1="291" x2="577.5" y2="395" stroke="#464646" stroke-width="1" stroke-dasharray="1 1"/><line x1="618.5" y1="291" x2="618.5" y2="395" stroke="#464646" stroke-width="1" stroke-dasharray="1 1"/><line x1="660.5" y1="291" x2="660.5" y2="395" stroke="#464646" stroke-width="1" stroke-dasharray="1 1"/><line x1="701.5" y1="291" x2="701.5" y2="395" stroke="#464646" stroke-width="1" stroke-dasharray="1 1"/><line x1="742.5" y1="291" x2="742.5" y2="395" stroke="#5a5a5a" stroke-width="1"/><line x1="783.5" y1="291" x2="783.5" y2="395" stroke="#464646" stroke-width="1" stroke-dasharray="1 1"/><line x1="824.5" y1="291" x2="824.5" y2="395" stroke="#464646" stroke-width="1" stroke-dasharray="1 1"/><line x1="866.5" y1="291" x2="866.5" y2="395" stroke="#464646" stroke-width="1" stroke-dasharray="1 1"/><line x1="907.5" y1="291" x2="907.5" y2="395" stroke="#464646" stroke-width="1" stroke-dasharray="1 1"/><line x1="536" y1="304.5" x2="948" y2="304.5" stroke="#464646" stroke-width="1" stroke-dasharray="1 1"/><line x1="536" y1="317.5" x2="948" y2="317.5" stroke="#464646" stroke-width="1" stroke-dasharray="1 1"/><line x1="536" y1="330.5" x2="948" y2="330.5" stroke="#464646" stroke-width="1" stroke-dasharray="1 1"/><line x1="536" y1="343.5" x2="948" y2="343.5" stroke="#4e4e4e" stroke-width="1"/><line x1="544.5" y1="342.0" x2="544.5" y2="345.0" stroke="#5a5a5a" stroke-width="1"/><line x1="552.5" y1="342.0" x2="552.5" y2="345.0" stroke="#5a5a5a" stroke-width="1"/><line x1="561.5" y1="342.0" x2="561.5" y2="345.0" stroke="#5a5a5a" stroke-width="1"/><line x1="569.5" y1="342.0" x2="569.5" y2="345.0" stroke="#5a5a5a" stroke-width="1"/><line x1="577.5" y1="342.0" x2="577.5" y2="345.0" stroke="#5a5a5a" stroke-width="1"/><line x1="585.5" y1="342.0" x2="585.5" y2="345.0" stroke="#5a5a5a" stroke-width="1"/><line x1="594.5" y1="342.0" x2="594.5" y2="345.0" stroke="#5a5a5a" stroke-width="1"/><line x1="602.5" y1="342.0" x2="602.5" y2="345.0" stroke="#5a5a5a" stroke-width="1"/><line x1="610.5" y1="342.0" x2="610.5" y2="345.0" stroke="#5a5a5a" stroke-width="1"/><line x1="618.5" y1="342.0" x2="618.5" y2="345.0" stroke="#5a5a5a" stroke-width="1"/><line x1="627.5" y1="342.0" x2="627.5" y2="345.0" stroke="#5a5a5a" stroke-width="1"/><line x1="635.5" y1="342.0" x2="635.5" y2="345.0" stroke="#5a5a5a" stroke-width="1"/><line x1="643.5" y1="342.0" x2="643.5" y2="345.0" stroke="#5a5a5a" stroke-width="1"/><line x1="651.5" y1="342.0" x2="651.5" y2="345.0" stroke="#5a5a5a" stroke-width="1"/><line x1="660.5" y1="342.0" x2="660.5" y2="345.0" stroke="#5a5a5a" stroke-width="1"/><line x1="668.5" y1="342.0" x2="668.5" y2="345.0" stroke="#5a5a5a" stroke-width="1"/><line x1="676.5" y1="342.0" x2="676.5" y2="345.0" stroke="#5a5a5a" stroke-width="1"/><line x1="684.5" y1="342.0" x2="684.5" y2="345.0" stroke="#5a5a5a" stroke-width="1"/><line x1="693.5" y1="342.0" x2="693.5" y2="345.0" stroke="#5a5a5a" stroke-width="1"/><line x1="701.5" y1="342.0" x2="701.5" y2="345.0" stroke="#5a5a5a" stroke-width="1"/><line x1="709.5" y1="342.0" x2="709.5" y2="345.0" stroke="#5a5a5a" stroke-width="1"/><line x1="717.5" y1="342.0" x2="717.5" y2="345.0" stroke="#5a5a5a" stroke-width="1"/><line x1="726.5" y1="342.0" x2="726.5" y2="345.0" stroke="#5a5a5a" stroke-width="1"/><line x1="734.5" y1="342.0" x2="734.5" y2="345.0" stroke="#5a5a5a" stroke-width="1"/><line x1="742.5" y1="342.0" x2="742.5" y2="345.0" stroke="#5a5a5a" stroke-width="1"/><line x1="750.5" y1="342.0" x2="750.5" y2="345.0" stroke="#5a5a5a" stroke-width="1"/><line x1="758.5" y1="342.0" x2="758.5" y2="345.0" stroke="#5a5a5a" stroke-width="1"/><line x1="767.5" y1="342.0" x2="767.5" y2="345.0" stroke="#5a5a5a" stroke-width="1"/><line x1="775.5" y1="342.0" x2="775.5" y2="345.0" stroke="#5a5a5a" stroke-width="1"/><line x1="783.5" y1="342.0" x2="783.5" y2="345.0" stroke="#5a5a5a" stroke-width="1"/><line x1="791.5" y1="342.0" x2="791.5" y2="345.0" stroke="#5a5a5a" stroke-width="1"/><line x1="800.5" y1="342.0" x2="800.5" y2="345.0" stroke="#5a5a5a" stroke-width="1"/><line x1="808.5" y1="342.0" x2="808.5" y2="345.0" stroke="#5a5a5a" stroke-width="1"/><line x1="816.5" y1="342.0" x2="816.5" y2="345.0" stroke="#5a5a5a" stroke-width="1"/><line x1="824.5" y1="342.0" x2="824.5" y2="345.0" stroke="#5a5a5a" stroke-width="1"/><line x1="833.5" y1="342.0" x2="833.5" y2="345.0" stroke="#5a5a5a" stroke-width="1"/><line x1="841.5" y1="342.0" x2="841.5" y2="345.0" stroke="#5a5a5a" stroke-width="1"/><line x1="849.5" y1="342.0" x2="849.5" y2="345.0" stroke="#5a5a5a" stroke-width="1"/><line x1="857.5" y1="342.0" x2="857.5" y2="345.0" stroke="#5a5a5a" stroke-width="1"/><line x1="866.5" y1="342.0" x2="866.5" y2="345.0" stroke="#5a5a5a" stroke-width="1"/><line x1="874.5" y1="342.0" x2="874.5" y2="345.0" stroke="#5a5a5a" stroke-width="1"/><line x1="882.5" y1="342.0" x2="882.5" y2="345.0" stroke="#5a5a5a" stroke-width="1"/><line x1="890.5" y1="342.0" x2="890.5" y2="345.0" stroke="#5a5a5a" stroke-width="1"/><line x1="899.5" y1="342.0" x2="899.5" y2="345.0" stroke="#5a5a5a" stroke-width="1"/><line x1="907.5" y1="342.0" x2="907.5" y2="345.0" stroke="#5a5a5a" stroke-width="1"/><line x1="915.5" y1="342.0" x2="915.5" y2="345.0" stroke="#5a5a5a" stroke-width="1"/><line x1="923.5" y1="342.0" x2="923.5" y2="345.0" stroke="#5a5a5a" stroke-width="1"/><line x1="932.5" y1="342.0" x2="932.5" y2="345.0" stroke="#5a5a5a" stroke-width="1"/><line x1="940.5" y1="342.0" x2="940.5" y2="345.0" stroke="#5a5a5a" stroke-width="1"/><line x1="536" y1="356.5" x2="948" y2="356.5" stroke="#464646" stroke-width="1" stroke-dasharray="1 1"/><line x1="536" y1="369.5" x2="948" y2="369.5" stroke="#464646" stroke-width="1" stroke-dasharray="1 1"/><line x1="536" y1="382.5" x2="948" y2="382.5" stroke="#464646" stroke-width="1" stroke-dasharray="1 1"/><rect x="544" y="311.0" width="1" height="1" fill="#4a4a4a"/><rect x="552" y="311.0" width="1" height="1" fill="#4a4a4a"/><rect x="561" y="311.0" width="1" height="1" fill="#4a4a4a"/><rect x="569" y="311.0" width="1" height="1" fill="#4a4a4a"/><rect x="585" y="311.0" width="1" height="1" fill="#4a4a4a"/><rect x="594" y="311.0" width="1" height="1" fill="#4a4a4a"/><rect x="602" y="311.0" width="1" height="1" fill="#4a4a4a"/><rect x="610" y="311.0" width="1" height="1" fill="#4a4a4a"/><rect x="627" y="311.0" width="1" height="1" fill="#4a4a4a"/><rect x="635" y="311.0" width="1" height="1" fill="#4a4a4a"/><rect x="643" y="311.0" width="1" height="1" fill="#4a4a4a"/><rect x="651" y="311.0" width="1" height="1" fill="#4a4a4a"/><rect x="668" y="311.0" width="1" height="1" fill="#4a4a4a"/><rect x="676" y="311.0" width="1" height="1" fill="#4a4a4a"/><rect x="684" y="311.0" width="1" height="1" fill="#4a4a4a"/><rect x="693" y="311.0" width="1" height="1" fill="#4a4a4a"/><rect x="709" y="311.0" width="1" height="1" fill="#4a4a4a"/><rect x="717" y="311.0" width="1" height="1" fill="#4a4a4a"/><rect x="726" y="311.0" width="1" height="1" fill="#4a4a4a"/><rect x="734" y="311.0" width="1" height="1" fill="#4a4a4a"/><rect x="750" y="311.0" width="1" height="1" fill="#4a4a4a"/><rect x="758" y="311.0" width="1" height="1" fill="#4a4a4a"/><rect x="767" y="311.0" width="1" height="1" fill="#4a4a4a"/><rect x="775" y="311.0" width="1" height="1" fill="#4a4a4a"/><rect x="791" y="311.0" width="1" height="1" fill="#4a4a4a"/><rect x="800" y="311.0" width="1" height="1" fill="#4a4a4a"/><rect x="808" y="311.0" width="1" height="1" fill="#4a4a4a"/><rect x="816" y="311.0" width="1" height="1" fill="#4a4a4a"/><rect x="833" y="311.0" width="1" height="1" fill="#4a4a4a"/><rect x="841" y="311.0" width="1" height="1" fill="#4a4a4a"/><rect x="849" y="311.0" width="1" height="1" fill="#4a4a4a"/><rect x="857" y="311.0" width="1" height="1" fill="#4a4a4a"/><rect x="874" y="311.0" width="1" height="1" fill="#4a4a4a"/><rect x="882" y="311.0" width="1" height="1" fill="#4a4a4a"/><rect x="890" y="311.0" width="1" height="1" fill="#4a4a4a"/><rect x="899" y="311.0" width="1" height="1" fill="#4a4a4a"/><rect x="915" y="311.0" width="1" height="1" fill="#4a4a4a"/><rect x="923" y="311.0" width="1" height="1" fill="#4a4a4a"/><rect x="932" y="311.0" width="1" height="1" fill="#4a4a4a"/><rect x="940" y="311.0" width="1" height="1" fill="#4a4a4a"/><rect x="544" y="376.0" width="1" height="1" fill="#4a4a4a"/><rect x="552" y="376.0" width="1" height="1" fill="#4a4a4a"/><rect x="561" y="376.0" width="1" height="1" fill="#4a4a4a"/><rect x="569" y="376.0" width="1" height="1" fill="#4a4a4a"/><rect x="585" y="376.0" width="1" height="1" fill="#4a4a4a"/><rect x="594" y="376.0" width="1" height="1" fill="#4a4a4a"/><rect x="602" y="376.0" width="1" height="1" fill="#4a4a4a"/><rect x="610" y="376.0" width="1" height="1" fill="#4a4a4a"/><rect x="627" y="376.0" width="1" height="1" fill="#4a4a4a"/><rect x="635" y="376.0" width="1" height="1" fill="#4a4a4a"/><rect x="643" y="376.0" width="1" height="1" fill="#4a4a4a"/><rect x="651" y="376.0" width="1" height="1" fill="#4a4a4a"/><rect x="668" y="376.0" width="1" height="1" fill="#4a4a4a"/><rect x="676" y="376.0" width="1" height="1" fill="#4a4a4a"/><rect x="684" y="376.0" width="1" height="1" fill="#4a4a4a"/><rect x="693" y="376.0" width="1" height="1" fill="#4a4a4a"/><rect x="709" y="376.0" width="1" height="1" fill="#4a4a4a"/><rect x="717" y="376.0" width="1" height="1" fill="#4a4a4a"/><rect x="726" y="376.0" width="1" height="1" fill="#4a4a4a"/><rect x="734" y="376.0" width="1" height="1" fill="#4a4a4a"/><rect x="750" y="376.0" width="1" height="1" fill="#4a4a4a"/><rect x="758" y="376.0" width="1" height="1" fill="#4a4a4a"/><rect x="767" y="376.0" width="1" height="1" fill="#4a4a4a"/><rect x="775" y="376.0" width="1" height="1" fill="#4a4a4a"/><rect x="791" y="376.0" width="1" height="1" fill="#4a4a4a"/><rect x="800" y="376.0" width="1" height="1" fill="#4a4a4a"/><rect x="808" y="376.0" width="1" height="1" fill="#4a4a4a"/><rect x="816" y="376.0" width="1" height="1" fill="#4a4a4a"/><rect x="833" y="376.0" width="1" height="1" fill="#4a4a4a"/><rect x="841" y="376.0" width="1" height="1" fill="#4a4a4a"/><rect x="849" y="376.0" width="1" height="1" fill="#4a4a4a"/><rect x="857" y="376.0" width="1" height="1" fill="#4a4a4a"/><rect x="874" y="376.0" width="1" height="1" fill="#4a4a4a"/><rect x="882" y="376.0" width="1" height="1" fill="#4a4a4a"/><rect x="890" y="376.0" width="1" height="1" fill="#4a4a4a"/><rect x="899" y="376.0" width="1" height="1" fill="#4a4a4a"/><rect x="915" y="376.0" width="1" height="1" fill="#4a4a4a"/><rect x="923" y="376.0" width="1" height="1" fill="#4a4a4a"/><rect x="932" y="376.0" width="1" height="1" fill="#4a4a4a"/><rect x="940" y="376.0" width="1" height="1" fill="#4a4a4a"/>
<svg x="536" y="27" width="412" height="104" viewBox="536 27 412 104" overflow="hidden">
<path d="M536.0,79.3 L536.6,83.3 L537.2,81.0 L537.8,90.3 L538.4,80.1 L539.0,78.5 L539.6,89.5 L540.2,81.1 L540.8,85.6 L541.4,86.8 L542.0,76.7 L542.6,87.9 L543.2,78.2 L543.8,84.2 L544.4,85.5" fill="none" stroke="#28b4ee" stroke-width="1.1" stroke-linejoin="round"/>
<path d="M536.0,78.7 L536.6,76.6 L537.2,86.7 L537.8,94.9 L538.4,101.9 L539.0,92.2 L539.6,84.5 L540.2,83.3 L540.8,95.3 L541.4,107.7 L542.0,94.2 L542.6,80.5 L543.2,83.7 L543.8,113.0 L544.4,94.0" fill="none" stroke="#f06a9a" stroke-width="1.1" stroke-linejoin="round"/>
<path d="M536.0,93.1 L536.6,106.5 L537.2,86.5 L537.8,87.1 L538.4,98.6 L539.0,87.8 L539.6,92.5 L540.2,65.5 L540.8,89.6 L541.4,85.8 L542.0,89.4 L542.6,80.0 L543.2,85.7 L543.8,98.0 L544.4,97.8" fill="none" stroke="#f2b81c" stroke-width="1.1" stroke-linejoin="round"/>
<path d="M536.0,85.2 L536.6,82.4 L537.2,84.3 L537.8,83.9 L538.4,85.6 L539.0,82.9 L539.6,86.8 L540.2,87.9 L540.8,86.7 L541.4,85.2 L542.0,74.4 L542.6,76.2 L543.2,80.1 L543.8,86.8 L544.4,77.3" fill="none" stroke="#98cc44" stroke-width="1.1" stroke-linejoin="round"/>
<path d="M544.4,94.0 L545.0,77.4 L545.6,87.7 L546.2,78.7 L546.8,83.8 L547.4,84.6 L548.0,80.8 L548.6,92.4 L549.2,89.0 L549.8,86.9 L550.4,96.7 L551.0,99.0 L551.6,77.4 L552.2,89.5 L552.8,84.5" fill="none" stroke="#f06a9a" stroke-width="1.1" stroke-linejoin="round"/>
<path d="M544.4,77.3 L545.0,81.7 L545.6,86.5 L546.2,94.7 L546.8,85.7 L547.4,81.8 L548.0,89.9 L548.6,83.7 L549.2,80.9 L549.8,89.6 L550.4,79.5 L551.0,84.7 L551.6,84.2 L552.2,88.7 L552.8,79.1" fill="none" stroke="#98cc44" stroke-width="1.1" stroke-linejoin="round"/>
<path d="M544.4,85.5 L545.0,84.3 L545.6,80.1 L546.2,89.0 L546.8,82.7 L547.4,81.5 L548.0,92.9 L548.6,93.6 L549.2,78.0 L549.8,84.7 L550.4,87.2 L551.0,72.5 L551.6,82.7 L552.2,90.5 L552.8,80.3" fill="none" stroke="#28b4ee" stroke-width="1.1" stroke-linejoin="round"/>
<path d="M544.4,97.8 L545.0,99.9 L545.6,97.0 L546.2,100.2 L546.8,91.4 L547.4,86.5 L548.0,85.8 L548.6,83.8 L549.2,80.3 L549.8,82.0 L550.4,88.2 L551.0,69.2 L551.6,79.9 L552.2,82.0 L552.8,93.8" fill="none" stroke="#f2b81c" stroke-width="1.1" stroke-linejoin="round"/>
<path d="M552.8,79.1 L553.4,77.8 L554.0,82.4 L554.6,83.1 L555.2,85.2 L555.8,83.3 L556.4,89.2 L557.0,89.3 L557.6,88.7 L558.2,81.1 L558.8,93.6 L559.4,78.7 L560.0,86.4 L560.6,92.2 L561.2,85.5" fill="none" stroke="#98cc44" stroke-width="1.1" stroke-linejoin="round"/>
<path d="M552.8,80.3 L553.4,93.6 L554.0,97.2 L554.6,87.2 L555.2,85.1 L555.8,88.3 L556.4,81.5 L557.0,94.2 L557.6,89.7 L558.2,81.4 L558.8,82.5 L559.4,85.2 L560.0,90.3 L560.6,89.8 L561.2,83.6" fill="none" stroke="#28b4ee" stroke-width="1.1" stroke-linejoin="round"/>
<path d="M552.8,93.8 L553.4,97.5 L554.0,90.1 L554.6,87.9 L555.2,87.3 L555.8,101.8 L556.4,98.1 L557.0,89.1 L557.6,98.5 L558.2,100.8 L558.8,106.4 L559.4,90.9 L560.0,110.9 L560.6,106.4 L561.2,87.6" fill="none" stroke="#f2b81c" stroke-width="1.1" stroke-linejoin="round"/>
<path d="M552.8,84.5 L553.4,92.0 L554.0,82.2 L554.6,92.2 L555.2,92.0 L555.8,90.2 L556.4,84.1 L557.0,89.9 L557.6,82.5 L558.2,78.6 L558.8,93.5 L559.4,84.5 L560.0,106.2 L560.6,99.4 L561.2,74.0" fill="none" stroke="#f06a9a" stroke-width="1.1" stroke-linejoin="round"/>
<path d="M561.2,87.6 L561.8,89.3 L562.4,84.7 L563.0,85.1 L563.6,96.6 L564.2,104.2 L564.8,104.1 L565.4,91.9 L566.0,84.1 L566.6,83.2 L567.2,91.0 L567.8,85.4 L568.4,98.9 L569.0,90.5 L569.6,94.0" fill="none" stroke="#f2b81c" stroke-width="1.1" stroke-linejoin="round"/>
<path d="M561.2,74.0 L561.8,92.5 L562.4,82.0 L563.0,92.6 L563.6,93.3 L564.2,76.1 L564.8,91.2 L565.4,91.5 L566.0,105.6 L566.6,83.6 L567.2,101.0 L567.8,81.4 L568.4,86.1 L569.0,83.0 L569.6,105.0" fill="none" stroke="#f06a9a" stroke-width="1.1" stroke-linejoin="round"/>
<path d="M561.2,85.5 L561.8,96.1 L562.4,98.3 L563.0,96.5 L563.6,91.1 L564.2,92.8 L564.8,83.2 L565.4,85.9 L566.0,86.9 L566.6,85.6 L567.2,86.1 L567.8,82.8 L568.4,74.1 L569.0,89.1 L569.6,89.1" fill="none" stroke="#98cc44" stroke-width="1.1" stroke-linejoin="round"/>
<path d="M561.2,83.6 L561.8,87.1 L562.4,84.0 L563.0,89.3 L563.6,84.4 L564.2,95.9 L564.8,87.6 L565.4,82.2 L566.0,78.2 L566.6,76.5 L567.2,86.0 L567.8,87.5 L568.4,92.1 L569.0,80.2 L569.6,90.5" fill="none" stroke="#28b4ee" stroke-width="1.1" stroke-linejoin="round"/>
<path d="M569.6,105.0 L570.2,93.9 L570.8,115.7 L571.4,95.3 L572.0,99.9 L572.6,102.1 L573.2,86.8 L573.8,90.9 L574.4,107.3 L575.0,89.0 L575.6,94.7 L576.2,91.1 L576.8,94.4 L577.4,85.5 L578.0,88.8" fill="none" stroke="#f06a9a" stroke-width="1.1" stroke-linejoin="round"/>
<path d="M569.6,90.5 L570.2,81.9 L570.8,90.1 L571.4,88.0 L572.0,86.7 L572.6,83.6 L573.2,83.0 L573.8,82.5 L574.4,76.2 L575.0,88.8 L575.6,82.9 L576.2,87.9 L576.8,87.1 L577.4,90.3 L578.0,88.3" fill="none" stroke="#28b4ee" stroke-width="1.1" stroke-linejoin="round"/>
<path d="M569.6,94.0 L570.2,87.4 L570.8,111.9 L571.4,103.2 L572.0,92.2 L572.6,84.2 L573.2,100.7 L573.8,101.5 L574.4,80.7 L575.0,91.2 L575.6,110.2 L576.2,89.0 L576.8,82.9 L577.4,90.8 L578.0,102.0" fill="none" stroke="#f2b81c" stroke-width="1.1" stroke-linejoin="round"/>
<path d="M569.6,89.1 L570.2,97.3 L570.8,90.1 L571.4,85.3 L572.0,89.8 L572.6,88.2 L573.2,84.4 L573.8,84.2 L574.4,78.3 L575.0,86.4 L575.6,96.2 L576.2,77.7 L576.8,82.7 L577.4,90.5 L578.0,86.5" fill="none" stroke="#98cc44" stroke-width="1.1" stroke-linejoin="round"/>
<path d="M578.0,102.0 L578.6,82.9 L579.2,83.9 L579.8,84.8 L580.4,87.6 L581.0,101.2 L581.6,93.2 L582.2,74.1 L582.8,97.9 L583.4,93.7 L584.0,98.3 L584.6,93.8 L585.2,87.9 L585.8,92.2 L586.4,79.8" fill="none" stroke="#f2b81c" stroke-width="1.1" stroke-linejoin="round"/>
<path d="M578.0,88.8 L578.6,93.7 L579.2,91.0 L579.8,84.7 L580.4,99.8 L581.0,80.7 L581.6,81.4 L582.2,81.1 L582.8,102.6 L583.4,88.4 L584.0,82.8 L584.6,82.8 L585.2,96.8 L585.8,80.2 L586.4,76.2" fill="none" stroke="#f06a9a" stroke-width="1.1" stroke-linejoin="round"/>
<path d="M578.0,86.5 L578.6,89.0 L579.2,78.6 L579.8,85.9 L580.4,92.3 L581.0,92.5 L581.6,91.7 L582.2,85.4 L582.8,92.2 L583.4,81.5 L584.0,81.6 L584.6,80.6 L585.2,94.9 L585.8,85.3 L586.4,87.6" fill="none" stroke="#98cc44" stroke-width="1.1" stroke-linejoin="round"/>
<path d="M578.0,88.3 L578.6,88.3 L579.2,89.2 L579.8,91.1 L580.4,85.9 L581.0,83.2 L581.6,87.4 L582.2,86.1 L582.8,88.0 L583.4,86.9 L584.0,86.1 L584.6,91.4 L585.2,87.5 L585.8,89.5 L586.4,85.3" fill="none" stroke="#28b4ee" stroke-width="1.1" stroke-linejoin="round"/>
<path d="M586.4,85.3 L587.0,94.4 L587.6,91.2 L588.2,83.0 L588.8,82.6 L589.4,94.6 L590.0,85.6 L590.6,91.8 L591.2,94.7 L591.8,82.7 L592.4,84.9 L593.0,86.3 L593.6,78.5 L594.2,76.7 L594.8,94.4" fill="none" stroke="#28b4ee" stroke-width="1.1" stroke-linejoin="round"/>
<path d="M586.4,76.2 L587.0,89.4 L587.6,74.5 L588.2,80.0 L588.8,81.2 L589.4,79.4 L590.0,85.4 L590.6,100.4 L591.2,85.9 L591.8,80.1 L592.4,76.3 L593.0,92.1 L593.6,88.8 L594.2,92.8 L594.8,87.5" fill="none" stroke="#f06a9a" stroke-width="1.1" stroke-linejoin="round"/>
<path d="M586.4,79.8 L587.0,71.5 L587.6,85.0 L588.2,78.2 L588.8,105.5 L589.4,88.0 L590.0,106.7 L590.6,79.3 L591.2,79.7 L591.8,93.2 L592.4,75.5 L593.0,85.7 L593.6,75.1 L594.2,93.8 L594.8,77.4" fill="none" stroke="#f2b81c" stroke-width="1.1" stroke-linejoin="round"/>
<path d="M586.4,87.6 L587.0,75.5 L587.6,94.1 L588.2,91.6 L588.8,79.8 L589.4,79.7 L590.0,96.1 L590.6,82.0 L591.2,97.8 L591.8,84.3 L592.4,72.2 L593.0,92.9 L593.6,89.2 L594.2,90.7 L594.8,83.9" fill="none" stroke="#98cc44" stroke-width="1.1" stroke-linejoin="round"/>
<path d="M594.8,83.9 L595.4,84.0 L596.0,90.6 L596.6,82.1 L597.2,74.5 L597.8,91.4 L598.4,82.3 L599.0,93.5 L599.6,84.4 L600.2,85.2 L600.8,86.0 L601.4,74.5 L602.0,93.7 L602.6,85.2 L603.2,86.6" fill="none" stroke="#98cc44" stroke-width="1.1" stroke-linejoin="round"/>
<path d="M594.8,87.5 L595.4,86.1 L596.0,85.2 L596.6,87.9 L597.2,94.1 L597.8,89.3 L598.4,96.5 L599.0,113.0 L599.6,97.1 L600.2,78.4 L600.8,108.9 L601.4,93.3 L602.0,85.6 L602.6,102.8 L603.2,95.7" fill="none" stroke="#f06a9a" stroke-width="1.1" stroke-linejoin="round"/>
<path d="M594.8,77.4 L595.4,92.9 L596.0,79.1 L596.6,100.2 L597.2,101.9 L597.8,91.3 L598.4,83.3 L599.0,94.9 L599.6,98.5 L600.2,96.1 L600.8,99.6 L601.4,106.8 L602.0,89.6 L602.6,84.6 L603.2,82.8" fill="none" stroke="#f2b81c" stroke-width="1.1" stroke-linejoin="round"/>
<path d="M594.8,94.4 L595.4,82.5 L596.0,87.1 L596.6,93.8 L597.2,89.2 L597.8,94.3 L598.4,91.0 L599.0,84.0 L599.6,86.0 L600.2,89.7 L600.8,86.0 L601.4,94.1 L602.0,91.7 L602.6,82.2 L603.2,91.8" fill="none" stroke="#28b4ee" stroke-width="1.1" stroke-linejoin="round"/>
<path d="M603.2,86.6 L603.8,95.0 L604.4,86.6 L605.0,91.0 L605.6,87.3 L606.2,89.9 L606.8,87.6 L607.4,94.0 L608.0,86.9 L608.6,91.5 L609.2,84.6 L609.8,94.5 L610.4,75.6 L611.0,89.7 L611.6,89.5" fill="none" stroke="#98cc44" stroke-width="1.1" stroke-linejoin="round"/>
<path d="M603.2,82.8 L603.8,88.0 L604.4,84.5 L605.0,83.3 L605.6,91.1 L606.2,109.0 L606.8,81.7 L607.4,83.9 L608.0,85.4 L608.6,81.0 L609.2,97.9 L609.8,86.5 L610.4,94.7 L611.0,76.3 L611.6,96.1" fill="none" stroke="#f2b81c" stroke-width="1.1" stroke-linejoin="round"/>
<path d="M603.2,91.8 L603.8,87.2 L604.4,88.8 L605.0,93.1 L605.6,79.8 L606.2,82.8 L606.8,88.4 L607.4,79.1 L608.0,93.1 L608.6,71.6 L609.2,91.3 L609.8,91.4 L610.4,84.9 L611.0,87.3 L611.6,83.3" fill="none" stroke="#28b4ee" stroke-width="1.1" stroke-linejoin="round"/>
<path d="M603.2,95.7 L603.8,89.9 L604.4,90.8 L605.0,87.4 L605.6,98.6 L606.2,106.7 L606.8,92.8 L607.4,99.4 L608.0,114.5 L608.6,83.0 L609.2,98.9 L609.8,94.2 L610.4,86.0 L611.0,87.1 L611.6,97.0" fill="none" stroke="#f06a9a" stroke-width="1.1" stroke-linejoin="round"/>
<path d="M611.6,83.3 L612.2,94.5 L612.8,85.7 L613.4,87.8 L614.0,86.6 L614.6,78.6 L615.2,77.5 L615.8,88.0 L616.4,91.8 L617.0,88.2 L617.6,84.0 L618.2,87.2 L618.8,83.8 L619.4,89.5 L620.0,87.2" fill="none" stroke="#28b4ee" stroke-width="1.1" stroke-linejoin="round"/>
<path d="M611.6,89.5 L612.2,90.7 L612.8,89.2 L613.4,97.7 L614.0,103.6 L614.6,89.2 L615.2,79.4 L615.8,84.9 L616.4,85.7 L617.0,89.2 L617.6,89.1 L618.2,94.0 L618.8,85.6 L619.4,88.6 L620.0,87.5" fill="none" stroke="#98cc44" stroke-width="1.1" stroke-linejoin="round"/>
<path d="M611.6,97.0 L612.2,102.7 L612.8,91.0 L613.4,95.4 L614.0,97.8 L614.6,92.6 L615.2,98.3 L615.8,96.5 L616.4,96.8 L617.0,109.7 L617.6,96.6 L618.2,93.0 L618.8,100.3 L619.4,84.2 L620.0,88.1" fill="none" stroke="#f06a9a" stroke-width="1.1" stroke-linejoin="round"/>
<path d="M611.6,96.1 L612.2,88.8 L612.8,78.1 L613.4,99.5 L614.0,101.4 L614.6,91.0 L615.2,92.1 L615.8,79.7 L616.4,96.2 L617.0,86.8 L617.6,95.0 L618.2,95.0 L618.8,96.7 L619.4,85.0 L620.0,93.2" fill="none" stroke="#f2b81c" stroke-width="1.1" stroke-linejoin="round"/>
<path d="M620.0,88.1 L620.6,99.0 L621.2,97.8 L621.8,105.8 L622.4,88.8 L623.0,75.4 L623.6,107.0 L624.2,96.8 L624.8,76.1 L625.4,98.4 L626.0,86.9 L626.6,74.3 L627.2,87.5 L627.8,85.0 L628.4,106.3" fill="none" stroke="#f06a9a" stroke-width="1.1" stroke-linejoin="round"/>
<path d="M620.0,87.5 L620.6,80.8 L621.2,83.5 L621.8,98.5 L622.4,83.8 L623.0,79.4 L623.6,72.7 L624.2,91.5 L624.8,83.6 L625.4,82.1 L626.0,100.9 L626.6,95.2 L627.2,78.0 L627.8,85.5 L628.4,94.0" fill="none" stroke="#98cc44" stroke-width="1.1" stroke-linejoin="round"/>
<path d="M620.0,93.2 L620.6,93.3 L621.2,102.0 L621.8,85.3 L622.4,103.3 L623.0,94.9 L623.6,90.1 L624.2,107.9 L624.8,98.0 L625.4,84.1 L626.0,89.7 L626.6,80.2 L627.2,79.6 L627.8,85.2 L628.4,87.9" fill="none" stroke="#f2b81c" stroke-width="1.1" stroke-linejoin="round"/>
<path d="M620.0,87.2 L620.6,86.0 L621.2,94.4 L621.8,82.1 L622.4,78.5 L623.0,82.9 L623.6,83.5 L624.2,82.9 L624.8,89.1 L625.4,91.2 L626.0,80.4 L626.6,86.5 L627.2,86.2 L627.8,78.0 L628.4,87.9" fill="none" stroke="#28b4ee" stroke-width="1.1" stroke-linejoin="round"/>
<path d="M628.4,106.3 L629.0,84.5 L629.6,88.7 L630.2,88.4 L630.8,86.2 L631.4,82.1 L632.0,94.8 L632.6,102.2 L633.2,96.2 L633.8,80.7 L634.4,77.8 L635.0,86.7 L635.6,78.4 L636.2,78.1 L636.8,73.2" fill="none" stroke="#f06a9a" stroke-width="1.1" stroke-linejoin="round"/>
<path d="M628.4,87.9 L629.0,110.8 L629.6,102.3 L630.2,73.0 L630.8,92.2 L631.4,85.4 L632.0,91.2 L632.6,91.3 L633.2,87.4 L633.8,91.2 L634.4,80.9 L635.0,102.4 L635.6,86.1 L636.2,98.6 L636.8,85.1" fill="none" stroke="#f2b81c" stroke-width="1.1" stroke-linejoin="round"/>
<path d="M628.4,94.0 L629.0,94.5 L629.6,84.2 L630.2,100.3 L630.8,99.9 L631.4,82.3 L632.0,79.2 L632.6,79.2 L633.2,89.9 L633.8,92.3 L634.4,85.9 L635.0,81.5 L635.6,84.2 L636.2,86.6 L636.8,78.9" fill="none" stroke="#98cc44" stroke-width="1.1" stroke-linejoin="round"/>
<path d="M628.4,87.9 L629.0,85.4 L629.6,84.8 L630.2,80.3 L630.8,80.5 L631.4,84.5 L632.0,85.1 L632.6,84.0 L633.2,88.4 L633.8,84.0 L634.4,92.6 L635.0,90.4 L635.6,85.2 L636.2,82.5 L636.8,89.7" fill="none" stroke="#28b4ee" stroke-width="1.1" stroke-linejoin="round"/>
<path d="M636.8,85.1 L637.4,91.8 L638.0,77.2 L638.6,96.1 L639.2,86.3 L639.8,81.0 L640.4,89.1 L641.0,89.7 L641.6,70.6 L642.2,79.5 L642.8,76.6 L643.4,92.6 L644.0,88.8 L644.6,83.8 L645.2,84.7" fill="none" stroke="#f2b81c" stroke-width="1.1" stroke-linejoin="round"/>
<path d="M636.8,73.2 L637.4,107.8 L638.0,97.3 L638.6,79.5 L639.2,95.8 L639.8,100.0 L640.4,65.6 L641.0,78.5 L641.6,78.8 L642.2,88.4 L642.8,87.5 L643.4,87.7 L644.0,90.9 L644.6,115.4 L645.2,117.4" fill="none" stroke="#f06a9a" stroke-width="1.1" stroke-linejoin="round"/>
<path d="M636.8,89.7 L637.4,92.0 L638.0,86.1 L638.6,93.0 L639.2,89.7 L639.8,92.2 L640.4,78.9 L641.0,81.4 L641.6,86.0 L642.2,85.9 L642.8,82.7 L643.4,81.6 L644.0,73.3 L644.6,89.4 L645.2,88.9" fill="none" stroke="#28b4ee" stroke-width="1.1" stroke-linejoin="round"/>
<path d="M636.8,78.9 L637.4,76.9 L638.0,85.8 L638.6,92.5 L639.2,85.8 L639.8,85.9 L640.4,82.5 L641.0,90.8 L641.6,74.7 L642.2,82.0 L642.8,80.7 L643.4,84.8 L644.0,81.6 L644.6,90.6 L645.2,84.6" fill="none" stroke="#98cc44" stroke-width="1.1" stroke-linejoin="round"/>
<path d="M645.2,84.7 L645.8,93.9 L646.4,76.0 L647.0,94.0 L647.6,114.1 L648.2,84.0 L648.8,82.8 L649.4,82.2 L650.0,95.3 L650.6,81.5 L651.2,107.9 L651.8,88.6 L652.4,84.0 L653.0,79.9 L653.6,96.2" fill="none" stroke="#f2b81c" stroke-width="1.1" stroke-linejoin="round"/>
<path d="M645.2,84.6 L645.8,83.1 L646.4,90.1 L647.0,87.4 L647.6,84.4 L648.2,82.6 L648.8,90.5 L649.4,82.8 L650.0,87.3 L650.6,87.0 L651.2,88.8 L651.8,86.8 L652.4,100.6 L653.0,78.7 L653.6,90.9" fill="none" stroke="#98cc44" stroke-width="1.1" stroke-linejoin="round"/>
<path d="M645.2,88.9 L645.8,83.2 L646.4,86.3 L647.0,83.4 L647.6,90.8 L648.2,86.5 L648.8,92.7 L649.4,85.5 L650.0,84.7 L650.6,81.5 L651.2,90.4 L651.8,84.6 L652.4,89.7 L653.0,92.4 L653.6,88.4" fill="none" stroke="#28b4ee" stroke-width="1.1" stroke-linejoin="round"/>
<path d="M645.2,117.4 L645.8,88.1 L646.4,84.2 L647.0,119.2 L647.6,81.3 L648.2,83.1 L648.8,86.4 L649.4,89.2 L650.0,96.0 L650.6,90.0 L651.2,79.2 L651.8,92.4 L652.4,91.2 L653.0,112.0 L653.6,93.1" fill="none" stroke="#f06a9a" stroke-width="1.1" stroke-linejoin="round"/>
<path d="M653.6,93.1 L654.2,82.4 L654.8,82.5 L655.4,108.2 L656.0,84.6 L656.6,71.2 L657.2,83.4 L657.8,87.4 L658.4,101.0 L659.0,82.4 L659.6,95.0 L660.2,98.8 L660.8,85.2 L661.4,90.1 L662.0,114.5" fill="none" stroke="#f06a9a" stroke-width="1.1" stroke-linejoin="round"/>
<path d="M653.6,96.2 L654.2,102.4 L654.8,93.6 L655.4,103.0 L656.0,98.2 L656.6,90.7 L657.2,88.4 L657.8,84.9 L658.4,91.7 L659.0,85.9 L659.6,106.6 L660.2,100.0 L660.8,91.8 L661.4,89.4 L662.0,95.7" fill="none" stroke="#f2b81c" stroke-width="1.1" stroke-linejoin="round"/>
<path d="M653.6,88.4 L654.2,92.6 L654.8,84.4 L655.4,82.5 L656.0,88.5 L656.6,86.0 L657.2,93.9 L657.8,77.0 L658.4,79.7 L659.0,90.7 L659.6,80.1 L660.2,82.3 L660.8,80.6 L661.4,81.8 L662.0,92.8" fill="none" stroke="#28b4ee" stroke-width="1.1" stroke-linejoin="round"/>
<path d="M653.6,90.9 L654.2,86.7 L654.8,91.9 L655.4,77.8 L656.0,92.2 L656.6,77.2 L657.2,88.2 L657.8,86.8 L658.4,84.2 L659.0,81.7 L659.6,79.7 L660.2,85.7 L660.8,83.1 L661.4,76.5 L662.0,76.9" fill="none" stroke="#98cc44" stroke-width="1.1" stroke-linejoin="round"/>
<path d="M662.0,114.5 L662.6,112.6 L663.2,102.3 L663.8,98.1 L664.4,108.2 L665.0,93.6 L665.6,90.9 L666.2,83.7 L666.8,90.9 L667.4,90.2 L668.0,121.1 L668.6,85.9 L669.2,103.2 L669.8,104.7 L670.4,86.4" fill="none" stroke="#f06a9a" stroke-width="1.1" stroke-linejoin="round"/>
<path d="M662.0,92.8 L662.6,88.9 L663.2,83.6 L663.8,93.5 L664.4,82.1 L665.0,87.8 L665.6,94.8 L666.2,80.4 L666.8,81.0 L667.4,80.2 L668.0,83.7 L668.6,87.7 L669.2,91.1 L669.8,90.9 L670.4,91.0" fill="none" stroke="#28b4ee" stroke-width="1.1" stroke-linejoin="round"/>
<path d="M662.0,76.9 L662.6,91.2 L663.2,91.7 L663.8,91.1 L664.4,87.6 L665.0,87.4 L665.6,88.9 L666.2,88.9 L666.8,83.2 L667.4,84.1 L668.0,81.7 L668.6,89.8 L669.2,83.8 L669.8,86.8 L670.4,94.0" fill="none" stroke="#98cc44" stroke-width="1.1" stroke-linejoin="round"/>
<path d="M662.0,95.7 L662.6,101.2 L663.2,92.4 L663.8,99.0 L664.4,85.4 L665.0,90.4 L665.6,93.8 L666.2,89.6 L666.8,93.6 L667.4,101.1 L668.0,89.6 L668.6,98.5 L669.2,85.0 L669.8,97.4 L670.4,90.6" fill="none" stroke="#f2b81c" stroke-width="1.1" stroke-linejoin="round"/>
<path d="M670.4,86.4 L671.0,97.3 L671.6,67.9 L672.2,88.1 L672.8,99.4 L673.4,68.2 L674.0,80.1 L674.6,104.6 L675.2,90.3 L675.8,81.7 L676.4,86.8 L677.0,84.1 L677.6,97.5 L678.2,91.3 L678.8,85.0" fill="none" stroke="#f06a9a" stroke-width="1.1" stroke-linejoin="round"/>
<path d="M670.4,94.0 L671.0,85.0 L671.6,91.5 L672.2,94.5 L672.8,75.0 L673.4,78.0 L674.0,88.9 L674.6,82.3 L675.2,89.3 L675.8,90.6 L676.4,83.3 L677.0,91.9 L677.6,97.1 L678.2,93.2 L678.8,83.5" fill="none" stroke="#98cc44" stroke-width="1.1" stroke-linejoin="round"/>
<path d="M670.4,91.0 L671.0,86.5 L671.6,83.8 L672.2,81.3 L672.8,86.9 L673.4,81.8 L674.0,79.8 L674.6,88.0 L675.2,82.9 L675.8,84.7 L676.4,95.4 L677.0,87.7 L677.6,89.5 L678.2,86.3 L678.8,84.1" fill="none" stroke="#28b4ee" stroke-width="1.1" stroke-linejoin="round"/>
<path d="M670.4,90.6 L671.0,88.7 L671.6,99.9 L672.2,105.8 L672.8,93.4 L673.4,94.1 L674.0,104.3 L674.6,81.1 L675.2,97.7 L675.8,76.7 L676.4,70.9 L677.0,90.1 L677.6,83.4 L678.2,82.3 L678.8,67.8" fill="none" stroke="#f2b81c" stroke-width="1.1" stroke-linejoin="round"/>
<path d="M678.8,67.8 L679.4,90.0 L680.0,84.2 L680.6,81.4 L681.2,89.0 L681.8,80.5 L682.4,82.3 L683.0,84.0 L683.6,103.0 L684.2,91.3 L684.8,105.2 L685.4,84.2 L686.0,83.1 L686.6,111.2 L687.2,80.5" fill="none" stroke="#f2b81c" stroke-width="1.1" stroke-linejoin="round"/>
<path d="M678.8,85.0 L679.4,84.5 L680.0,93.9 L680.6,107.5 L681.2,98.0 L681.8,102.2 L682.4,92.1 L683.0,82.4 L683.6,85.2 L684.2,97.6 L684.8,92.0 L685.4,84.1 L686.0,78.8 L686.6,98.9 L687.2,91.7" fill="none" stroke="#f06a9a" stroke-width="1.1" stroke-linejoin="round"/>
<path d="M678.8,84.1 L679.4,90.9 L680.0,85.4 L680.6,86.1 L681.2,83.3 L681.8,87.3 L682.4,87.5 L683.0,75.6 L683.6,80.9 L684.2,85.5 L684.8,95.4 L685.4,83.3 L686.0,88.6 L686.6,91.5 L687.2,92.2" fill="none" stroke="#28b4ee" stroke-width="1.1" stroke-linejoin="round"/>
<path d="M678.8,83.5 L679.4,87.6 L680.0,85.2 L680.6,97.0 L681.2,87.0 L681.8,83.4 L682.4,87.5 L683.0,90.1 L683.6,83.6 L684.2,85.8 L684.8,86.1 L685.4,89.1 L686.0,92.5 L686.6,88.5 L687.2,84.0" fill="none" stroke="#98cc44" stroke-width="1.1" stroke-linejoin="round"/>
<path d="M687.2,84.0 L687.8,90.9 L688.4,83.8 L689.0,94.7 L689.6,89.9 L690.2,88.4 L690.8,74.2 L691.4,102.1 L692.0,95.3 L692.6,95.0 L693.2,89.7 L693.8,94.4 L694.4,106.1 L695.0,84.9 L695.6,91.7" fill="none" stroke="#98cc44" stroke-width="1.1" stroke-linejoin="round"/>
<path d="M687.2,91.7 L687.8,90.8 L688.4,90.8 L689.0,96.5 L689.6,96.6 L690.2,101.4 L690.8,98.1 L691.4,104.4 L692.0,101.3 L692.6,89.1 L693.2,94.8 L693.8,101.4 L694.4,91.3 L695.0,101.1 L695.6,106.7" fill="none" stroke="#f06a9a" stroke-width="1.1" stroke-linejoin="round"/>
<path d="M687.2,92.2 L687.8,84.1 L688.4,89.6 L689.0,86.5 L689.6,86.0 L690.2,84.2 L690.8,78.2 L691.4,83.8 L692.0,79.2 L692.6,90.6 L693.2,87.6 L693.8,93.0 L694.4,77.8 L695.0,77.8 L695.6,83.7" fill="none" stroke="#28b4ee" stroke-width="1.1" stroke-linejoin="round"/>
<path d="M687.2,80.5 L687.8,102.3 L688.4,79.8 L689.0,95.8 L689.6,83.1 L690.2,101.3 L690.8,104.3 L691.4,93.5 L692.0,87.9 L692.6,82.9 L693.2,92.6 L693.8,104.7 L694.4,81.6 L695.0,79.0 L695.6,108.2" fill="none" stroke="#f2b81c" stroke-width="1.1" stroke-linejoin="round"/>
<path d="M695.6,91.7 L696.2,91.2 L696.8,86.9 L697.4,87.6 L698.0,79.7 L698.6,88.5 L699.2,80.1 L699.8,96.9 L700.4,90.3 L701.0,80.9 L701.6,74.1 L702.2,86.1 L702.8,88.0 L703.4,77.1 L704.0,91.6" fill="none" stroke="#98cc44" stroke-width="1.1" stroke-linejoin="round"/>
<path d="M695.6,106.7 L696.2,85.2 L696.8,76.6 L697.4,102.3 L698.0,88.7 L698.6,98.5 L699.2,80.9 L699.8,112.3 L700.4,101.0 L701.0,91.3 L701.6,90.0 L702.2,93.6 L702.8,90.4 L703.4,88.5 L704.0,81.8" fill="none" stroke="#f06a9a" stroke-width="1.1" stroke-linejoin="round"/>
<path d="M695.6,83.7 L696.2,85.3 L696.8,88.5 L697.4,81.0 L698.0,77.2 L698.6,81.2 L699.2,99.1 L699.8,79.1 L700.4,82.3 L701.0,89.1 L701.6,87.4 L702.2,83.1 L702.8,70.6 L703.4,88.4 L704.0,83.3" fill="none" stroke="#28b4ee" stroke-width="1.1" stroke-linejoin="round"/>
<path d="M695.6,108.2 L696.2,87.8 L696.8,97.8 L697.4,91.2 L698.0,92.9 L698.6,85.7 L699.2,86.5 L699.8,72.7 L700.4,81.1 L701.0,78.7 L701.6,97.6 L702.2,81.9 L702.8,88.5 L703.4,73.5 L704.0,87.8" fill="none" stroke="#f2b81c" stroke-width="1.1" stroke-linejoin="round"/>
<path d="M704.0,81.8 L704.6,106.4 L705.2,95.2 L705.8,94.6 L706.4,96.7 L707.0,74.4 L707.6,100.0 L708.2,89.5 L708.8,88.3 L709.4,87.2 L710.0,80.2 L710.6,96.1 L711.2,82.9 L711.8,80.4 L712.4,80.3" fill="none" stroke="#f06a9a" stroke-width="1.1" stroke-linejoin="round"/>
<path d="M704.0,83.3 L704.6,90.8 L705.2,86.4 L705.8,89.6 L706.4,79.1 L707.0,88.7 L707.6,86.9 L708.2,85.8 L708.8,89.8 L709.4,89.9 L710.0,84.0 L710.6,87.6 L711.2,90.3 L711.8,87.2 L712.4,84.0" fill="none" stroke="#28b4ee" stroke-width="1.1" stroke-linejoin="round"/>
<path d="M704.0,87.8 L704.6,101.9 L705.2,86.7 L705.8,94.8 L706.4,85.0 L707.0,81.6 L707.6,97.0 L708.2,85.5 L708.8,81.2 L709.4,91.7 L710.0,90.5 L710.6,105.1 L711.2,103.7 L711.8,82.6 L712.4,100.2" fill="none" stroke="#f2b81c" stroke-width="1.1" stroke-linejoin="round"/>
<path d="M704.0,91.6 L704.6,84.5 L705.2,81.8 L705.8,75.8 L706.4,82.4 L707.0,82.4 L707.6,88.0 L708.2,90.9 L708.8,83.8 L709.4,85.5 L710.0,92.1 L710.6,88.3 L711.2,82.9 L711.8,88.1 L712.4,81.2" fill="none" stroke="#98cc44" stroke-width="1.1" stroke-linejoin="round"/>
<path d="M712.4,81.2 L713.0,88.5 L713.6,88.0 L714.2,80.6 L714.8,90.0 L715.4,87.3 L716.0,90.5 L716.6,78.5 L717.2,91.7 L717.8,90.8 L718.4,82.6 L719.0,83.9 L719.6,85.3 L720.2,85.8 L720.8,91.3" fill="none" stroke="#98cc44" stroke-width="1.1" stroke-linejoin="round"/>
<path d="M712.4,84.0 L713.0,86.9 L713.6,84.8 L714.2,86.1 L714.8,89.1 L715.4,85.7 L716.0,90.8 L716.6,93.9 L717.2,85.2 L717.8,82.8 L718.4,86.0 L719.0,90.1 L719.6,88.9 L720.2,83.9 L720.8,76.8" fill="none" stroke="#28b4ee" stroke-width="1.1" stroke-linejoin="round"/>
<path d="M712.4,80.3 L713.0,89.8 L713.6,99.9 L714.2,86.6 L714.8,79.1 L715.4,101.9 L716.0,83.0 L716.6,104.8 L717.2,90.7 L717.8,83.5 L718.4,82.5 L719.0,92.4 L719.6,97.3 L720.2,86.0 L720.8,98.7" fill="none" stroke="#f06a9a" stroke-width="1.1" stroke-linejoin="round"/>
<path d="M712.4,100.2 L713.0,82.9 L713.6,97.6 L714.2,98.1 L714.8,87.1 L715.4,85.0 L716.0,97.0 L716.6,86.6 L717.2,80.3 L717.8,106.0 L718.4,99.0 L719.0,95.7 L719.6,95.8 L720.2,103.6 L720.8,91.9" fill="none" stroke="#f2b81c" stroke-width="1.1" stroke-linejoin="round"/>
<path d="M720.8,98.7 L721.4,111.0 L722.0,90.8 L722.6,83.1 L723.2,83.1 L723.8,80.9 L724.4,85.0 L725.0,82.1 L725.6,77.8 L726.2,90.7 L726.8,67.0 L727.4,77.5 L728.0,109.4 L728.6,102.8 L729.2,99.7" fill="none" stroke="#f06a9a" stroke-width="1.1" stroke-linejoin="round"/>
<path d="M720.8,91.3 L721.4,84.1 L722.0,82.3 L722.6,88.4 L723.2,100.1 L723.8,88.2 L724.4,84.4 L725.0,84.0 L725.6,89.1 L726.2,94.1 L726.8,81.8 L727.4,86.2 L728.0,85.2 L728.6,88.0 L729.2,87.5" fill="none" stroke="#98cc44" stroke-width="1.1" stroke-linejoin="round"/>
<path d="M720.8,91.9 L721.4,98.0 L722.0,91.0 L722.6,83.3 L723.2,101.2 L723.8,94.1 L724.4,81.3 L725.0,85.7 L725.6,71.0 L726.2,80.8 L726.8,81.2 L727.4,98.8 L728.0,96.2 L728.6,103.3 L729.2,92.8" fill="none" stroke="#f2b81c" stroke-width="1.1" stroke-linejoin="round"/>
<path d="M720.8,76.8 L721.4,90.2 L722.0,89.4 L722.6,88.9 L723.2,84.9 L723.8,76.4 L724.4,84.5 L725.0,81.0 L725.6,87.4 L726.2,91.3 L726.8,88.2 L727.4,83.0 L728.0,89.1 L728.6,83.5 L729.2,90.4" fill="none" stroke="#28b4ee" stroke-width="1.1" stroke-linejoin="round"/>
<path d="M729.2,92.8 L729.8,106.0 L730.4,80.0 L731.0,76.8 L731.6,77.5 L732.2,86.9 L732.8,80.2 L733.4,81.0 L734.0,83.4 L734.6,91.0 L735.2,80.0 L735.8,89.2 L736.4,89.8 L737.0,109.5 L737.6,90.9" fill="none" stroke="#f2b81c" stroke-width="1.1" stroke-linejoin="round"/>
<path d="M729.2,90.4 L729.8,87.5 L730.4,84.9 L731.0,89.1 L731.6,86.4 L732.2,91.9 L732.8,84.7 L733.4,83.6 L734.0,90.7 L734.6,86.6 L735.2,85.0 L735.8,94.3 L736.4,74.4 L737.0,78.6 L737.6,83.6" fill="none" stroke="#28b4ee" stroke-width="1.1" stroke-linejoin="round"/>
<path d="M729.2,87.5 L729.8,93.6 L730.4,92.3 L731.0,86.8 L731.6,104.7 L732.2,83.3 L732.8,82.9 L733.4,95.0 L734.0,89.4 L734.6,86.4 L735.2,89.2 L735.8,92.1 L736.4,88.1 L737.0,86.5 L737.6,84.8" fill="none" stroke="#98cc44" stroke-width="1.1" stroke-linejoin="round"/>
<path d="M729.2,99.7 L729.8,100.4 L730.4,113.9 L731.0,99.0 L731.6,95.0 L732.2,83.9 L732.8,94.5 L733.4,88.8 L734.0,87.4 L734.6,87.9 L735.2,95.2 L735.8,91.2 L736.4,105.0 L737.0,83.5 L737.6,92.7" fill="none" stroke="#f06a9a" stroke-width="1.1" stroke-linejoin="round"/>
<path d="M737.6,84.8 L738.2,86.1 L738.8,88.0 L739.4,98.0 L740.0,92.5 L740.6,91.8 L741.2,84.7 L741.8,93.3 L742.4,77.9 L743.0,88.7 L743.6,89.5 L744.2,81.6 L744.8,80.5 L745.4,91.2 L746.0,84.4" fill="none" stroke="#98cc44" stroke-width="1.1" stroke-linejoin="round"/>
<path d="M737.6,90.9 L738.2,78.0 L738.8,92.6 L739.4,90.9 L740.0,77.6 L740.6,59.0 L741.2,90.2 L741.8,82.7 L742.4,75.6 L743.0,79.3 L743.6,91.1 L744.2,94.3 L744.8,77.9 L745.4,92.7 L746.0,83.1" fill="none" stroke="#f2b81c" stroke-width="1.1" stroke-linejoin="round"/>
<path d="M737.6,92.7 L738.2,113.8 L738.8,94.2 L739.4,106.8 L740.0,105.7 L740.6,107.7 L741.2,99.2 L741.8,79.1 L742.4,87.4 L743.0,85.9 L743.6,72.0 L744.2,84.5 L744.8,72.8 L745.4,66.3 L746.0,87.9" fill="none" stroke="#f06a9a" stroke-width="1.1" stroke-linejoin="round"/>
<path d="M737.6,83.6 L738.2,91.3 L738.8,91.8 L739.4,87.5 L740.0,83.2 L740.6,78.9 L741.2,88.4 L741.8,87.4 L742.4,83.6 L743.0,92.0 L743.6,92.0 L744.2,81.6 L744.8,88.0 L745.4,79.3 L746.0,84.9" fill="none" stroke="#28b4ee" stroke-width="1.1" stroke-linejoin="round"/>
<path d="M746.0,87.9 L746.6,84.8 L747.2,75.9 L747.8,72.1 L748.4,79.0 L749.0,80.5 L749.6,82.3 L750.2,82.5 L750.8,80.5 L751.4,87.2 L752.0,86.3 L752.6,82.8 L753.2,70.1 L753.8,69.4 L754.4,83.1" fill="none" stroke="#f06a9a" stroke-width="1.1" stroke-linejoin="round"/>
<path d="M746.0,84.9 L746.6,76.8 L747.2,83.3 L747.8,92.0 L748.4,79.9 L749.0,89.4 L749.6,87.8 L750.2,87.5 L750.8,78.7 L751.4,72.0 L752.0,79.3 L752.6,81.8 L753.2,75.1 L753.8,74.5 L754.4,73.5" fill="none" stroke="#28b4ee" stroke-width="1.1" stroke-linejoin="round"/>
<path d="M746.0,84.4 L746.6,83.6 L747.2,89.0 L747.8,83.4 L748.4,88.2 L749.0,96.0 L749.6,83.6 L750.2,91.0 L750.8,78.9 L751.4,83.5 L752.0,80.1 L752.6,81.5 L753.2,86.7 L753.8,94.6 L754.4,81.1" fill="none" stroke="#98cc44" stroke-width="1.1" stroke-linejoin="round"/>
<path d="M746.0,83.1 L746.6,83.0 L747.2,82.7 L747.8,84.7 L748.4,84.0 L749.0,81.5 L749.6,86.9 L750.2,77.4 L750.8,89.3 L751.4,80.7 L752.0,87.7 L752.6,83.6 L753.2,64.5 L753.8,87.5 L754.4,81.0" fill="none" stroke="#f2b81c" stroke-width="1.1" stroke-linejoin="round"/>
<path d="M754.4,81.1 L755.0,88.9 L755.6,84.0 L756.2,86.2 L756.8,78.5 L757.4,77.8 L758.0,80.7 L758.6,77.0 L759.2,80.7 L759.8,74.3 L760.4,79.6 L761.0,80.3 L761.6,89.9 L762.2,88.6 L762.8,80.2" fill="none" stroke="#98cc44" stroke-width="1.1" stroke-linejoin="round"/>
<path d="M754.4,81.0 L755.0,80.3 L755.6,78.8 L756.2,92.3 L756.8,79.4 L757.4,85.6 L758.0,82.3 L758.6,70.8 L759.2,84.6 L759.8,63.8 L760.4,80.3 L761.0,78.7 L761.6,78.0 L762.2,68.2 L762.8,84.0" fill="none" stroke="#f2b81c" stroke-width="1.1" stroke-linejoin="round"/>
<path d="M754.4,73.5 L755.0,92.0 L755.6,70.3 L756.2,83.3 L756.8,78.4 L757.4,87.6 L758.0,86.2 L758.6,74.7 L759.2,79.6 L759.8,77.9 L760.4,84.1 L761.0,79.4 L761.6,82.6 L762.2,82.2 L762.8,75.4" fill="none" stroke="#28b4ee" stroke-width="1.1" stroke-linejoin="round"/>
<path d="M754.4,83.1 L755.0,75.9 L755.6,78.0 L756.2,50.8 L756.8,48.5 L757.4,82.1 L758.0,81.2 L758.6,87.7 L759.2,82.9 L759.8,79.7 L760.4,77.6 L761.0,64.9 L761.6,84.9 L762.2,75.1 L762.8,81.4" fill="none" stroke="#f06a9a" stroke-width="1.1" stroke-linejoin="round"/>
<path d="M762.8,81.4 L763.4,79.7 L764.0,80.7 L764.6,83.7 L765.2,70.9 L765.8,71.6 L766.4,66.4 L767.0,70.7 L767.6,84.6 L768.2,68.8 L768.8,80.1 L769.4,78.0 L770.0,76.6 L770.6,76.1 L771.2,58.6" fill="none" stroke="#f06a9a" stroke-width="1.1" stroke-linejoin="round"/>
<path d="M762.8,80.2 L763.4,74.3 L764.0,80.6 L764.6,82.8 L765.2,75.9 L765.8,71.8 L766.4,67.4 L767.0,78.9 L767.6,90.4 L768.2,77.1 L768.8,78.9 L769.4,79.8 L770.0,80.3 L770.6,81.1 L771.2,63.4" fill="none" stroke="#98cc44" stroke-width="1.1" stroke-linejoin="round"/>
<path d="M762.8,84.0 L763.4,86.4 L764.0,64.0 L764.6,67.3 L765.2,83.3 L765.8,66.6 L766.4,78.7 L767.0,58.2 L767.6,61.5 L768.2,72.0 L768.8,75.4 L769.4,56.8 L770.0,59.4 L770.6,71.9 L771.2,77.2" fill="none" stroke="#f2b81c" stroke-width="1.1" stroke-linejoin="round"/>
<path d="M762.8,75.4 L763.4,84.2 L764.0,80.6 L764.6,79.4 L765.2,74.8 L765.8,81.0 L766.4,75.8 L767.0,83.9 L767.6,79.0 L768.2,64.3 L768.8,79.6 L769.4,78.0 L770.0,74.9 L770.6,77.8 L771.2,66.4" fill="none" stroke="#28b4ee" stroke-width="1.1" stroke-linejoin="round"/>
<path d="M771.2,63.4 L771.8,74.8 L772.4,78.0 L773.0,75.1 L773.6,81.3 L774.2,70.6 L774.8,77.4 L775.4,81.1 L776.0,68.3 L776.6,69.6 L777.2,69.0 L777.8,76.2 L778.4,59.8 L779.0,63.6 L779.6,70.9" fill="none" stroke="#98cc44" stroke-width="1.1" stroke-linejoin="round"/>
<path d="M771.2,58.6 L771.8,73.2 L772.4,80.7 L773.0,62.9 L773.6,70.2 L774.2,61.0 L774.8,70.8 L775.4,57.0 L776.0,78.5 L776.6,62.2 L777.2,49.7 L777.8,79.4 L778.4,75.5 L779.0,74.2 L779.6,72.8" fill="none" stroke="#f06a9a" stroke-width="1.1" stroke-linejoin="round"/>
<path d="M771.2,66.4 L771.8,75.2 L772.4,70.0 L773.0,74.4 L773.6,69.0 L774.2,67.4 L774.8,72.3 L775.4,66.3 L776.0,75.9 L776.6,79.9 L777.2,81.9 L777.8,78.5 L778.4,72.5 L779.0,73.1 L779.6,73.6" fill="none" stroke="#28b4ee" stroke-width="1.1" stroke-linejoin="round"/>
<path d="M771.2,77.2 L771.8,71.0 L772.4,70.7 L773.0,70.0 L773.6,53.4 L774.2,71.7 L774.8,75.6 L775.4,72.0 L776.0,56.6 L776.6,57.4 L777.2,75.2 L777.8,53.4 L778.4,58.0 L779.0,79.1 L779.6,63.1" fill="none" stroke="#f2b81c" stroke-width="1.1" stroke-linejoin="round"/>
<path d="M779.6,63.1 L780.2,62.3 L780.8,73.5 L781.4,75.2 L782.0,64.4 L782.6,49.2 L783.2,60.7 L783.8,67.7 L784.4,56.3 L785.0,54.7 L785.6,74.2 L786.2,71.2 L786.8,72.0 L787.4,73.2 L788.0,56.7" fill="none" stroke="#f2b81c" stroke-width="1.1" stroke-linejoin="round"/>
<path d="M779.6,73.6 L780.2,78.6 L780.8,66.8 L781.4,68.5 L782.0,60.4 L782.6,77.3 L783.2,65.6 L783.8,64.5 L784.4,63.5 L785.0,76.3 L785.6,74.0 L786.2,72.9 L786.8,68.3 L787.4,72.2 L788.0,80.4" fill="none" stroke="#28b4ee" stroke-width="1.1" stroke-linejoin="round"/>
<path d="M779.6,70.9 L780.2,77.2 L780.8,76.4 L781.4,69.5 L782.0,84.2 L782.6,74.5 L783.2,71.0 L783.8,78.7 L784.4,84.9 L785.0,76.5 L785.6,65.3 L786.2,69.7 L786.8,74.1 L787.4,79.7 L788.0,68.2" fill="none" stroke="#98cc44" stroke-width="1.1" stroke-linejoin="round"/>
<path d="M779.6,72.8 L780.2,64.0 L780.8,64.4 L781.4,71.4 L782.0,71.9 L782.6,72.1 L783.2,63.6 L783.8,57.9 L784.4,63.4 L785.0,74.5 L785.6,77.1 L786.2,63.5 L786.8,60.7 L787.4,75.5 L788.0,73.0" fill="none" stroke="#f06a9a" stroke-width="1.1" stroke-linejoin="round"/>
<path d="M788.0,68.2 L788.6,74.6 L789.2,65.6 L789.8,73.6 L790.4,66.7 L791.0,71.6 L791.6,65.4 L792.2,68.4 L792.8,64.9 L793.4,64.1 L794.0,82.8 L794.6,81.7 L795.2,78.9 L795.8,73.3 L796.4,85.5" fill="none" stroke="#98cc44" stroke-width="1.1" stroke-linejoin="round"/>
<path d="M788.0,56.7 L788.6,72.3 L789.2,78.4 L789.8,76.0 L790.4,61.9 L791.0,59.1 L791.6,66.8 L792.2,75.6 L792.8,71.7 L793.4,73.5 L794.0,60.6 L794.6,75.7 L795.2,66.0 L795.8,79.1 L796.4,73.6" fill="none" stroke="#f2b81c" stroke-width="1.1" stroke-linejoin="round"/>
<path d="M788.0,80.4 L788.6,65.6 L789.2,73.1 L789.8,80.6 L790.4,67.7 L791.0,77.0 L791.6,77.4 L792.2,69.7 L792.8,73.3 L793.4,76.1 L794.0,76.4 L794.6,70.0 L795.2,64.2 L795.8,71.9 L796.4,72.6" fill="none" stroke="#28b4ee" stroke-width="1.1" stroke-linejoin="round"/>
<path d="M788.0,73.0 L788.6,72.7 L789.2,53.6 L789.8,66.0 L790.4,67.0 L791.0,72.5 L791.6,55.4 L792.2,79.8 L792.8,75.1 L793.4,75.6 L794.0,61.9 L794.6,71.6 L795.2,80.4 L795.8,53.1 L796.4,71.6" fill="none" stroke="#f06a9a" stroke-width="1.1" stroke-linejoin="round"/>
<path d="M796.4,71.6 L797.0,72.6 L797.6,60.0 L798.2,72.9 L798.8,63.4 L799.4,76.7 L800.0,73.2 L800.6,72.1 L801.2,82.5 L801.8,74.7 L802.4,78.3 L803.0,58.6 L803.6,62.0 L804.2,74.1 L804.8,75.0" fill="none" stroke="#f06a9a" stroke-width="1.1" stroke-linejoin="round"/>
<path d="M796.4,73.6 L797.0,43.2 L797.6,72.8 L798.2,64.3 L798.8,65.5 L799.4,70.1 L800.0,77.5 L800.6,74.7 L801.2,78.0 L801.8,68.6 L802.4,51.0 L803.0,64.1 L803.6,59.4 L804.2,62.2 L804.8,85.4" fill="none" stroke="#f2b81c" stroke-width="1.1" stroke-linejoin="round"/>
<path d="M796.4,72.6 L797.0,74.8 L797.6,76.8 L798.2,76.2 L798.8,74.9 L799.4,70.5 L800.0,78.2 L800.6,77.0 L801.2,70.5 L801.8,71.8 L802.4,66.3 L803.0,71.1 L803.6,73.0 L804.2,72.3 L804.8,77.6" fill="none" stroke="#28b4ee" stroke-width="1.1" stroke-linejoin="round"/>
<path d="M796.4,85.5 L797.0,73.8 L797.6,77.7 L798.2,82.6 L798.8,77.7 L799.4,84.2 L800.0,72.6 L800.6,70.8 L801.2,74.4 L801.8,67.9 L802.4,67.9 L803.0,80.5 L803.6,65.5 L804.2,85.1 L804.8,79.9" fill="none" stroke="#98cc44" stroke-width="1.1" stroke-linejoin="round"/>
<path d="M804.8,79.9 L805.4,85.5 L806.0,80.4 L806.6,79.1 L807.2,85.3 L807.8,73.5 L808.4,72.4 L809.0,80.9 L809.6,69.2 L810.2,79.7 L810.8,78.0 L811.4,70.2 L812.0,66.9 L812.6,62.1 L813.2,85.5" fill="none" stroke="#98cc44" stroke-width="1.1" stroke-linejoin="round"/>
<path d="M804.8,77.6 L805.4,74.2 L806.0,69.3 L806.6,80.6 L807.2,66.5 L807.8,80.4 L808.4,75.5 L809.0,76.0 L809.6,70.9 L810.2,75.6 L810.8,82.3 L811.4,70.2 L812.0,75.0 L812.6,74.9 L813.2,59.7" fill="none" stroke="#28b4ee" stroke-width="1.1" stroke-linejoin="round"/>
<path d="M804.8,75.0 L805.4,69.7 L806.0,75.3 L806.6,60.1 L807.2,72.1 L807.8,59.1 L808.4,73.6 L809.0,64.2 L809.6,62.3 L810.2,69.0 L810.8,79.0 L811.4,56.5 L812.0,62.6 L812.6,76.0 L813.2,65.3" fill="none" stroke="#f06a9a" stroke-width="1.1" stroke-linejoin="round"/>
<path d="M804.8,85.4 L805.4,74.6 L806.0,58.6 L806.6,75.7 L807.2,67.2 L807.8,58.3 L808.4,77.2 L809.0,63.4 L809.6,67.0 L810.2,80.9 L810.8,54.3 L811.4,73.8 L812.0,60.2 L812.6,53.3 L813.2,65.9" fill="none" stroke="#f2b81c" stroke-width="1.1" stroke-linejoin="round"/>
<path d="M813.2,65.3 L813.8,80.6 L814.4,72.7 L815.0,71.4 L815.6,72.0 L816.2,79.5 L816.8,72.9 L817.4,72.7 L818.0,69.6 L818.6,45.7 L819.2,52.8 L819.8,75.7 L820.4,72.8 L821.0,71.0 L821.6,72.2" fill="none" stroke="#f06a9a" stroke-width="1.1" stroke-linejoin="round"/>
<path d="M813.2,59.7 L813.8,71.8 L814.4,76.7 L815.0,72.5 L815.6,75.3 L816.2,70.5 L816.8,84.0 L817.4,77.8 L818.0,75.5 L818.6,72.8 L819.2,80.5 L819.8,76.2 L820.4,79.5 L821.0,77.0 L821.6,66.6" fill="none" stroke="#28b4ee" stroke-width="1.1" stroke-linejoin="round"/>
<path d="M813.2,85.5 L813.8,66.2 L814.4,68.4 L815.0,80.6 L815.6,78.1 L816.2,74.9 L816.8,74.0 L817.4,70.9 L818.0,66.8 L818.6,67.5 L819.2,76.2 L819.8,78.7 L820.4,79.7 L821.0,72.3 L821.6,57.8" fill="none" stroke="#98cc44" stroke-width="1.1" stroke-linejoin="round"/>
<path d="M813.2,65.9 L813.8,71.1 L814.4,72.3 L815.0,55.6 L815.6,76.4 L816.2,62.1 L816.8,71.8 L817.4,70.9 L818.0,67.0 L818.6,74.2 L819.2,64.4 L819.8,59.4 L820.4,55.4 L821.0,50.0 L821.6,65.1" fill="none" stroke="#f2b81c" stroke-width="1.1" stroke-linejoin="round"/>
<path d="M821.6,72.2 L822.2,63.5 L822.8,72.0 L823.4,62.5 L824.0,72.4 L824.6,61.0 L825.2,65.2 L825.8,70.3 L826.4,61.3 L827.0,71.0 L827.6,69.5 L828.2,70.3 L828.8,76.1 L829.4,50.9 L830.0,51.3" fill="none" stroke="#f06a9a" stroke-width="1.1" stroke-linejoin="round"/>
<path d="M821.6,65.1 L822.2,45.4 L822.8,66.4 L823.4,64.6 L824.0,80.1 L824.6,58.3 L825.2,76.9 L825.8,70.5 L826.4,70.1 L827.0,61.7 L827.6,57.1 L828.2,62.6 L828.8,63.1 L829.4,69.0 L830.0,56.9" fill="none" stroke="#f2b81c" stroke-width="1.1" stroke-linejoin="round"/>
<path d="M821.6,66.6 L822.2,77.1 L822.8,60.7 L823.4,58.9 L824.0,71.7 L824.6,80.5 L825.2,75.1 L825.8,75.7 L826.4,67.5 L827.0,73.1 L827.6,77.5 L828.2,63.9 L828.8,70.7 L829.4,73.7 L830.0,79.7" fill="none" stroke="#28b4ee" stroke-width="1.1" stroke-linejoin="round"/>
<path d="M821.6,57.8 L822.2,74.1 L822.8,69.9 L823.4,55.0 L824.0,79.1 L824.6,70.9 L825.2,69.5 L825.8,72.2 L826.4,71.9 L827.0,73.4 L827.6,71.3 L828.2,70.2 L828.8,74.6 L829.4,73.3 L830.0,85.4" fill="none" stroke="#98cc44" stroke-width="1.1" stroke-linejoin="round"/>
<path d="M830.0,51.3 L830.6,74.5 L831.2,77.5 L831.8,84.8 L832.4,75.6 L833.0,76.1 L833.6,64.5 L834.2,76.4 L834.8,75.8 L835.4,59.4 L836.0,62.1 L836.6,71.6 L837.2,74.8 L837.8,40.7 L838.4,71.7" fill="none" stroke="#f06a9a" stroke-width="1.1" stroke-linejoin="round"/>
<path d="M830.0,85.4 L830.6,72.9 L831.2,69.0 L831.8,70.7 L832.4,77.1 L833.0,76.7 L833.6,78.4 L834.2,76.5 L834.8,76.5 L835.4,80.7 L836.0,82.5 L836.6,77.7 L837.2,74.2 L837.8,66.7 L838.4,65.5" fill="none" stroke="#98cc44" stroke-width="1.1" stroke-linejoin="round"/>
<path d="M830.0,56.9 L830.6,75.7 L831.2,76.6 L831.8,38.1 L832.4,68.2 L833.0,67.6 L833.6,60.7 L834.2,44.1 L834.8,52.9 L835.4,70.1 L836.0,74.2 L836.6,71.9 L837.2,72.3 L837.8,64.8 L838.4,74.3" fill="none" stroke="#f2b81c" stroke-width="1.1" stroke-linejoin="round"/>
<path d="M830.0,79.7 L830.6,81.3 L831.2,70.7 L831.8,80.3 L832.4,72.6 L833.0,71.7 L833.6,78.3 L834.2,66.9 L834.8,67.6 L835.4,64.9 L836.0,67.3 L836.6,60.4 L837.2,84.5 L837.8,76.0 L838.4,81.8" fill="none" stroke="#28b4ee" stroke-width="1.1" stroke-linejoin="round"/>
<path d="M838.4,81.8 L839.0,64.5 L839.6,63.1 L840.2,80.4 L840.8,72.0 L841.4,71.1 L842.0,70.2 L842.6,66.6 L843.2,69.3 L843.8,83.9 L844.4,67.1 L845.0,79.6 L845.6,73.5 L846.2,74.8 L846.8,76.8" fill="none" stroke="#28b4ee" stroke-width="1.1" stroke-linejoin="round"/>
<path d="M838.4,65.5 L839.0,72.6 L839.6,73.0 L840.2,73.7 L840.8,67.0 L841.4,72.3 L842.0,61.4 L842.6,65.9 L843.2,68.9 L843.8,76.9 L844.4,69.8 L845.0,67.7 L845.6,75.9 L846.2,74.4 L846.8,80.5" fill="none" stroke="#98cc44" stroke-width="1.1" stroke-linejoin="round"/>
<path d="M838.4,74.3 L839.0,71.3 L839.6,74.8 L840.2,66.7 L840.8,62.9 L841.4,52.4 L842.0,80.9 L842.6,66.4 L843.2,60.1 L843.8,46.3 L844.4,72.4 L845.0,51.0 L845.6,69.4 L846.2,70.3 L846.8,77.6" fill="none" stroke="#f2b81c" stroke-width="1.1" stroke-linejoin="round"/>
<path d="M838.4,71.7 L839.0,71.3 L839.6,69.1 L840.2,71.2 L840.8,69.5 L841.4,50.3 L842.0,68.8 L842.6,64.1 L843.2,56.8 L843.8,70.1 L844.4,77.3 L845.0,53.8 L845.6,53.5 L846.2,53.5 L846.8,82.1" fill="none" stroke="#f06a9a" stroke-width="1.1" stroke-linejoin="round"/>
<path d="M846.8,80.5 L847.4,75.9 L848.0,75.1 L848.6,72.6 L849.2,78.2 L849.8,68.3 L850.4,63.1 L851.0,77.7 L851.6,69.9 L852.2,72.1 L852.8,75.4 L853.4,77.5 L854.0,55.0 L854.6,66.2 L855.2,79.9" fill="none" stroke="#98cc44" stroke-width="1.1" stroke-linejoin="round"/>
<path d="M846.8,82.1 L847.4,67.8 L848.0,67.6 L848.6,57.0 L849.2,57.2 L849.8,45.2 L850.4,69.7 L851.0,71.2 L851.6,46.9 L852.2,59.8 L852.8,66.4 L853.4,71.3 L854.0,71.7 L854.6,75.8 L855.2,75.6" fill="none" stroke="#f06a9a" stroke-width="1.1" stroke-linejoin="round"/>
<path d="M846.8,77.6 L847.4,62.3 L848.0,50.9 L848.6,77.9 L849.2,74.9 L849.8,68.4 L850.4,72.5 L851.0,83.4 L851.6,71.1 L852.2,62.3 L852.8,70.5 L853.4,74.4 L854.0,72.4 L854.6,71.6 L855.2,71.4" fill="none" stroke="#f2b81c" stroke-width="1.1" stroke-linejoin="round"/>
<path d="M846.8,76.8 L847.4,67.0 L848.0,75.2 L848.6,72.3 L849.2,84.7 L849.8,73.1 L850.4,77.0 L851.0,73.1 L851.6,75.0 L852.2,74.4 L852.8,74.2 L853.4,78.6 L854.0,76.1 L854.6,75.9 L855.2,78.0" fill="none" stroke="#28b4ee" stroke-width="1.1" stroke-linejoin="round"/>
<path d="M855.2,75.6 L855.8,74.0 L856.4,75.4 L857.0,50.4 L857.6,56.5 L858.2,72.8 L858.8,68.6 L859.4,67.9 L860.0,44.5 L860.6,46.0 L861.2,72.9 L861.8,71.5 L862.4,66.5 L863.0,63.7 L863.6,46.0" fill="none" stroke="#f06a9a" stroke-width="1.1" stroke-linejoin="round"/>
<path d="M855.2,78.0 L855.8,69.3 L856.4,71.5 L857.0,73.0 L857.6,74.5 L858.2,80.6 L858.8,61.9 L859.4,68.1 L860.0,67.0 L860.6,72.9 L861.2,71.9 L861.8,65.0 L862.4,69.6 L863.0,69.5 L863.6,65.4" fill="none" stroke="#28b4ee" stroke-width="1.1" stroke-linejoin="round"/>
<path d="M855.2,79.9 L855.8,61.3 L856.4,75.5 L857.0,71.1 L857.6,68.3 L858.2,74.3 L858.8,66.1 L859.4,79.3 L860.0,84.5 L860.6,69.8 L861.2,74.2 L861.8,84.8 L862.4,79.3 L863.0,74.6 L863.6,84.8" fill="none" stroke="#98cc44" stroke-width="1.1" stroke-linejoin="round"/>
<path d="M855.2,71.4 L855.8,59.2 L856.4,75.0 L857.0,76.0 L857.6,74.4 L858.2,70.4 L858.8,70.2 L859.4,71.3 L860.0,69.4 L860.6,49.6 L861.2,65.2 L861.8,75.5 L862.4,63.3 L863.0,59.8 L863.6,71.0" fill="none" stroke="#f2b81c" stroke-width="1.1" stroke-linejoin="round"/>
<path d="M863.6,46.0 L864.2,70.2 L864.8,74.9 L865.4,79.5 L866.0,69.2 L866.6,68.3 L867.2,58.4 L867.8,78.1 L868.4,80.5 L869.0,64.1 L869.6,71.8 L870.2,70.8 L870.8,62.3 L871.4,37.6 L872.0,63.7" fill="none" stroke="#f06a9a" stroke-width="1.1" stroke-linejoin="round"/>
<path d="M863.6,84.8 L864.2,66.4 L864.8,74.7 L865.4,76.9 L866.0,74.8 L866.6,80.2 L867.2,64.8 L867.8,76.0 L868.4,70.6 L869.0,81.5 L869.6,81.2 L870.2,70.0 L870.8,69.4 L871.4,75.7 L872.0,69.8" fill="none" stroke="#98cc44" stroke-width="1.1" stroke-linejoin="round"/>
<path d="M863.6,65.4 L864.2,68.8 L864.8,70.7 L865.4,79.1 L866.0,74.6 L866.6,70.7 L867.2,70.4 L867.8,73.2 L868.4,80.7 L869.0,81.7 L869.6,71.5 L870.2,72.4 L870.8,74.3 L871.4,73.7 L872.0,66.1" fill="none" stroke="#28b4ee" stroke-width="1.1" stroke-linejoin="round"/>
<path d="M863.6,71.0 L864.2,67.1 L864.8,61.5 L865.4,70.7 L866.0,80.4 L866.6,81.9 L867.2,72.6 L867.8,70.9 L868.4,80.7 L869.0,75.2 L869.6,76.4 L870.2,72.6 L870.8,61.0 L871.4,60.4 L872.0,72.7" fill="none" stroke="#f2b81c" stroke-width="1.1" stroke-linejoin="round"/>
<path d="M872.0,66.1 L872.6,74.0 L873.2,74.6 L873.8,74.9 L874.4,79.6 L875.0,76.1 L875.6,70.4 L876.2,64.0 L876.8,70.3 L877.4,67.4 L878.0,75.4 L878.6,70.9 L879.2,65.4 L879.8,69.1 L880.4,79.1" fill="none" stroke="#28b4ee" stroke-width="1.1" stroke-linejoin="round"/>
<path d="M872.0,72.7 L872.6,60.4 L873.2,76.3 L873.8,76.2 L874.4,79.1 L875.0,70.2 L875.6,79.5 L876.2,75.7 L876.8,71.0 L877.4,73.3 L878.0,61.9 L878.6,32.7 L879.2,75.4 L879.8,73.8 L880.4,81.1" fill="none" stroke="#f2b81c" stroke-width="1.1" stroke-linejoin="round"/>
<path d="M872.0,69.8 L872.6,71.1 L873.2,76.1 L873.8,70.4 L874.4,84.3 L875.0,73.6 L875.6,70.0 L876.2,67.4 L876.8,72.3 L877.4,82.9 L878.0,79.1 L878.6,82.8 L879.2,82.4 L879.8,78.3 L880.4,70.7" fill="none" stroke="#98cc44" stroke-width="1.1" stroke-linejoin="round"/>
<path d="M872.0,63.7 L872.6,72.3 L873.2,50.1 L873.8,55.2 L874.4,28.0 L875.0,74.3 L875.6,70.9 L876.2,68.4 L876.8,65.0 L877.4,61.3 L878.0,68.5 L878.6,66.7 L879.2,66.3 L879.8,69.2 L880.4,69.9" fill="none" stroke="#f06a9a" stroke-width="1.1" stroke-linejoin="round"/>
<path d="M880.4,81.1 L881.0,73.3 L881.6,68.0 L882.2,66.2 L882.8,63.0 L883.4,70.1 L884.0,47.6 L884.6,55.9 L885.2,73.0 L885.8,45.1 L886.4,46.0 L887.0,58.1 L887.6,58.7 L888.2,60.9 L888.8,70.1" fill="none" stroke="#f2b81c" stroke-width="1.1" stroke-linejoin="round"/>
<path d="M880.4,79.1 L881.0,68.7 L881.6,73.7 L882.2,79.0 L882.8,74.6 L883.4,65.5 L884.0,64.9 L884.6,68.0 L885.2,73.7 L885.8,72.4 L886.4,66.7 L887.0,70.9 L887.6,71.1 L888.2,62.0 L888.8,64.1" fill="none" stroke="#28b4ee" stroke-width="1.1" stroke-linejoin="round"/>
<path d="M880.4,70.7 L881.0,72.8 L881.6,74.4 L882.2,63.4 L882.8,77.4 L883.4,68.0 L884.0,73.6 L884.6,70.8 L885.2,76.6 L885.8,88.9 L886.4,66.3 L887.0,73.8 L887.6,86.6 L888.2,68.8 L888.8,72.6" fill="none" stroke="#98cc44" stroke-width="1.1" stroke-linejoin="round"/>
<path d="M880.4,69.9 L881.0,79.4 L881.6,52.6 L882.2,71.3 L882.8,61.9 L883.4,57.8 L884.0,41.7 L884.6,73.3 L885.2,56.3 L885.8,60.7 L886.4,71.8 L887.0,57.9 L887.6,69.7 L888.2,68.9 L888.8,73.8" fill="none" stroke="#f06a9a" stroke-width="1.1" stroke-linejoin="round"/>
<path d="M888.8,64.1 L889.4,72.1 L890.0,75.9 L890.6,68.9 L891.2,70.3 L891.8,78.0 L892.4,66.5 L893.0,71.4 L893.6,70.4 L894.2,80.9 L894.8,70.5 L895.4,69.9 L896.0,79.3 L896.6,89.9 L897.2,79.0" fill="none" stroke="#28b4ee" stroke-width="1.1" stroke-linejoin="round"/>
<path d="M888.8,72.6 L889.4,76.3 L890.0,78.1 L890.6,67.9 L891.2,79.2 L891.8,81.0 L892.4,91.6 L893.0,76.5 L893.6,71.3 L894.2,75.6 L894.8,58.3 L895.4,75.0 L896.0,82.2 L896.6,73.2 L897.2,73.1" fill="none" stroke="#98cc44" stroke-width="1.1" stroke-linejoin="round"/>
<path d="M888.8,70.1 L889.4,66.7 L890.0,67.6 L890.6,55.5 L891.2,62.7 L891.8,56.5 L892.4,65.7 L893.0,69.3 L893.6,70.2 L894.2,46.9 L894.8,58.9 L895.4,83.9 L896.0,50.4 L896.6,72.8 L897.2,63.5" fill="none" stroke="#f2b81c" stroke-width="1.1" stroke-linejoin="round"/>
<path d="M888.8,73.8 L889.4,75.4 L890.0,56.6 L890.6,72.9 L891.2,64.1 L891.8,67.0 L892.4,60.9 L893.0,69.8 L893.6,45.2 L894.2,65.1 L894.8,73.6 L895.4,61.8 L896.0,80.1 L896.6,63.6 L897.2,72.2" fill="none" stroke="#f06a9a" stroke-width="1.1" stroke-linejoin="round"/>
<path d="M897.2,72.2 L897.8,67.9 L898.4,67.2 L899.0,59.4 L899.6,63.2 L900.2,67.8 L900.8,57.2 L901.4,74.9 L902.0,77.6 L902.6,46.8 L903.2,72.8 L903.8,69.5 L904.4,69.9 L905.0,82.6 L905.6,75.4" fill="none" stroke="#f06a9a" stroke-width="1.1" stroke-linejoin="round"/>
<path d="M897.2,63.5 L897.8,71.6 L898.4,67.1 L899.0,69.5 L899.6,53.7 L900.2,74.0 L900.8,80.2 L901.4,36.6 L902.0,52.5 L902.6,46.3 L903.2,67.2 L903.8,77.5 L904.4,77.8 L905.0,77.1 L905.6,70.8" fill="none" stroke="#f2b81c" stroke-width="1.1" stroke-linejoin="round"/>
<path d="M897.2,73.1 L897.8,72.4 L898.4,74.7 L899.0,65.4 L899.6,82.3 L900.2,69.5 L900.8,69.7 L901.4,83.2 L902.0,73.4 L902.6,71.0 L903.2,83.9 L903.8,75.0 L904.4,80.0 L905.0,71.3 L905.6,62.5" fill="none" stroke="#98cc44" stroke-width="1.1" stroke-linejoin="round"/>
<path d="M897.2,79.0 L897.8,79.6 L898.4,80.6 L899.0,75.4 L899.6,71.6 L900.2,81.0 L900.8,74.4 L901.4,66.5 L902.0,69.0 L902.6,71.8 L903.2,67.7 L903.8,70.9 L904.4,69.0 L905.0,69.4 L905.6,63.9" fill="none" stroke="#28b4ee" stroke-width="1.1" stroke-linejoin="round"/>
<path d="M905.6,75.4 L906.2,71.3 L906.8,71.3 L907.4,45.7 L908.0,76.0 L908.6,62.9 L909.2,71.7 L909.8,69.6 L910.4,73.9 L911.0,81.0 L911.6,75.0 L912.2,76.9 L912.8,68.5 L913.4,73.1 L914.0,75.5" fill="none" stroke="#f06a9a" stroke-width="1.1" stroke-linejoin="round"/>
<path d="M905.6,62.5 L906.2,73.5 L906.8,81.0 L907.4,69.1 L908.0,74.7 L908.6,76.1 L909.2,73.7 L909.8,72.8 L910.4,77.8 L911.0,74.3 L911.6,69.3 L912.2,78.0 L912.8,76.9 L913.4,74.2 L914.0,76.8" fill="none" stroke="#98cc44" stroke-width="1.1" stroke-linejoin="round"/>
<path d="M905.6,63.9 L906.2,79.9 L906.8,67.8 L907.4,67.8 L908.0,78.5 L908.6,73.9 L909.2,74.2 L909.8,83.9 L910.4,72.0 L911.0,69.4 L911.6,70.7 L912.2,71.7 L912.8,76.9 L913.4,78.7 L914.0,81.2" fill="none" stroke="#28b4ee" stroke-width="1.1" stroke-linejoin="round"/>
<path d="M905.6,70.8 L906.2,65.1 L906.8,76.9 L907.4,63.7 L908.0,61.1 L908.6,69.6 L909.2,55.1 L909.8,65.8 L910.4,55.5 L911.0,69.8 L911.6,75.2 L912.2,60.8 L912.8,69.1 L913.4,72.5 L914.0,58.8" fill="none" stroke="#f2b81c" stroke-width="1.1" stroke-linejoin="round"/>
<path d="M914.0,76.8 L914.6,56.5 L915.2,74.9 L915.8,74.9 L916.4,63.8 L917.0,88.4 L917.6,78.1 L918.2,73.0 L918.8,73.0 L919.4,76.6 L920.0,76.1 L920.6,65.3 L921.2,72.5 L921.8,77.0 L922.4,78.4" fill="none" stroke="#98cc44" stroke-width="1.1" stroke-linejoin="round"/>
<path d="M914.0,81.2 L914.6,73.1 L915.2,77.2 L915.8,70.4 L916.4,73.0 L917.0,76.0 L917.6,68.8 L918.2,83.8 L918.8,71.5 L919.4,68.1 L920.0,67.6 L920.6,73.4 L921.2,80.6 L921.8,65.3 L922.4,73.6" fill="none" stroke="#28b4ee" stroke-width="1.1" stroke-linejoin="round"/>
<path d="M914.0,58.8 L914.6,67.5 L915.2,61.4 L915.8,78.8 L916.4,62.0 L917.0,70.3 L917.6,54.6 L918.2,57.6 L918.8,72.8 L919.4,68.2 L920.0,74.3 L920.6,70.0 L921.2,86.1 L921.8,64.3 L922.4,73.7" fill="none" stroke="#f2b81c" stroke-width="1.1" stroke-linejoin="round"/>
<path d="M914.0,75.5 L914.6,58.1 L915.2,83.4 L915.8,66.3 L916.4,56.6 L917.0,81.2 L917.6,83.6 L918.2,65.3 L918.8,65.8 L919.4,90.3 L920.0,72.2 L920.6,51.5 L921.2,64.6 L921.8,82.8 L922.4,74.6" fill="none" stroke="#f06a9a" stroke-width="1.1" stroke-linejoin="round"/>
<path d="M922.4,73.6 L923.0,69.0 L923.6,78.3 L924.2,70.9 L924.8,62.2 L925.4,68.4 L926.0,73.0 L926.6,74.4 L927.2,83.6 L927.8,77.8 L928.4,71.3 L929.0,80.0 L929.6,74.7 L930.2,84.4 L930.8,70.2" fill="none" stroke="#28b4ee" stroke-width="1.1" stroke-linejoin="round"/>
<path d="M922.4,73.7 L923.0,57.2 L923.6,60.2 L924.2,46.7 L924.8,83.6 L925.4,41.9 L926.0,69.8 L926.6,66.5 L927.2,75.8 L927.8,64.5 L928.4,82.6 L929.0,77.4 L929.6,75.2 L930.2,74.7 L930.8,77.9" fill="none" stroke="#f2b81c" stroke-width="1.1" stroke-linejoin="round"/>
<path d="M922.4,78.4 L923.0,80.0 L923.6,69.3 L924.2,69.5 L924.8,77.6 L925.4,71.2 L926.0,75.9 L926.6,69.7 L927.2,78.3 L927.8,74.1 L928.4,78.3 L929.0,74.1 L929.6,70.6 L930.2,68.7 L930.8,75.2" fill="none" stroke="#98cc44" stroke-width="1.1" stroke-linejoin="round"/>
<path d="M922.4,74.6 L923.0,73.5 L923.6,76.6 L924.2,73.1 L924.8,62.6 L925.4,48.5 L926.0,71.4 L926.6,52.7 L927.2,68.0 L927.8,78.6 L928.4,70.9 L929.0,69.9 L929.6,70.0 L930.2,73.5 L930.8,76.0" fill="none" stroke="#f06a9a" stroke-width="1.1" stroke-linejoin="round"/>
<path d="M930.8,76.0 L931.4,57.4 L932.0,72.3 L932.6,82.0 L933.2,74.6 L933.8,62.2 L934.4,62.6 L935.0,44.2 L935.6,59.0 L936.2,78.5 L936.8,69.2 L937.4,62.5 L938.0,66.2 L938.6,71.7 L939.2,72.7" fill="none" stroke="#f06a9a" stroke-width="1.1" stroke-linejoin="round"/>
<path d="M930.8,77.9 L931.4,74.9 L932.0,83.4 L932.6,78.6 L933.2,71.9 L933.8,74.3 L934.4,74.2 L935.0,80.1 L935.6,71.1 L936.2,72.7 L936.8,61.9 L937.4,78.9 L938.0,75.5 L938.6,69.6 L939.2,83.9" fill="none" stroke="#f2b81c" stroke-width="1.1" stroke-linejoin="round"/>
<path d="M930.8,75.2 L931.4,70.7 L932.0,66.3 L932.6,73.1 L933.2,81.6 L933.8,84.4 L934.4,81.4 L935.0,87.1 L935.6,76.8 L936.2,77.1 L936.8,70.6 L937.4,72.0 L938.0,85.4 L938.6,78.5 L939.2,77.6" fill="none" stroke="#98cc44" stroke-width="1.1" stroke-linejoin="round"/>
<path d="M930.8,70.2 L931.4,70.6 L932.0,74.8 L932.6,82.8 L933.2,73.1 L933.8,83.7 L934.4,77.6 L935.0,78.8 L935.6,82.8 L936.2,83.0 L936.8,78.9 L937.4,85.5 L938.0,72.8 L938.6,63.0 L939.2,79.4" fill="none" stroke="#28b4ee" stroke-width="1.1" stroke-linejoin="round"/>
<path d="M939.2,83.9 L939.8,72.0 L940.4,61.6 L941.0,78.4 L941.6,69.6 L942.2,38.2 L942.8,72.3 L943.4,70.4 L944.0,71.3 L944.6,69.8 L945.2,62.7 L945.8,70.0 L946.4,51.1 L947.0,65.7 L947.6,73.1" fill="none" stroke="#f2b81c" stroke-width="1.1" stroke-linejoin="round"/>
<path d="M939.2,72.7 L939.8,69.9 L940.4,65.9 L941.0,74.8 L941.6,79.4 L942.2,64.4 L942.8,62.0 L943.4,75.5 L944.0,50.4 L944.6,58.2 L945.2,59.0 L945.8,66.6 L946.4,62.7 L947.0,55.6 L947.6,68.4" fill="none" stroke="#f06a9a" stroke-width="1.1" stroke-linejoin="round"/>
<path d="M939.2,79.4 L939.8,76.6 L940.4,73.0 L941.0,80.0 L941.6,62.5 L942.2,71.5 L942.8,78.0 L943.4,72.1 L944.0,76.6 L944.6,73.3 L945.2,66.2 L945.8,65.9 L946.4,73.4 L947.0,66.5 L947.6,80.8" fill="none" stroke="#28b4ee" stroke-width="1.1" stroke-linejoin="round"/>
<path d="M939.2,77.6 L939.8,88.8 L940.4,85.6 L941.0,69.7 L941.6,80.4 L942.2,70.4 L942.8,80.4 L943.4,63.7 L944.0,69.6 L944.6,68.9 L945.2,86.9 L945.8,63.5 L946.4,80.0 L947.0,79.8 L947.6,73.6" fill="none" stroke="#98cc44" stroke-width="1.1" stroke-linejoin="round"/>
</svg>
<rect x="536.5" y="27.5" width="412" height="104" fill="none" stroke="#5a5a5a" stroke-width="1"/>
<svg x="536" y="156" width="412" height="109" viewBox="536 156 412 109" overflow="hidden">
<path d="M536.0,233.2 L536.8,231.6 L537.6,232.4 L538.4,232.0 L539.2,231.9 L540.0,231.8 L540.8,232.1 L541.6,232.8 L542.4,232.6 L543.2,232.5 L544.0,232.5 L544.8,232.0 L545.6,232.3 L546.4,231.9 L547.2,232.3 L548.0,232.0 L548.8,233.0 L549.6,232.7 L550.4,232.4 L551.2,232.7 L552.0,231.9 L552.8,232.5 L553.6,232.9 L554.4,232.0 L555.2,232.0 L556.0,232.6 L556.8,232.2 L557.6,232.3 L558.4,232.2 L559.2,233.0 L560.0,233.0 L560.8,232.2 L561.6,232.7 L562.4,233.5 L563.2,232.5 L564.0,232.1 L564.8,232.3 L565.6,232.5 L566.4,232.4 L567.2,232.1 L568.0,232.7 L568.8,231.8 L569.6,232.5 L570.4,231.8 L571.2,232.4 L572.0,232.5 L572.8,232.3 L573.6,232.4 L574.4,231.6 L575.2,232.3 L576.0,232.7 L576.8,232.8 L577.6,232.2 L578.4,232.3 L579.2,232.6 L580.0,233.0 L580.8,232.5 L581.6,232.6 L582.4,232.6 L583.2,233.4 L584.0,232.6 L584.8,232.3 L585.6,232.0 L586.4,232.2 L587.2,232.7 L588.0,232.5 L588.8,232.3 L589.6,232.3 L590.4,232.8 L591.2,232.3 L592.0,231.8 L592.8,233.3 L593.6,232.6 L594.4,232.6 L595.2,232.0 L596.0,232.5 L596.8,232.2 L597.6,232.9 L598.4,232.8 L599.2,232.3 L600.0,232.8 L600.8,232.5 L601.6,232.7 L602.4,232.0 L603.2,232.7 L604.0,232.5 L604.8,232.5 L605.6,232.8 L606.4,232.1 L607.2,233.0 L608.0,232.4 L608.8,232.3 L609.6,232.9 L610.4,233.1 L611.2,233.0 L612.0,231.8 L612.8,232.7 L613.6,233.0 L614.4,233.0 L615.2,232.7 L616.0,232.6 L616.8,233.2 L617.6,232.7 L618.4,232.0 L619.2,232.2 L620.0,231.3 L620.8,232.9 L621.6,232.0 L622.4,232.1 L623.2,232.1 L624.0,232.3 L624.8,232.2 L625.6,232.2 L626.4,232.4 L627.2,233.0 L628.0,232.8 L628.8,232.1 L629.6,232.5 L630.4,232.8 L631.2,232.3 L632.0,231.9 L632.8,232.3 L633.6,233.0 L634.4,233.7 L635.2,232.5 L636.0,231.5 L636.8,232.1 L637.6,233.3 L638.4,233.3 L639.2,231.8 L640.0,232.5 L640.8,232.6 L641.6,232.6 L642.4,232.5 L643.2,232.4 L644.0,232.3 L644.8,232.0 L645.6,232.5 L646.4,232.4 L647.2,232.3 L648.0,232.2 L648.8,231.3 L649.6,232.3 L650.4,232.8 L651.2,232.4 L652.0,232.0 L652.8,233.3 L653.6,231.2 L654.4,232.5 L655.2,232.9 L656.0,232.7 L656.8,232.9 L657.6,231.5 L658.4,233.1 L659.2,232.2 L660.0,231.0 L660.8,232.7 L661.6,231.6 L662.4,231.9 L663.2,232.8 L664.0,232.7 L664.8,232.7 L665.6,233.5 L666.4,231.8 L667.2,232.6 L668.0,232.9 L668.8,231.9 L669.6,232.8 L670.4,232.1 L671.2,232.2 L672.0,232.8 L672.8,232.1 L673.6,232.5 L674.4,231.7 L675.2,232.9 L676.0,232.3 L676.8,231.7 L677.6,232.0 L678.4,232.4 L679.2,232.5 L680.0,232.7 L680.8,231.8 L681.6,232.4 L682.4,231.6 L683.2,232.7 L684.0,233.3 L684.8,231.7 L685.6,231.6 L686.4,231.6 L687.2,232.1 L688.0,232.7 L688.8,232.5 L689.6,231.8 L690.4,232.2 L691.2,232.3 L692.0,232.5 L692.8,232.5 L693.6,232.3 L694.4,232.7 L695.2,232.2 L696.0,232.2 L696.8,231.8 L697.6,232.4 L698.4,232.8 L699.2,232.4 L700.0,233.0 L700.8,232.3 L701.6,233.0 L702.4,232.4 L703.2,232.6 L704.0,232.3 L704.8,232.1 L705.6,232.8 L706.4,232.3 L707.2,232.3 L708.0,233.1 L708.8,232.8 L709.6,232.1 L710.4,232.4 L711.2,232.0 L712.0,232.8 L712.8,232.4 L713.6,232.4 L714.4,232.4 L715.2,231.8 L716.0,232.2 L716.8,232.3 L717.6,232.9 L718.4,232.0 L719.2,232.6 L720.0,232.6 L720.8,232.9 L721.6,232.3 L722.4,232.3 L723.2,232.7 L724.0,232.2 L724.8,232.1 L725.6,232.4 L726.4,232.2 L727.2,232.0 L728.0,232.0 L728.8,232.2 L729.6,232.2 L730.4,232.4 L731.2,232.9 L732.0,232.3 L732.8,232.0 L733.6,233.2 L734.4,232.2 L735.2,233.2 L736.0,232.2 L736.8,232.5 L737.6,232.1 L737.8,232.2 L738.6,214.0 L739.3,194.0 L739.8,184.0 L740.3,177.2 L740.8,181.0 L741.2,198.0 L741.6,212.0 L742.2,218.3 L745.0,224.5 L748.0,232.0 L751.7,241.5 L752.5,241.4 L753.3,242.0 L754.1,242.9 L754.9,242.1 L755.7,241.4 L756.5,241.9 L757.3,241.0 L758.1,241.6 L758.9,241.9 L759.7,241.4 L760.5,241.5 L761.3,241.7 L762.1,241.1 L762.9,241.8 L763.7,242.4 L764.5,242.2 L765.3,241.6 L766.1,242.2 L766.9,241.6 L767.7,242.2 L768.5,241.8 L769.3,241.1 L770.1,242.5 L770.9,240.6 L771.7,241.6 L772.5,242.0 L773.3,242.1 L774.1,241.9 L774.9,241.8 L775.7,241.7 L776.5,241.6 L777.3,241.8 L778.1,242.2 L778.9,242.1 L779.7,241.6 L780.5,242.5 L781.3,241.8 L782.1,241.7 L782.9,241.6 L783.7,242.6 L784.5,241.4 L785.3,242.6 L786.1,241.5 L786.9,241.1 L787.7,241.6 L788.5,242.3 L789.3,242.3 L790.1,241.6 L790.9,242.2 L791.7,241.8 L792.5,242.0 L793.3,242.1 L794.1,241.1 L794.9,242.4 L795.7,241.9 L796.5,242.4 L797.3,242.0 L798.1,242.4 L798.9,242.9 L799.7,241.7 L800.5,242.4 L801.3,241.8 L802.1,242.9 L802.9,242.3 L803.7,241.9 L804.5,242.0 L805.3,242.7 L806.1,241.3 L806.9,242.6 L807.7,241.8 L808.5,242.1 L809.3,241.8 L810.1,242.0 L810.9,242.3 L811.7,242.4 L812.5,241.7 L813.3,241.8 L814.1,242.2 L814.9,242.5 L815.7,241.5 L816.5,242.2 L817.3,241.9 L818.1,241.8 L818.9,242.2 L819.7,242.0 L820.5,242.2 L821.3,241.3 L822.1,242.3 L822.9,242.4 L823.7,241.7 L824.5,243.0 L825.3,241.4 L826.1,242.4 L826.9,242.2 L827.7,242.1 L828.5,242.2 L829.3,242.7 L830.1,241.2 L830.9,242.4 L831.7,242.4 L832.5,241.5 L833.3,243.2 L834.1,242.1 L834.9,242.2 L835.7,242.0 L836.5,241.9 L837.3,242.3 L838.1,241.7 L838.9,241.8 L839.7,242.3 L840.5,242.2 L841.3,241.5 L842.1,242.3 L842.9,241.7 L843.7,242.4 L844.5,241.7 L845.3,241.6 L846.1,242.0 L846.9,241.7 L847.7,242.6 L848.5,243.0 L849.3,242.5 L850.1,242.3 L850.9,242.4 L851.7,242.8 L852.5,242.1 L853.3,242.1 L854.1,241.6 L854.9,242.2 L855.7,242.2 L856.5,242.1 L857.3,242.2 L858.1,241.9 L858.9,242.1 L859.7,242.4 L860.5,242.6 L861.3,241.7 L862.1,242.5 L862.9,241.8 L863.7,242.6 L864.5,242.6 L865.3,242.5 L866.1,242.4 L866.9,242.3 L867.7,242.3 L868.5,242.2 L869.3,242.4 L870.1,242.4 L870.9,240.9 L871.7,242.7 L872.5,242.4 L873.3,242.7 L874.1,242.3 L874.9,241.8 L875.7,243.6 L876.5,242.7 L877.3,242.1 L878.1,242.0 L878.9,241.7 L879.7,242.3 L880.5,242.4 L881.3,241.9 L882.1,242.9 L882.9,242.9 L883.7,242.3 L884.5,242.0 L885.3,242.6 L886.1,242.3 L886.9,242.3 L887.7,243.4 L888.5,241.8 L889.3,242.5 L890.1,242.4 L890.9,242.3 L891.7,242.7 L892.5,242.6 L893.3,241.5 L894.1,241.4 L894.9,242.2 L895.7,242.5 L896.5,242.8 L897.3,242.1 L898.1,242.8 L898.9,242.8 L899.7,243.4 L900.5,242.5 L901.3,242.1 L902.1,242.6 L902.9,242.9 L903.7,242.0 L904.5,242.9 L905.3,242.7 L906.1,241.4 L906.9,242.8 L907.7,242.7 L908.5,241.7 L909.3,243.3 L910.1,241.9 L910.9,242.7 L911.7,242.8 L912.5,242.1 L913.3,242.0 L914.1,243.1 L914.9,241.7 L915.7,241.5 L916.5,242.4 L917.3,243.7 L918.1,241.7 L918.9,242.7 L919.7,242.2 L920.5,242.2 L921.3,242.7 L922.1,242.5 L922.9,242.5 L923.7,243.1 L924.5,242.8 L925.3,242.4 L926.1,242.7 L926.9,242.5 L927.7,242.4 L928.5,243.1 L929.3,242.5 L930.1,242.1 L930.9,243.1 L931.7,242.1 L932.5,242.3 L933.3,243.1 L934.1,242.0 L934.9,243.3 L935.7,242.6 L936.5,243.0 L937.3,242.7 L938.1,243.1 L938.9,243.0 L939.7,242.1 L940.5,242.7 L941.3,243.2 L942.1,243.6 L942.9,242.0 L943.7,242.9 L944.5,243.8 L945.3,244.3 L946.1,243.4 L946.9,242.3 L947.7,243.8" fill="none" stroke="#f0902a" stroke-width="1.1" stroke-linejoin="round"/>
</svg>
<rect x="536.5" y="156.5" width="412" height="109" fill="none" stroke="#5a5a5a" stroke-width="1"/>
<svg x="536" y="291" width="412" height="104" viewBox="536 291 412 104" overflow="hidden">
<path d="M536,317.6 H739.4 L742,341 Q744,352 748.6,357.3 L781,365.5 L807.8,369.2 H949" fill="none" stroke="#cc2424" stroke-width="1.1"/>
<path d="M536.0,377.6 L536.7,374.1 L537.4,373.9 L538.1,375.4 L538.8,378.1 L539.5,378.0 L540.2,377.0 L540.9,378.9 L541.6,373.7 L542.3,374.1 L543.0,375.8 L543.7,376.6 L544.4,372.9 L545.1,371.9 L545.8,366.6 L546.5,366.7 L547.2,367.3 L547.9,365.2 L548.6,370.4 L549.3,374.7 L550.0,374.0 L550.7,374.0 L551.4,377.9 L552.1,377.5 L552.8,378.8 L553.5,377.0 L554.2,377.7 L554.9,376.7 L555.6,373.3 L556.3,375.3 L557.0,377.5 L557.7,375.4 L558.4,374.0 L559.1,373.4 L559.8,369.5 L560.5,367.1 L561.2,367.1 L561.9,372.1 L562.6,372.4 L563.3,370.7 L564.0,372.4 L564.7,372.3 L565.4,367.9 L566.1,368.5 L566.8,369.2 L567.5,371.3 L568.2,374.2 L568.9,376.4 L569.6,375.4 L570.3,378.0 L571.0,372.0 L571.7,370.3 L572.4,370.4 L573.1,370.1 L573.8,369.2 L574.5,374.2 L575.2,376.9 L575.9,373.7 L576.6,374.7 L577.3,369.8 L578.0,368.2 L578.7,366.3 L579.4,370.2 L580.1,371.7 L580.8,376.1 L581.5,376.3 L582.2,374.8 L582.9,373.4 L583.6,372.9 L584.3,375.3 L585.0,373.3 L585.7,370.2 L586.4,369.2 L587.1,370.0 L587.8,368.7 L588.5,372.0 L589.2,376.0 L589.9,376.6 L590.6,377.2 L591.3,377.6 L592.0,372.9 L592.7,374.0 L593.4,373.1 L594.1,371.3 L594.8,371.6 L595.5,378.3 L596.2,380.4 L596.9,380.8 L597.6,380.9 L598.3,380.9 L599.0,376.4 L599.7,373.9 L600.4,374.1 L601.1,375.1 L601.8,377.3 L602.5,380.0 L603.2,384.0 L603.9,384.0 L604.6,380.6 L605.3,378.6 L606.0,378.2 L606.7,373.7 L607.4,376.4 L608.1,378.6 L608.8,377.3 L609.5,374.7 L610.2,373.9 L610.9,374.4 L611.6,373.1 L612.3,372.1 L613.0,370.0 L613.7,371.3 L614.4,363.3 L615.1,366.5 L615.8,366.7 L616.5,370.0 L617.2,371.2 L617.9,375.4 L618.6,372.3 L619.3,372.9 L620.0,373.2 L620.7,369.4 L621.4,369.8 L622.1,371.3 L622.8,366.4 L623.5,369.8 L624.2,368.9 L624.9,368.7 L625.6,366.2 L626.3,368.7 L627.0,364.7 L627.7,365.7 L628.4,367.7 L629.1,372.5 L629.8,378.2 L630.5,377.7 L631.2,377.0 L631.9,376.5 L632.6,373.3 L633.3,369.4 L634.0,367.6 L634.7,369.3 L635.4,370.1 L636.1,370.4 L636.8,371.5 L637.5,377.1 L638.2,373.1 L638.9,368.9 L639.6,369.9 L640.3,369.9 L641.0,364.2 L641.7,368.5 L642.4,373.7 L643.1,373.2 L643.8,372.1 L644.5,373.6 L645.2,373.6 L645.9,372.3 L646.6,372.2 L647.3,370.3 L648.0,369.4 L648.7,368.3 L649.4,367.8 L650.1,365.6 L650.8,365.0 L651.5,371.3 L652.2,375.1 L652.9,376.5 L653.6,376.2 L654.3,379.7 L655.0,376.4 L655.7,378.1 L656.4,375.9 L657.1,379.9 L657.8,383.3 L658.5,384.0 L659.2,380.3 L659.9,380.4 L660.6,379.7 L661.3,377.1 L662.0,377.9 L662.7,378.0 L663.4,380.4 L664.1,376.8 L664.8,369.9 L665.5,367.5 L666.2,366.5 L666.9,366.3 L667.6,368.6 L668.3,376.9 L669.0,376.0 L669.7,376.8 L670.4,369.9 L671.1,370.5 L671.8,369.8 L672.5,368.8 L673.2,370.1 L673.9,373.5 L674.6,370.2 L675.3,368.3 L676.0,371.0 L676.7,372.1 L677.4,372.2 L678.1,375.2 L678.8,373.9 L679.5,373.1 L680.2,370.0 L680.9,370.9 L681.6,370.2 L682.3,371.7 L683.0,370.8 L683.7,371.2 L684.4,372.2 L685.1,372.5 L685.8,372.8 L686.5,372.1 L687.2,374.1 L687.9,373.4 L688.6,375.5 L689.3,377.3 L690.0,379.0 L690.7,381.0 L691.4,379.9 L692.1,378.3 L692.8,374.8 L693.5,373.9 L694.2,370.1 L694.9,372.5 L695.6,372.4 L696.3,375.0 L697.0,376.9 L697.7,378.7 L698.4,375.3 L699.1,376.1 L699.8,371.8 L700.5,369.7 L701.2,366.3 L701.9,367.3 L702.6,367.2 L703.3,369.2 L704.0,370.1 L704.7,372.1 L705.4,377.0 L706.1,374.2 L706.8,371.8 L707.5,374.0 L708.2,369.4 L708.9,364.1 L709.6,367.8 L710.3,370.0 L711.0,367.5 L711.7,373.8 L712.4,377.7 L713.1,375.7 L713.8,376.4 L714.5,377.1 L715.2,371.7 L715.9,372.5 L716.6,370.0 L717.3,372.1 L718.0,375.5 L718.7,376.1 L719.4,372.8 L720.1,373.6 L720.8,370.4 L721.5,371.1 L722.2,375.1 L722.9,372.2 L723.6,377.3 L724.3,379.7 L725.0,374.8 L725.7,372.7 L726.4,374.8 L727.1,374.0 L727.8,373.0 L728.5,374.4 L729.2,376.6 L729.9,379.5 L730.6,381.1 L731.3,381.4 L732.0,379.0 L732.7,378.5 L733.4,376.7 L734.1,374.9 L734.8,372.1 L735.5,371.6 L736.2,367.9 L736.9,369.3 L737.6,364.3 L738.3,365.2 L739.0,366.6 L739.7,366.1 L740.4,366.6 L741.1,318.0 L741.8,324.7 L742.5,329.1 L743.2,337.7 L743.9,340.7 L744.6,339.4 L745.3,336.6 L746.0,332.2 L746.7,326.9 L747.4,318.9 L748.1,322.3 L748.8,318.5 L749.5,316.4 L750.2,315.5 L750.9,313.0 L751.6,314.7 L752.3,316.2 L753.0,315.8 L753.7,320.1 L754.4,321.4 L755.1,322.0 L755.8,318.4 L756.5,320.2 L757.2,320.6 L757.9,319.6 L758.6,317.5 L759.3,319.8 L760.0,319.0 L760.7,311.2 L761.4,309.9 L762.1,307.8 L762.8,309.6 L763.5,313.4 L764.2,321.6 L764.9,324.1 L765.6,327.6 L766.3,327.0 L767.0,325.1 L767.7,324.4 L768.4,329.3 L769.1,324.0 L769.8,326.8 L770.5,330.0 L771.2,327.7 L771.9,322.0 L772.6,328.4 L773.3,328.1 L774.0,323.7 L774.7,322.1 L775.4,329.1 L776.1,322.4 L776.8,321.0 L777.5,320.9 L778.2,321.5 L778.9,323.1 L779.6,322.9 L780.3,318.5 L781.0,319.5 L781.7,320.7 L782.4,316.5 L783.1,317.7 L783.8,322.1 L784.5,324.9 L785.2,324.2 L785.9,323.6 L786.6,322.8 L787.3,323.4 L788.0,319.5 L788.7,323.2 L789.4,327.3 L790.1,332.3 L790.8,333.6 L791.5,335.4 L792.2,335.4 L792.9,329.4 L793.6,328.3 L794.3,325.4 L795.0,321.4 L795.7,318.6 L796.4,313.0 L797.1,315.7 L797.8,312.2 L798.5,318.9 L799.2,316.5 L799.9,323.9 L800.6,322.7 L801.3,321.4 L802.0,322.4 L802.7,325.6 L803.4,325.8 L804.1,318.3 L804.8,320.0 L805.5,318.7 L806.2,320.2 L806.9,322.9 L807.6,328.3 L808.3,338.0 L809.0,335.9 L809.7,331.1 L810.4,329.1 L811.1,323.6 L811.8,316.7 L812.5,314.2 L813.2,317.7 L813.9,312.6 L814.6,318.6 L815.3,319.8 L816.0,317.3 L816.7,319.7 L817.4,323.8 L818.1,326.5 L818.8,327.6 L819.5,330.4 L820.2,327.1 L820.9,324.9 L821.6,319.4 L822.3,321.1 L823.0,323.3 L823.7,319.5 L824.4,318.5 L825.1,322.0 L825.8,320.0 L826.5,317.3 L827.2,324.0 L827.9,324.6 L828.6,317.7 L829.3,312.4 L830.0,315.0 L830.7,315.9 L831.4,318.5 L832.1,321.9 L832.8,323.5 L833.5,325.1 L834.2,318.4 L834.9,319.7 L835.6,321.0 L836.3,322.6 L837.0,319.8 L837.7,320.8 L838.4,322.5 L839.1,323.4 L839.8,327.0 L840.5,329.9 L841.2,333.9 L841.9,333.8 L842.6,338.7 L843.3,343.9 L844.0,342.4 L844.7,343.9 L845.4,337.5 L846.1,328.2 L846.8,324.7 L847.5,328.1 L848.2,324.1 L848.9,328.5 L849.6,327.5 L850.3,325.3 L851.0,317.9 L851.7,322.5 L852.4,319.5 L853.1,328.4 L853.8,331.7 L854.5,332.5 L855.2,331.7 L855.9,335.0 L856.6,327.0 L857.3,321.3 L858.0,325.2 L858.7,326.0 L859.4,326.1 L860.1,330.2 L860.8,321.9 L861.5,325.4 L862.2,315.9 L862.9,319.8 L863.6,316.5 L864.3,321.6 L865.0,320.0 L865.7,323.7 L866.4,318.3 L867.1,316.9 L867.8,322.5 L868.5,313.2 L869.2,322.2 L869.9,322.5 L870.6,330.1 L871.3,329.2 L872.0,339.6 L872.7,334.9 L873.4,333.3 L874.1,329.8 L874.8,330.2 L875.5,323.8 L876.2,323.9 L876.9,323.7 L877.6,320.0 L878.3,317.6 L879.0,319.7 L879.7,314.5 L880.4,314.0 L881.1,316.9 L881.8,317.3 L882.5,318.3 L883.2,321.0 L883.9,325.5 L884.6,325.1 L885.3,324.3 L886.0,327.6 L886.7,334.4 L887.4,331.2 L888.1,330.9 L888.8,335.8 L889.5,327.4 L890.2,314.8 L890.9,310.8 L891.6,310.1 L892.3,306.5 L893.0,311.6 L893.7,317.6 L894.4,318.7 L895.1,321.2 L895.8,322.1 L896.5,319.8 L897.2,320.9 L897.9,325.2 L898.6,319.8 L899.3,324.5 L900.0,325.7 L900.7,323.6 L901.4,321.4 L902.1,325.0 L902.8,320.1 L903.5,322.5 L904.2,323.5 L904.9,327.6 L905.6,329.0 L906.3,331.3 L907.0,325.5 L907.7,323.3 L908.4,320.5 L909.1,317.7 L909.8,318.8 L910.5,322.7 L911.2,324.0 L911.9,326.2 L912.6,322.5 L913.3,322.6 L914.0,318.1 L914.7,316.1 L915.4,317.8 L916.1,324.9 L916.8,319.1 L917.5,317.3 L918.2,320.1 L918.9,315.6 L919.6,315.1 L920.3,316.9 L921.0,323.0 L921.7,319.6 L922.4,327.1 L923.1,323.4 L923.8,323.4 L924.5,321.8 L925.2,324.2 L925.9,316.5 L926.6,318.2 L927.3,319.0 L928.0,319.9 L928.7,321.7 L929.4,321.7 L930.1,322.7 L930.8,322.2 L931.5,327.7 L932.2,325.7 L932.9,330.8 L933.6,334.0 L934.3,330.6 L935.0,328.3 L935.7,323.0 L936.4,319.3 L937.1,318.4 L937.8,328.3 L938.5,325.1 L939.2,328.4 L939.9,334.6 L940.6,334.5 L941.3,328.9 L942.0,330.0 L942.7,332.0 L943.4,327.2 L944.1,323.7 L944.8,322.8 L945.5,320.3 L946.2,317.5 L946.9,316.1 L947.6,312.1" fill="none" stroke="#3c8ce6" stroke-width="1.2" stroke-linejoin="round"/>
</svg>
<rect x="536.5" y="291.5" width="412" height="104" fill="none" stroke="#5a5a5a" stroke-width="1"/>
<text transform="translate(56.00,143.00) scale(0.87,1)" fill="#22b422" stroke="#22b422" stroke-width="0.2" font-size="10.5" text-anchor="start" font-weight="normal" >-2.5 ms</text>
<text transform="translate(138.40,143.00) scale(0.87,1)" fill="#22b422" stroke="#22b422" stroke-width="0.2" font-size="10.5" text-anchor="middle" font-weight="normal" >-1.5 ms</text>
<text transform="translate(220.80,143.00) scale(0.87,1)" fill="#22b422" stroke="#22b422" stroke-width="0.2" font-size="10.5" text-anchor="middle" font-weight="normal" >-500 µs</text>
<text transform="translate(303.20,143.00) scale(0.87,1)" fill="#22b422" stroke="#22b422" stroke-width="0.2" font-size="10.5" text-anchor="middle" font-weight="normal" >500 µs</text>
<text transform="translate(385.60,143.00) scale(0.87,1)" fill="#22b422" stroke="#22b422" stroke-width="0.2" font-size="10.5" text-anchor="middle" font-weight="normal" >1.5 ms</text>
<text transform="translate(468.00,143.00) scale(0.87,1)" fill="#22b422" stroke="#22b422" stroke-width="0.2" font-size="10.5" text-anchor="end" font-weight="normal" >2.5 ms</text>
<text transform="translate(56.00,276.80) scale(0.87,1)" fill="#e88a2e" stroke="#e88a2e" stroke-width="0.2" font-size="10.5" text-anchor="start" font-weight="normal" >-2.5 ms</text>
<text transform="translate(138.40,276.80) scale(0.87,1)" fill="#e88a2e" stroke="#e88a2e" stroke-width="0.2" font-size="10.5" text-anchor="middle" font-weight="normal" >-1.5 ms</text>
<text transform="translate(220.80,276.80) scale(0.87,1)" fill="#e88a2e" stroke="#e88a2e" stroke-width="0.2" font-size="10.5" text-anchor="middle" font-weight="normal" >-500 µs</text>
<text transform="translate(303.20,276.80) scale(0.87,1)" fill="#e88a2e" stroke="#e88a2e" stroke-width="0.2" font-size="10.5" text-anchor="middle" font-weight="normal" >500 µs</text>
<text transform="translate(385.60,276.80) scale(0.87,1)" fill="#e88a2e" stroke="#e88a2e" stroke-width="0.2" font-size="10.5" text-anchor="middle" font-weight="normal" >1.5 ms</text>
<text transform="translate(468.00,276.80) scale(0.87,1)" fill="#e88a2e" stroke="#e88a2e" stroke-width="0.2" font-size="10.5" text-anchor="end" font-weight="normal" >2.5 ms</text>
<text transform="translate(56.00,407.10) scale(0.87,1)" fill="#e02222" stroke="#e02222" stroke-width="0.2" font-size="10.5" text-anchor="start" font-weight="normal" >-2.5 ms</text>
<text transform="translate(138.40,407.10) scale(0.87,1)" fill="#e02222" stroke="#e02222" stroke-width="0.2" font-size="10.5" text-anchor="middle" font-weight="normal" >-1.5 ms</text>
<text transform="translate(220.80,407.10) scale(0.87,1)" fill="#e02222" stroke="#e02222" stroke-width="0.2" font-size="10.5" text-anchor="middle" font-weight="normal" >-500 µs</text>
<text transform="translate(303.20,407.10) scale(0.87,1)" fill="#e02222" stroke="#e02222" stroke-width="0.2" font-size="10.5" text-anchor="middle" font-weight="normal" >500 µs</text>
<text transform="translate(385.60,407.10) scale(0.87,1)" fill="#e02222" stroke="#e02222" stroke-width="0.2" font-size="10.5" text-anchor="middle" font-weight="normal" >1.5 ms</text>
<text transform="translate(468.00,407.10) scale(0.87,1)" fill="#e02222" stroke="#e02222" stroke-width="0.2" font-size="10.5" text-anchor="end" font-weight="normal" >2.5 ms</text>
<text transform="translate(536.00,143.00) scale(0.87,1)" fill="#a2c83a" stroke="#a2c83a" stroke-width="0.2" font-size="10.5" text-anchor="start" font-weight="normal" >-2.5 ms</text>
<text transform="translate(618.40,143.00) scale(0.87,1)" fill="#a2c83a" stroke="#a2c83a" stroke-width="0.2" font-size="10.5" text-anchor="middle" font-weight="normal" >-1.5 ms</text>
<text transform="translate(700.80,143.00) scale(0.87,1)" fill="#a2c83a" stroke="#a2c83a" stroke-width="0.2" font-size="10.5" text-anchor="middle" font-weight="normal" >-500 µs</text>
<text transform="translate(783.20,143.00) scale(0.87,1)" fill="#a2c83a" stroke="#a2c83a" stroke-width="0.2" font-size="10.5" text-anchor="middle" font-weight="normal" >500 µs</text>
<text transform="translate(865.60,143.00) scale(0.87,1)" fill="#a2c83a" stroke="#a2c83a" stroke-width="0.2" font-size="10.5" text-anchor="middle" font-weight="normal" >1.5 ms</text>
<text transform="translate(948.00,143.00) scale(0.87,1)" fill="#a2c83a" stroke="#a2c83a" stroke-width="0.2" font-size="10.5" text-anchor="end" font-weight="normal" >2.5 ms</text>
<text transform="translate(536.00,276.80) scale(0.87,1)" fill="#e88a2e" stroke="#e88a2e" stroke-width="0.2" font-size="10.5" text-anchor="start" font-weight="normal" >-2.5 ms</text>
<text transform="translate(618.40,276.80) scale(0.87,1)" fill="#e88a2e" stroke="#e88a2e" stroke-width="0.2" font-size="10.5" text-anchor="middle" font-weight="normal" >-1.5 ms</text>
<text transform="translate(700.80,276.80) scale(0.87,1)" fill="#e88a2e" stroke="#e88a2e" stroke-width="0.2" font-size="10.5" text-anchor="middle" font-weight="normal" >-500 µs</text>
<text transform="translate(783.20,276.80) scale(0.87,1)" fill="#e88a2e" stroke="#e88a2e" stroke-width="0.2" font-size="10.5" text-anchor="middle" font-weight="normal" >500 µs</text>
<text transform="translate(865.60,276.80) scale(0.87,1)" fill="#e88a2e" stroke="#e88a2e" stroke-width="0.2" font-size="10.5" text-anchor="middle" font-weight="normal" >1.5 ms</text>
<text transform="translate(948.00,276.80) scale(0.87,1)" fill="#e88a2e" stroke="#e88a2e" stroke-width="0.2" font-size="10.5" text-anchor="end" font-weight="normal" >2.5 ms</text>
<text transform="translate(536.00,407.10) scale(0.87,1)" fill="#4a90e2" stroke="#4a90e2" stroke-width="0.2" font-size="10.5" text-anchor="start" font-weight="normal" >-2.5 ms</text>
<text transform="translate(618.40,407.10) scale(0.87,1)" fill="#4a90e2" stroke="#4a90e2" stroke-width="0.2" font-size="10.5" text-anchor="middle" font-weight="normal" >-1.5 ms</text>
<text transform="translate(700.80,407.10) scale(0.87,1)" fill="#4a90e2" stroke="#4a90e2" stroke-width="0.2" font-size="10.5" text-anchor="middle" font-weight="normal" >-500 µs</text>
<text transform="translate(783.20,407.10) scale(0.87,1)" fill="#4a90e2" stroke="#4a90e2" stroke-width="0.2" font-size="10.5" text-anchor="middle" font-weight="normal" >500 µs</text>
<text transform="translate(865.60,407.10) scale(0.87,1)" fill="#4a90e2" stroke="#4a90e2" stroke-width="0.2" font-size="10.5" text-anchor="middle" font-weight="normal" >1.5 ms</text>
<text transform="translate(948.00,407.10) scale(0.87,1)" fill="#4a90e2" stroke="#4a90e2" stroke-width="0.2" font-size="10.5" text-anchor="end" font-weight="normal" >2.5 ms</text>
<path d="M259.0,138.2 L262.5,133.2 L266.0,138.2 Z" fill="#22b422"/>
<path d="M259.0,271.8 L262.5,266.8 L266.0,271.8 Z" fill="#e88a2e"/>
<path d="M259.0,402.2 L262.5,397.2 L266.0,402.2 Z" fill="#e02222"/>
<path d="M739.0,138.2 L742.5,133.2 L746.0,138.2 Z" fill="#a2c83a"/>
<path d="M739.0,271.8 L742.5,266.8 L746.0,271.8 Z" fill="#e88a2e"/>
<path d="M739.0,402.2 L742.5,397.2 L746.0,402.2 Z" fill="#4a90e2"/>
<text transform="translate(53.50,37.80) scale(0.89,1)" fill="#22b422" stroke="#22b422" stroke-width="0.2" font-size="10.5" text-anchor="end" font-weight="normal" >1.342 V</text>
<text transform="translate(53.50,57.70) scale(0.89,1)" fill="#22b422" stroke="#22b422" stroke-width="0.2" font-size="10.5" text-anchor="end" font-weight="normal" >1.302 V</text>
<text transform="translate(53.50,83.80) scale(0.89,1)" fill="#22b422" stroke="#22b422" stroke-width="0.2" font-size="10.5" text-anchor="end" font-weight="normal" >1.262 V</text>
<text transform="translate(53.50,110.20) scale(0.89,1)" fill="#22b422" stroke="#22b422" stroke-width="0.2" font-size="10.5" text-anchor="end" font-weight="normal" >1.222 V</text>
<text transform="translate(53.50,131.00) scale(0.89,1)" fill="#22b422" stroke="#22b422" stroke-width="0.2" font-size="10.5" text-anchor="end" font-weight="normal" >1.182 V</text>
<text transform="translate(53.50,167.70) scale(0.89,1)" fill="#e88a2e" stroke="#e88a2e" stroke-width="0.2" font-size="10.5" text-anchor="end" font-weight="normal" >26.75 A</text>
<text transform="translate(53.50,189.00) scale(0.89,1)" fill="#e88a2e" stroke="#e88a2e" stroke-width="0.2" font-size="10.5" text-anchor="end" font-weight="normal" >18.75 A</text>
<text transform="translate(53.50,216.20) scale(0.89,1)" fill="#e88a2e" stroke="#e88a2e" stroke-width="0.2" font-size="10.5" text-anchor="end" font-weight="normal" >10.75 A</text>
<text transform="translate(53.50,243.20) scale(0.89,1)" fill="#e88a2e" stroke="#e88a2e" stroke-width="0.2" font-size="10.5" text-anchor="end" font-weight="normal" >2.75 A</text>
<text transform="translate(53.50,264.50) scale(0.89,1)" fill="#e88a2e" stroke="#e88a2e" stroke-width="0.2" font-size="10.5" text-anchor="end" font-weight="normal" >-5.25 A</text>
<text transform="translate(53.50,300.90) scale(0.89,1)" fill="#e02222" stroke="#e02222" stroke-width="0.2" font-size="10.5" text-anchor="end" font-weight="normal" >28.25 V</text>
<text transform="translate(53.50,321.10) scale(0.89,1)" fill="#e02222" stroke="#e02222" stroke-width="0.2" font-size="10.5" text-anchor="end" font-weight="normal" >18.25 V</text>
<text transform="translate(53.50,347.20) scale(0.89,1)" fill="#e02222" stroke="#e02222" stroke-width="0.2" font-size="10.5" text-anchor="end" font-weight="normal" >8.25 V</text>
<text transform="translate(53.50,373.80) scale(0.89,1)" fill="#e02222" stroke="#e02222" stroke-width="0.2" font-size="10.5" text-anchor="end" font-weight="normal" >-1.75 V</text>
<text transform="translate(53.50,394.20) scale(0.89,1)" fill="#e02222" stroke="#e02222" stroke-width="0.2" font-size="10.5" text-anchor="end" font-weight="normal" >-11.75 V</text>
<rect x="44.4" y="122.2" width="11.6" height="8.2" rx="2" fill="#00c000"/>
<text transform="translate(50.20,129.20) scale(0.85,1)" fill="#002200" stroke="#002200" stroke-width="0.2" font-size="9" text-anchor="middle" font-weight="normal" >C4</text>
<rect x="44.4" y="237.6" width="12" height="8.4" rx="2" fill="#ff8c1a"/>
<text transform="translate(50.40,244.60) scale(0.85,1)" fill="#3a1a00" stroke="#3a1a00" stroke-width="0.2" font-size="9" text-anchor="middle" font-weight="normal" >C8</text>
<rect x="44.2" y="355.8" width="12" height="7.6" rx="2" fill="#ff1010"/>
<text transform="translate(50.20,362.40) scale(0.85,1)" fill="#500000" stroke="#500000" stroke-width="0.2" font-size="9" text-anchor="middle" font-weight="normal" >C7</text>
<rect x="49" y="364.5" width="7" height="1" fill="#e02020"/>
<text transform="translate(56.00,384.00) scale(0.87,1)" fill="#8080ff" stroke="#8080ff" stroke-width="0.2" font-size="8.5" text-anchor="end" font-weight="normal" >C6</text>
<text transform="translate(56.00,263.00) scale(0.87,1)" fill="#c8f0c8" stroke="#c8f0c8" stroke-width="0.2" font-size="8.5" text-anchor="end" font-weight="normal" >C5</text>
<path d="M476,208 L470.5,211.5 L476,215 Z" fill="none" stroke="#e88a2e" stroke-width="1"/>
<path d="M46.5,131 L52.5,131 L49.5,135 Z" fill="#00c000"/><rect x="49" y="130" width="1" height="2" fill="#00c000"/>
<rect x="48" y="247" width="8" height="1" fill="#e88a2e"/>
<path d="M47,264 L52,264 L49.5,268 Z" fill="#d0d0d0"/><rect x="49" y="261" width="1" height="4" fill="#d0d0d0"/>
<rect x="47" y="386" width="9" height="1.2" fill="#8080ff"/>
<text transform="translate(533.00,366.00) scale(0.8,1)" fill="#e02020" font-size="9" text-anchor="end" font-weight="bold" >Me</text>
<rect x="527" y="369" width="9" height="1.2" fill="#e02020"/>
<path d="M527,131 L533,131 L530,135 Z" fill="#9ccc3c"/>
<path d="M527,265 L533,265 L530,269 Z" fill="#ff8c1a"/>
<path d="M527,395 L533,395 L530,399 Z" fill="#2a8cf0"/>
<text transform="translate(533.50,57.30) scale(0.89,1)" fill="#a2c83a" stroke="#a2c83a" stroke-width="0.2" font-size="10.5" text-anchor="end" font-weight="normal" >Δ1 mV</text>
<text transform="translate(533.50,83.70) scale(0.89,1)" fill="#a2c83a" stroke="#a2c83a" stroke-width="0.2" font-size="10.5" text-anchor="end" font-weight="normal" >Δ2 mV</text>
<text transform="translate(533.50,110.00) scale(0.89,1)" fill="#a2c83a" stroke="#a2c83a" stroke-width="0.2" font-size="10.5" text-anchor="end" font-weight="normal" >Δ3 mV</text>
<text transform="translate(533.50,189.00) scale(0.89,1)" fill="#e88a2e" stroke="#e88a2e" stroke-width="0.2" font-size="10.5" text-anchor="end" font-weight="normal" >Δ10 mV</text>
<text transform="translate(533.50,215.50) scale(0.89,1)" fill="#e88a2e" stroke="#e88a2e" stroke-width="0.2" font-size="10.5" text-anchor="end" font-weight="normal" >Δ20 mV</text>
<text transform="translate(533.50,242.50) scale(0.89,1)" fill="#e88a2e" stroke="#e88a2e" stroke-width="0.2" font-size="10.5" text-anchor="end" font-weight="normal" >Δ30 mV</text>
<text transform="translate(533.50,321.50) scale(0.89,1)" fill="#4a90e2" stroke="#4a90e2" stroke-width="0.2" font-size="10.5" text-anchor="end" font-weight="normal" >Δ40 mV</text>
<text transform="translate(533.50,347.50) scale(0.89,1)" fill="#4a90e2" stroke="#4a90e2" stroke-width="0.2" font-size="10.5" text-anchor="end" font-weight="normal" >Δ80 mV</text>
<text transform="translate(533.50,373.50) scale(0.89,1)" fill="#4a90e2" stroke="#4a90e2" stroke-width="0.2" font-size="10.5" text-anchor="end" font-weight="normal" >Δ120 mV</text>
<rect x="538" y="29" width="52" height="9.2" rx="2" fill="#a4d63a"/>
<text transform="translate(564.00,37.30) scale(0.86,1)" fill="#0e1400" stroke="#0e1400" stroke-width="0.2" font-size="10.5" text-anchor="middle" font-weight="normal" >1.201858 V</text>
<rect x="538" y="159.3" width="47" height="9" rx="2" fill="#ff8c1a"/>
<text transform="translate(561.50,167.40) scale(0.86,1)" fill="#201000" stroke="#201000" stroke-width="0.2" font-size="10.5" text-anchor="middle" font-weight="normal" >1.03046 V</text>
<rect x="538" y="293.3" width="47" height="9.2" rx="2" fill="#2a8cf0"/>
<text transform="translate(561.50,301.60) scale(0.86,1)" fill="#00102a" stroke="#00102a" stroke-width="0.2" font-size="10.5" text-anchor="middle" font-weight="normal" >12.0735 V</text>
<rect x="496.5" y="122.2" width="40" height="8.4" rx="2" fill="#a4d63a"/>
<text transform="translate(516.50,129.30) scale(0.84,1)" fill="#0e1400" stroke="#0e1400" stroke-width="0.2" font-size="8.5" text-anchor="middle" font-weight="normal" >Mean(1.2V)</text>
<rect x="496.5" y="256" width="40" height="8.4" rx="2" fill="#ff8c1a"/>
<text transform="translate(516.50,263.10) scale(0.84,1)" fill="#201000" stroke="#201000" stroke-width="0.2" font-size="8.5" text-anchor="middle" font-weight="normal" >Mean(Vrail)</text>
<rect x="493" y="386" width="44" height="8.4" rx="2" fill="#2a8cf0"/>
<text transform="translate(515.00,393.10) scale(0.84,1)" fill="#00102a" stroke="#00102a" stroke-width="0.2" font-size="8.5" text-anchor="middle" font-weight="normal" >Mean(12Vin)</text>
<rect x="7.0" y="420" width="30.7" height="12" fill="#ffff00"/>
<rect x="7.0" y="432" width="30.7" height="24.5" fill="#3f3f3f"/>
<text transform="translate(9.30,430.30) scale(0.87,1)" fill="#2a2a00" stroke="#2a2a00" stroke-width="0.2" font-size="10.5" text-anchor="start" font-weight="normal" >C1</text>
<text transform="translate(35.90,442.20) scale(0.95,1)" fill="#e8e8e8" stroke="#e8e8e8" stroke-width="0.2" font-size="10.5" text-anchor="end" font-weight="normal" >20<tspan letter-spacing="0.8">...</tspan></text>
<text transform="translate(35.90,453.10) scale(0.95,1)" fill="#e8e8e8" stroke="#e8e8e8" stroke-width="0.2" font-size="10.5" text-anchor="end" font-weight="normal" >-85<tspan letter-spacing="0.8">...</tspan></text>
<rect x="40.0" y="420" width="30.7" height="12" fill="#ff66b4"/>
<rect x="40.0" y="432" width="30.7" height="24.5" fill="#3f3f3f"/>
<text transform="translate(42.30,430.30) scale(0.87,1)" fill="#4a0a30" stroke="#4a0a30" stroke-width="0.2" font-size="10.5" text-anchor="start" font-weight="normal" >C2</text>
<text transform="translate(68.90,442.20) scale(0.95,1)" fill="#e8e8e8" stroke="#e8e8e8" stroke-width="0.2" font-size="10.5" text-anchor="end" font-weight="normal" >20<tspan letter-spacing="0.8">...</tspan></text>
<text transform="translate(68.90,453.10) scale(0.95,1)" fill="#e8e8e8" stroke="#e8e8e8" stroke-width="0.2" font-size="10.5" text-anchor="end" font-weight="normal" >-69<tspan letter-spacing="0.8">...</tspan></text>
<rect x="73.0" y="420" width="30.7" height="12" fill="#00ffff"/>
<rect x="73.0" y="432" width="30.7" height="24.5" fill="#3f3f3f"/>
<text transform="translate(75.30,430.30) scale(0.87,1)" fill="#003a4a" stroke="#003a4a" stroke-width="0.2" font-size="10.5" text-anchor="start" font-weight="normal" >C3</text>
<text transform="translate(101.90,442.20) scale(0.95,1)" fill="#e8e8e8" stroke="#e8e8e8" stroke-width="0.2" font-size="10.5" text-anchor="end" font-weight="normal" >20<tspan letter-spacing="0.8">...</tspan></text>
<text transform="translate(101.60,453.10) scale(0.95,1)" fill="#e8e8e8" stroke="#e8e8e8" stroke-width="0.2" font-size="10.5" text-anchor="end" font-weight="normal" >-2 V</text>
<rect x="106.0" y="420" width="30.7" height="12" fill="#00c000"/>
<rect x="106.0" y="432" width="30.7" height="24.5" fill="#3f3f3f"/>
<text transform="translate(108.30,430.30) scale(0.87,1)" fill="#002a00" stroke="#002a00" stroke-width="0.2" font-size="10.5" text-anchor="start" font-weight="normal" >C4</text>
<text transform="translate(134.90,442.20) scale(0.95,1)" fill="#e8e8e8" stroke="#e8e8e8" stroke-width="0.2" font-size="10.5" text-anchor="end" font-weight="normal" >20<tspan letter-spacing="0.8">...</tspan></text>
<text transform="translate(134.60,453.10) scale(0.95,1)" fill="#e8e8e8" stroke="#e8e8e8" stroke-width="0.2" font-size="10.5" text-anchor="end" font-weight="normal" >-1 V</text>
<rect x="139.0" y="420" width="30.7" height="12" fill="#d8ffd8"/>
<rect x="139.0" y="432" width="30.7" height="24.5" fill="#3f3f3f"/>
<text transform="translate(141.30,430.30) scale(0.87,1)" fill="#2a3a2a" stroke="#2a3a2a" stroke-width="0.2" font-size="10.5" text-anchor="start" font-weight="normal" >C5</text>
<text transform="translate(167.60,442.20) scale(0.95,1)" fill="#e8e8e8" stroke="#e8e8e8" stroke-width="0.2" font-size="10.5" text-anchor="end" font-weight="normal" >7 mV</text>
<text transform="translate(167.60,453.10) scale(0.95,1)" fill="#e8e8e8" stroke="#e8e8e8" stroke-width="0.2" font-size="10.5" text-anchor="end" font-weight="normal" >-1 V</text>
<rect x="172.0" y="420" width="30.7" height="12" fill="#8080ff"/>
<rect x="172.0" y="432" width="30.7" height="24.5" fill="#3f3f3f"/>
<text transform="translate(174.30,430.30) scale(0.87,1)" fill="#10105a" stroke="#10105a" stroke-width="0.2" font-size="10.5" text-anchor="start" font-weight="normal" >C6</text>
<text transform="translate(200.60,442.20) scale(0.95,1)" fill="#e8e8e8" stroke="#e8e8e8" stroke-width="0.2" font-size="10.5" text-anchor="end" font-weight="normal" >2.0 V</text>
<text transform="translate(200.60,453.10) scale(0.95,1)" fill="#e8e8e8" stroke="#e8e8e8" stroke-width="0.2" font-size="10.5" text-anchor="end" font-weight="normal" >-7 V</text>
<rect x="205.0" y="420" width="30.7" height="12" fill="#ff0000"/>
<rect x="205.0" y="432" width="30.7" height="24.5" fill="#3f3f3f"/>
<text transform="translate(207.30,430.30) scale(0.87,1)" fill="#4a0000" stroke="#4a0000" stroke-width="0.2" font-size="10.5" text-anchor="start" font-weight="normal" >C7</text>
<text transform="translate(233.60,442.20) scale(0.95,1)" fill="#e8e8e8" stroke="#e8e8e8" stroke-width="0.2" font-size="10.5" text-anchor="end" font-weight="normal" >5.0 V</text>
<text transform="translate(233.60,453.10) scale(0.95,1)" fill="#e8e8e8" stroke="#e8e8e8" stroke-width="0.2" font-size="10.5" text-anchor="end" font-weight="normal" >-8 V</text>
<rect x="238.0" y="420" width="30.7" height="12" fill="#ff8000"/>
<rect x="238.0" y="432" width="30.7" height="24.5" fill="#3f3f3f"/>
<text transform="translate(240.30,430.30) scale(0.87,1)" fill="#4a2000" stroke="#4a2000" stroke-width="0.2" font-size="10.5" text-anchor="start" font-weight="normal" >C8</text>
<text transform="translate(266.60,442.20) scale(0.95,1)" fill="#e8e8e8" stroke="#e8e8e8" stroke-width="0.2" font-size="10.5" text-anchor="end" font-weight="normal" >4.0 A</text>
<text transform="translate(266.60,453.10) scale(0.95,1)" fill="#e8e8e8" stroke="#e8e8e8" stroke-width="0.2" font-size="10.5" text-anchor="end" font-weight="normal" >-11 A</text>
<rect x="271.5" y="420.5" width="30.5" height="36" fill="#262626" stroke="#d0d0d0" stroke-width="1" stroke-dasharray="2 1.5"/>
<rect x="280.5" y="437.2" width="10" height="1.6" fill="#f0f0f0"/><rect x="284.7" y="433" width="1.6" height="10" fill="#f0f0f0"/>
<rect x="487.0" y="420" width="51.5" height="12" fill="#ffc000"/>
<rect x="487.0" y="432" width="51.5" height="24.3" fill="#3f3f3f"/>
<text transform="translate(489.50,429.50) scale(0.87,1)" fill="#3a2a00" stroke="#3a2a00" stroke-width="0.2" font-size="10.5" text-anchor="start" font-weight="normal" >Mean(9<tspan letter-spacing="1.3">...</tspan></text>
<text transform="translate(537.00,442.60) scale(0.93,1)" fill="#e8e8e8" stroke="#e8e8e8" stroke-width="0.2" font-size="10.5" text-anchor="end" font-weight="normal" >200 µV</text>
<text transform="translate(537.00,453.60) scale(0.93,1)" fill="#e8e8e8" stroke="#e8e8e8" stroke-width="0.2" font-size="10.5" text-anchor="end" font-weight="normal" >500 µs</text>
<rect x="540.9" y="420" width="51.5" height="12" fill="#ff5fa0"/>
<rect x="540.9" y="432" width="51.5" height="24.3" fill="#3f3f3f"/>
<text transform="translate(543.40,429.50) scale(0.87,1)" fill="#4a0a30" stroke="#4a0a30" stroke-width="0.2" font-size="10.5" text-anchor="start" font-weight="normal" >Mean(7<tspan letter-spacing="1.3">...</tspan></text>
<text transform="translate(590.90,442.60) scale(0.93,1)" fill="#e8e8e8" stroke="#e8e8e8" stroke-width="0.2" font-size="10.5" text-anchor="end" font-weight="normal" >200 µV</text>
<text transform="translate(590.90,453.60) scale(0.93,1)" fill="#e8e8e8" stroke="#e8e8e8" stroke-width="0.2" font-size="10.5" text-anchor="end" font-weight="normal" >500 µs</text>
<rect x="594.8" y="420" width="51.5" height="12" fill="#18c8ff"/>
<rect x="594.8" y="432" width="51.5" height="24.3" fill="#3f3f3f"/>
<text transform="translate(597.30,429.50) scale(0.87,1)" fill="#003a4a" stroke="#003a4a" stroke-width="0.2" font-size="10.5" text-anchor="start" font-weight="normal" >Mean(1<tspan letter-spacing="1.3">...</tspan>.</text>
<text transform="translate(644.80,442.60) scale(0.93,1)" fill="#e8e8e8" stroke="#e8e8e8" stroke-width="0.2" font-size="10.5" text-anchor="end" font-weight="normal" >500 µV</text>
<text transform="translate(644.80,453.60) scale(0.93,1)" fill="#e8e8e8" stroke="#e8e8e8" stroke-width="0.2" font-size="10.5" text-anchor="end" font-weight="normal" >500 µs</text>
<rect x="648.7" y="420" width="51.5" height="12" fill="#8cc63f"/>
<rect x="648.7" y="432" width="51.5" height="24.3" fill="#3f3f3f"/>
<text transform="translate(651.20,429.50) scale(0.87,1)" fill="#1a3a00" stroke="#1a3a00" stroke-width="0.2" font-size="10.5" text-anchor="start" font-weight="normal" >Mean(1<tspan letter-spacing="1.3">...</tspan>.</text>
<text transform="translate(698.70,442.60) scale(0.93,1)" fill="#e8e8e8" stroke="#e8e8e8" stroke-width="0.2" font-size="10.5" text-anchor="end" font-weight="normal" >500 µV</text>
<text transform="translate(698.70,453.60) scale(0.93,1)" fill="#e8e8e8" stroke="#e8e8e8" stroke-width="0.2" font-size="10.5" text-anchor="end" font-weight="normal" >500 µs</text>
<rect x="702.6" y="420" width="51.5" height="12" fill="#ff8000"/>
<rect x="702.6" y="432" width="51.5" height="24.3" fill="#3f3f3f"/>
<text transform="translate(705.10,429.50) scale(0.87,1)" fill="#4a2000" stroke="#4a2000" stroke-width="0.2" font-size="10.5" text-anchor="start" font-weight="normal" >Mean(Vr<tspan letter-spacing="1.3">...</tspan></text>
<text transform="translate(752.60,442.60) scale(0.93,1)" fill="#e8e8e8" stroke="#e8e8e8" stroke-width="0.2" font-size="10.5" text-anchor="end" font-weight="normal" >5.0 mV</text>
<text transform="translate(752.60,453.60) scale(0.93,1)" fill="#e8e8e8" stroke="#e8e8e8" stroke-width="0.2" font-size="10.5" text-anchor="end" font-weight="normal" >500 µs</text>
<rect x="756.5" y="420" width="51.5" height="12" fill="#ff0000"/>
<rect x="756.5" y="432" width="51.5" height="24.3" fill="#3f3f3f"/>
<text transform="translate(759.00,429.50) scale(0.87,1)" fill="#4a0000" stroke="#4a0000" stroke-width="0.2" font-size="10.5" text-anchor="start" font-weight="normal" >Mean(Irail)</text>
<text transform="translate(806.50,442.60) scale(0.93,1)" fill="#e8e8e8" stroke="#e8e8e8" stroke-width="0.2" font-size="10.5" text-anchor="end" font-weight="normal" >5.00 A</text>
<text transform="translate(806.50,453.60) scale(0.93,1)" fill="#e8e8e8" stroke="#e8e8e8" stroke-width="0.2" font-size="10.5" text-anchor="end" font-weight="normal" >500 µs</text>
<rect x="810.5" y="420" width="73" height="36.3" rx="2" fill="#2d4e6c" stroke="#3a90ea" stroke-width="1.6"/>
<path d="M810,422 Q810,419.5 812.5,419.5 H881.5 Q884,419.5 884,422 V432.5 H810 Z" fill="#3a90ea"/>
<text transform="translate(813.00,429.80) scale(0.87,1)" fill="#14285a" stroke="#14285a" stroke-width="0.2" font-size="10.5" text-anchor="start" font-weight="normal" >Mean(12Vin)</text>
<text transform="translate(882.00,442.60) scale(0.93,1)" fill="#e8e8e8" stroke="#e8e8e8" stroke-width="0.2" font-size="10.5" text-anchor="end" font-weight="normal" >20.0 mV</text>
<text transform="translate(882.00,453.60) scale(0.93,1)" fill="#e8e8e8" stroke="#e8e8e8" stroke-width="0.2" font-size="10.5" text-anchor="end" font-weight="normal" >500 µs/div</text>
<rect x="0" y="459" width="960" height="81" fill="#000"/>
<rect x="1" y="461" width="778" height="79" fill="#00003e"/>
<rect x="0" y="460" width="780" height="1" fill="#3e3e62"/><rect x="779" y="460" width="1" height="80" fill="#4c4c80"/><rect x="0" y="460" width="1" height="80" fill="#3e3e70"/>
<rect x="181" y="473" width="59" height="11" fill="#6a0a30"/>
<rect x="181" y="485" width="59" height="11" fill="#6a0a30"/>
<rect x="181" y="497" width="59" height="11" fill="#6a0a30"/>
<rect x="181" y="509" width="59" height="11" fill="#6a0a30"/>
<rect x="181" y="521" width="59" height="11" fill="#6a0a30"/>
<rect x="181" y="533" width="59" height="11" fill="#6a0a30"/>
<rect x="1" y="472" width="778" height="1" fill="#2c2c66"/><line x1="1" y1="472.5" x2="779" y2="472.5" stroke="#4a4a84" stroke-width="1" stroke-dasharray="1 2"/><rect x="1" y="484" width="778" height="1" fill="#2c2c66"/><line x1="1" y1="484.5" x2="779" y2="484.5" stroke="#4a4a84" stroke-width="1" stroke-dasharray="1 2"/><rect x="1" y="496" width="778" height="1" fill="#2c2c66"/><line x1="1" y1="496.5" x2="779" y2="496.5" stroke="#4a4a84" stroke-width="1" stroke-dasharray="1 2"/><rect x="1" y="508" width="778" height="1" fill="#2c2c66"/><line x1="1" y1="508.5" x2="779" y2="508.5" stroke="#4a4a84" stroke-width="1" stroke-dasharray="1 2"/><rect x="1" y="520" width="778" height="1" fill="#2c2c66"/><line x1="1" y1="520.5" x2="779" y2="520.5" stroke="#4a4a84" stroke-width="1" stroke-dasharray="1 2"/><rect x="1" y="532" width="778" height="1" fill="#2c2c66"/><line x1="1" y1="532.5" x2="779" y2="532.5" stroke="#4a4a84" stroke-width="1" stroke-dasharray="1 2"/><rect x="60" y="461" width="1" height="79" fill="#2c2c66"/><line x1="60.5" y1="461" x2="60.5" y2="540" stroke="#4a4a84" stroke-width="1" stroke-dasharray="1 2"/><rect x="120" y="461" width="1" height="79" fill="#2c2c66"/><line x1="120.5" y1="461" x2="120.5" y2="540" stroke="#4a4a84" stroke-width="1" stroke-dasharray="1 2"/><rect x="180" y="461" width="1" height="79" fill="#2c2c66"/><line x1="180.5" y1="461" x2="180.5" y2="540" stroke="#4a4a84" stroke-width="1" stroke-dasharray="1 2"/><rect x="240" y="461" width="1" height="79" fill="#2c2c66"/><line x1="240.5" y1="461" x2="240.5" y2="540" stroke="#4a4a84" stroke-width="1" stroke-dasharray="1 2"/><rect x="300" y="461" width="1" height="79" fill="#2c2c66"/><line x1="300.5" y1="461" x2="300.5" y2="540" stroke="#4a4a84" stroke-width="1" stroke-dasharray="1 2"/><rect x="360" y="461" width="1" height="79" fill="#2c2c66"/><line x1="360.5" y1="461" x2="360.5" y2="540" stroke="#4a4a84" stroke-width="1" stroke-dasharray="1 2"/><rect x="420" y="461" width="1" height="79" fill="#2c2c66"/><line x1="420.5" y1="461" x2="420.5" y2="540" stroke="#4a4a84" stroke-width="1" stroke-dasharray="1 2"/><rect x="480" y="461" width="1" height="79" fill="#2c2c66"/><line x1="480.5" y1="461" x2="480.5" y2="540" stroke="#4a4a84" stroke-width="1" stroke-dasharray="1 2"/><rect x="540" y="461" width="1" height="79" fill="#2c2c66"/><line x1="540.5" y1="461" x2="540.5" y2="540" stroke="#4a4a84" stroke-width="1" stroke-dasharray="1 2"/><rect x="600" y="461" width="1" height="79" fill="#2c2c66"/><line x1="600.5" y1="461" x2="600.5" y2="540" stroke="#4a4a84" stroke-width="1" stroke-dasharray="1 2"/><rect x="660" y="461" width="1" height="79" fill="#2c2c66"/><line x1="660.5" y1="461" x2="660.5" y2="540" stroke="#4a4a84" stroke-width="1" stroke-dasharray="1 2"/><rect x="720" y="461" width="1" height="79" fill="#2c2c66"/><line x1="720.5" y1="461" x2="720.5" y2="540" stroke="#4a4a84" stroke-width="1" stroke-dasharray="1 2"/>
<text transform="translate(2.50,470.80) scale(0.945,1)" fill="#ececf4" font-size="10.2" text-anchor="start" font-weight="bold" >Numerics</text>
<text transform="translate(119.20,470.80) scale(0.945,1)" fill="#ececf4" font-size="10.2" text-anchor="end" font-weight="bold" >RMS</text>
<text transform="translate(179.05,470.80) scale(0.945,1)" fill="#ececf4" font-size="10.2" text-anchor="end" font-weight="bold" >Sdev</text>
<text transform="translate(238.90,470.80) scale(0.945,1)" fill="#ececf4" font-size="10.2" text-anchor="end" font-weight="bold" >Mean</text>
<text transform="translate(298.75,470.80) scale(0.945,1)" fill="#ececf4" font-size="10.2" text-anchor="end" font-weight="bold" >Pk+</text>
<text transform="translate(358.60,470.80) scale(0.945,1)" fill="#ececf4" font-size="10.2" text-anchor="end" font-weight="bold" >PkPk</text>
<text transform="translate(418.45,470.80) scale(0.945,1)" fill="#ececf4" font-size="10.2" text-anchor="end" font-weight="bold" >Freq</text>
<text transform="translate(2.50,482.90) scale(0.945,1)" fill="#ececf4" font-size="10.2" text-anchor="start" font-weight="bold" >900mV</text>
<text transform="translate(119.20,482.90) scale(0.93,1)" fill="#dcdcec" stroke="#dcdcec" stroke-width="0.2" font-size="10.2" text-anchor="end" font-weight="normal" >899.460 mV</text>
<text transform="translate(179.05,482.90) scale(0.93,1)" fill="#dcdcec" stroke="#dcdcec" stroke-width="0.2" font-size="10.2" text-anchor="end" font-weight="normal" >6.006 mV</text>
<text transform="translate(238.90,482.90) scale(0.93,1)" fill="#dcdcec" stroke="#dcdcec" stroke-width="0.2" font-size="10.2" text-anchor="end" font-weight="normal" >899.440 mV</text>
<text transform="translate(298.75,482.90) scale(0.93,1)" fill="#dcdcec" stroke="#dcdcec" stroke-width="0.2" font-size="10.2" text-anchor="end" font-weight="normal" >925.21 mV</text>
<text transform="translate(358.60,482.90) scale(0.93,1)" fill="#dcdcec" stroke="#dcdcec" stroke-width="0.2" font-size="10.2" text-anchor="end" font-weight="normal" >34.74 mV</text>
<text transform="translate(418.45,482.90) scale(0.93,1)" fill="#dcdcec" stroke="#dcdcec" stroke-width="0.2" font-size="10.2" text-anchor="end" font-weight="normal" >506.21 kHz</text>
<text transform="translate(2.50,494.90) scale(0.945,1)" fill="#ececf4" font-size="10.2" text-anchor="start" font-weight="bold" >700mV</text>
<text transform="translate(119.20,494.90) scale(0.93,1)" fill="#dcdcec" stroke="#dcdcec" stroke-width="0.2" font-size="10.2" text-anchor="end" font-weight="normal" >700.046 mV</text>
<text transform="translate(179.05,494.90) scale(0.93,1)" fill="#dcdcec" stroke="#dcdcec" stroke-width="0.2" font-size="10.2" text-anchor="end" font-weight="normal" >4.133 mV</text>
<text transform="translate(238.90,494.90) scale(0.93,1)" fill="#dcdcec" stroke="#dcdcec" stroke-width="0.2" font-size="10.2" text-anchor="end" font-weight="normal" >700.033 mV</text>
<text transform="translate(298.75,494.90) scale(0.93,1)" fill="#dcdcec" stroke="#dcdcec" stroke-width="0.2" font-size="10.2" text-anchor="end" font-weight="normal" >721.30 mV</text>
<text transform="translate(358.60,494.90) scale(0.93,1)" fill="#dcdcec" stroke="#dcdcec" stroke-width="0.2" font-size="10.2" text-anchor="end" font-weight="normal" >26.42 mV</text>
<text transform="translate(418.45,494.90) scale(0.93,1)" fill="#dcdcec" stroke="#dcdcec" stroke-width="0.2" font-size="10.2" text-anchor="end" font-weight="normal" >506.21 kHz</text>
<text transform="translate(2.50,507.00) scale(0.945,1)" fill="#ececf4" font-size="10.2" text-anchor="start" font-weight="bold" >1.5V</text>
<text transform="translate(119.20,507.00) scale(0.93,1)" fill="#dcdcec" stroke="#dcdcec" stroke-width="0.2" font-size="10.2" text-anchor="end" font-weight="normal" >1.498524 V</text>
<text transform="translate(179.05,507.00) scale(0.93,1)" fill="#dcdcec" stroke="#dcdcec" stroke-width="0.2" font-size="10.2" text-anchor="end" font-weight="normal" >5.926 mV</text>
<text transform="translate(238.90,507.00) scale(0.93,1)" fill="#dcdcec" stroke="#dcdcec" stroke-width="0.2" font-size="10.2" text-anchor="end" font-weight="normal" >1.498513 V</text>
<text transform="translate(298.75,507.00) scale(0.93,1)" fill="#dcdcec" stroke="#dcdcec" stroke-width="0.2" font-size="10.2" text-anchor="end" font-weight="normal" >1.51884 V</text>
<text transform="translate(358.60,507.00) scale(0.93,1)" fill="#dcdcec" stroke="#dcdcec" stroke-width="0.2" font-size="10.2" text-anchor="end" font-weight="normal" >31.94 mV</text>
<text transform="translate(418.45,507.00) scale(0.93,1)" fill="#dcdcec" stroke="#dcdcec" stroke-width="0.2" font-size="10.2" text-anchor="end" font-weight="normal" >506.21 kHz</text>
<text transform="translate(2.50,519.10) scale(0.945,1)" fill="#ececf4" font-size="10.2" text-anchor="start" font-weight="bold" >1.2V</text>
<text transform="translate(119.20,519.10) scale(0.93,1)" fill="#dcdcec" stroke="#dcdcec" stroke-width="0.2" font-size="10.2" text-anchor="end" font-weight="normal" >1.199758 V</text>
<text transform="translate(179.05,519.10) scale(0.93,1)" fill="#dcdcec" stroke="#dcdcec" stroke-width="0.2" font-size="10.2" text-anchor="end" font-weight="normal" >4.018 mV</text>
<text transform="translate(238.90,519.10) scale(0.93,1)" fill="#dcdcec" stroke="#dcdcec" stroke-width="0.2" font-size="10.2" text-anchor="end" font-weight="normal" >1.199752 V</text>
<text transform="translate(298.75,519.10) scale(0.93,1)" fill="#dcdcec" stroke="#dcdcec" stroke-width="0.2" font-size="10.2" text-anchor="end" font-weight="normal" >1.21609 V</text>
<text transform="translate(358.60,519.10) scale(0.93,1)" fill="#dcdcec" stroke="#dcdcec" stroke-width="0.2" font-size="10.2" text-anchor="end" font-weight="normal" >23.34 mV</text>
<text transform="translate(418.45,519.10) scale(0.93,1)" fill="#dcdcec" stroke="#dcdcec" stroke-width="0.2" font-size="10.2" text-anchor="end" font-weight="normal" >506.21 kHz</text>
<text transform="translate(2.50,531.10) scale(0.945,1)" fill="#ececf4" font-size="10.2" text-anchor="start" font-weight="bold" >Vrail</text>
<text transform="translate(119.20,531.10) scale(0.93,1)" fill="#dcdcec" stroke="#dcdcec" stroke-width="0.2" font-size="10.2" text-anchor="end" font-weight="normal" >1.000988 V</text>
<text transform="translate(179.05,531.10) scale(0.93,1)" fill="#dcdcec" stroke="#dcdcec" stroke-width="0.2" font-size="10.2" text-anchor="end" font-weight="normal" >3.653 mV</text>
<text transform="translate(238.90,531.10) scale(0.93,1)" fill="#dcdcec" stroke="#dcdcec" stroke-width="0.2" font-size="10.2" text-anchor="end" font-weight="normal" >1.000982 V</text>
<text transform="translate(298.75,531.10) scale(0.93,1)" fill="#dcdcec" stroke="#dcdcec" stroke-width="0.2" font-size="10.2" text-anchor="end" font-weight="normal" >1.03544 V</text>
<text transform="translate(358.60,531.10) scale(0.93,1)" fill="#dcdcec" stroke="#dcdcec" stroke-width="0.2" font-size="10.2" text-anchor="end" font-weight="normal" >21.74 mV</text>
<text transform="translate(418.45,531.10) scale(0.93,1)" fill="#dcdcec" stroke="#dcdcec" stroke-width="0.2" font-size="10.2" text-anchor="end" font-weight="normal" >506.21 kHz</text>
<text transform="translate(2.50,543.20) scale(0.945,1)" fill="#ececf4" font-size="10.2" text-anchor="start" font-weight="bold" >Irail</text>
<text transform="translate(119.20,543.20) scale(0.93,1)" fill="#dcdcec" stroke="#dcdcec" stroke-width="0.2" font-size="10.2" text-anchor="end" font-weight="normal" >10.3747 A</text>
<text transform="translate(179.05,543.20) scale(0.93,1)" fill="#dcdcec" stroke="#dcdcec" stroke-width="0.2" font-size="10.2" text-anchor="end" font-weight="normal" >19.3 mA</text>
<text transform="translate(238.90,543.20) scale(0.93,1)" fill="#dcdcec" stroke="#dcdcec" stroke-width="0.2" font-size="10.2" text-anchor="end" font-weight="normal" >10.3744 A</text>
<text transform="translate(298.75,543.20) scale(0.93,1)" fill="#dcdcec" stroke="#dcdcec" stroke-width="0.2" font-size="10.2" text-anchor="end" font-weight="normal" >20.006 A</text>
<text transform="translate(358.60,543.20) scale(0.93,1)" fill="#dcdcec" stroke="#dcdcec" stroke-width="0.2" font-size="10.2" text-anchor="end" font-weight="normal" >2.032 A</text>
<text transform="translate(418.45,543.20) scale(0.93,1)" fill="#dcdcec" stroke="#dcdcec" stroke-width="0.2" font-size="10.2" text-anchor="end" font-weight="normal" >506.21 kHz</text>
<rect x="799.5" y="518.5" width="83.5" height="11.5" fill="#f4f4f4"/>
<rect x="799.5" y="530" width="83.5" height="10" fill="#4a4a4a"/>
<text transform="translate(802.00,528.60) scale(0.87,1)" fill="#3a3050" stroke="#3a3050" stroke-width="0.2" font-size="10.5" text-anchor="start" font-weight="normal" >Tbase</text>
<text transform="translate(882.00,528.60) scale(0.87,1)" fill="#3a3050" stroke="#3a3050" stroke-width="0.2" font-size="10.5" text-anchor="end" font-weight="normal" >0.00 ms</text>
<text transform="translate(880.00,539.50) scale(0.87,1)" fill="#f0f0f0" stroke="#f0f0f0" stroke-width="0.2" font-size="10.5" text-anchor="end" font-weight="normal" >500 µs/div</text>
<rect x="886" y="518.5" width="72" height="11.5" fill="#f4f4f4"/>
<rect x="886" y="530" width="72" height="10" fill="#4a4a4a"/>
<text transform="translate(888.00,528.60) scale(0.87,1)" fill="#3a3050" stroke="#3a3050" stroke-width="0.2" font-size="10.5" text-anchor="start" font-weight="normal" >Trigger</text>
<rect x="923.7" y="519.8" width="14.2" height="9.2" rx="2" fill="#000"/>
<rect x="940.5" y="519.8" width="16" height="9.2" rx="2" fill="#000"/>
<text transform="translate(930.80,527.60) scale(0.87,1)" fill="#f0f0f0" stroke="#f0f0f0" stroke-width="0.2" font-size="8.5" text-anchor="middle" font-weight="normal" >C8</text>
<text transform="translate(948.50,527.60) scale(0.87,1)" fill="#f0f0f0" stroke="#f0f0f0" stroke-width="0.2" font-size="8.5" text-anchor="middle" font-weight="normal" >DC</text>
<text transform="translate(888.00,539.50) scale(0.87,1)" fill="#f0f0f0" stroke="#f0f0f0" stroke-width="0.2" font-size="10.5" text-anchor="start" font-weight="normal" >Stop</text>
<text transform="translate(957.00,539.50) scale(0.87,1)" fill="#f0f0f0" stroke="#f0f0f0" stroke-width="0.2" font-size="10.5" text-anchor="end" font-weight="normal" >10.65 V</text>
</svg></body></html>
